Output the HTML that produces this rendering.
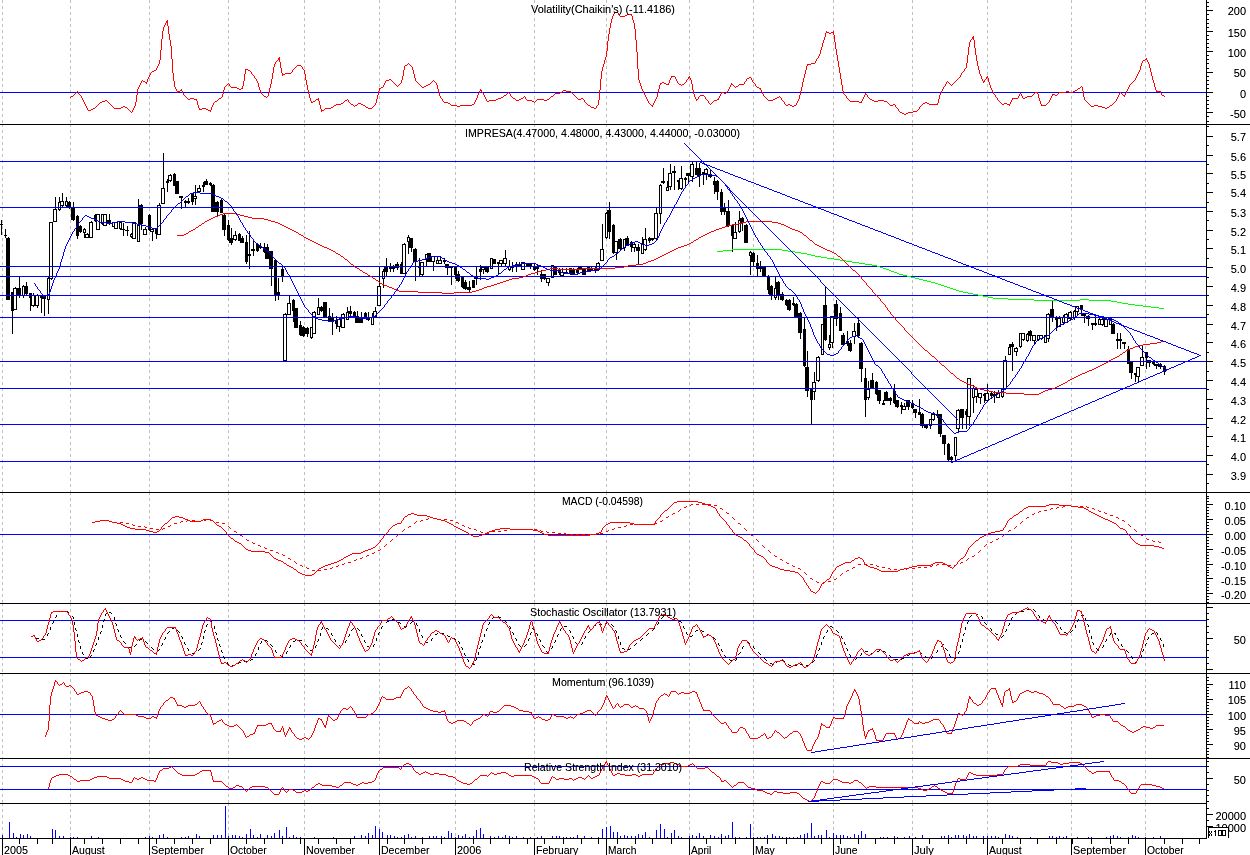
<!DOCTYPE html>
<html><head><meta charset="utf-8"><title>IMPRESA chart</title>
<style>
html,body{margin:0;padding:0;background:#fff;}
body{width:1250px;height:855px;overflow:hidden;font-family:"Liberation Sans",sans-serif;}
svg{display:block;}
text{font-family:"Liberation Sans",sans-serif;}
</style></head><body>
<svg width="1250" height="855" viewBox="0 0 1250 855">
<defs><filter id="txt" x="0" y="0" width="100%" height="100%" filterUnits="userSpaceOnUse" color-interpolation-filters="sRGB"><feComponentTransfer><feFuncA type="linear" slope="1.15" intercept="0"/></feComponentTransfer></filter></defs>
<rect x="0" y="0" width="1250" height="855" fill="#ffffff"/>
<g shape-rendering="crispEdges">
<line x1="2.5" y1="0" x2="2.5" y2="124" stroke="#c0c0c0" stroke-width="1" stroke-dasharray="3,3"/>
<line x1="2.5" y1="124" x2="2.5" y2="492" stroke="#c0c0c0" stroke-width="1" stroke-dasharray="3,3"/>
<line x1="2.5" y1="492" x2="2.5" y2="603" stroke="#c0c0c0" stroke-width="1" stroke-dasharray="3,3"/>
<line x1="2.5" y1="603" x2="2.5" y2="673" stroke="#c0c0c0" stroke-width="1" stroke-dasharray="3,3"/>
<line x1="2.5" y1="673" x2="2.5" y2="758" stroke="#c0c0c0" stroke-width="1" stroke-dasharray="3,3"/>
<line x1="2.5" y1="758" x2="2.5" y2="803" stroke="#c0c0c0" stroke-width="1" stroke-dasharray="3,3"/>
<line x1="2.5" y1="803" x2="2.5" y2="838" stroke="#c0c0c0" stroke-width="1" stroke-dasharray="3,3"/>
<line x1="70.5" y1="0" x2="70.5" y2="124" stroke="#c0c0c0" stroke-width="1" stroke-dasharray="3,3"/>
<line x1="70.5" y1="124" x2="70.5" y2="492" stroke="#c0c0c0" stroke-width="1" stroke-dasharray="3,3"/>
<line x1="70.5" y1="492" x2="70.5" y2="603" stroke="#c0c0c0" stroke-width="1" stroke-dasharray="3,3"/>
<line x1="70.5" y1="603" x2="70.5" y2="673" stroke="#c0c0c0" stroke-width="1" stroke-dasharray="3,3"/>
<line x1="70.5" y1="673" x2="70.5" y2="758" stroke="#c0c0c0" stroke-width="1" stroke-dasharray="3,3"/>
<line x1="70.5" y1="758" x2="70.5" y2="803" stroke="#c0c0c0" stroke-width="1" stroke-dasharray="3,3"/>
<line x1="70.5" y1="803" x2="70.5" y2="838" stroke="#c0c0c0" stroke-width="1" stroke-dasharray="3,3"/>
<line x1="149.5" y1="0" x2="149.5" y2="124" stroke="#c0c0c0" stroke-width="1" stroke-dasharray="3,3"/>
<line x1="149.5" y1="124" x2="149.5" y2="492" stroke="#c0c0c0" stroke-width="1" stroke-dasharray="3,3"/>
<line x1="149.5" y1="492" x2="149.5" y2="603" stroke="#c0c0c0" stroke-width="1" stroke-dasharray="3,3"/>
<line x1="149.5" y1="603" x2="149.5" y2="673" stroke="#c0c0c0" stroke-width="1" stroke-dasharray="3,3"/>
<line x1="149.5" y1="673" x2="149.5" y2="758" stroke="#c0c0c0" stroke-width="1" stroke-dasharray="3,3"/>
<line x1="149.5" y1="758" x2="149.5" y2="803" stroke="#c0c0c0" stroke-width="1" stroke-dasharray="3,3"/>
<line x1="149.5" y1="803" x2="149.5" y2="838" stroke="#c0c0c0" stroke-width="1" stroke-dasharray="3,3"/>
<line x1="228.5" y1="0" x2="228.5" y2="124" stroke="#c0c0c0" stroke-width="1" stroke-dasharray="3,3"/>
<line x1="228.5" y1="124" x2="228.5" y2="492" stroke="#c0c0c0" stroke-width="1" stroke-dasharray="3,3"/>
<line x1="228.5" y1="492" x2="228.5" y2="603" stroke="#c0c0c0" stroke-width="1" stroke-dasharray="3,3"/>
<line x1="228.5" y1="603" x2="228.5" y2="673" stroke="#c0c0c0" stroke-width="1" stroke-dasharray="3,3"/>
<line x1="228.5" y1="673" x2="228.5" y2="758" stroke="#c0c0c0" stroke-width="1" stroke-dasharray="3,3"/>
<line x1="228.5" y1="758" x2="228.5" y2="803" stroke="#c0c0c0" stroke-width="1" stroke-dasharray="3,3"/>
<line x1="228.5" y1="803" x2="228.5" y2="838" stroke="#c0c0c0" stroke-width="1" stroke-dasharray="3,3"/>
<line x1="304.5" y1="0" x2="304.5" y2="124" stroke="#c0c0c0" stroke-width="1" stroke-dasharray="3,3"/>
<line x1="304.5" y1="124" x2="304.5" y2="492" stroke="#c0c0c0" stroke-width="1" stroke-dasharray="3,3"/>
<line x1="304.5" y1="492" x2="304.5" y2="603" stroke="#c0c0c0" stroke-width="1" stroke-dasharray="3,3"/>
<line x1="304.5" y1="603" x2="304.5" y2="673" stroke="#c0c0c0" stroke-width="1" stroke-dasharray="3,3"/>
<line x1="304.5" y1="673" x2="304.5" y2="758" stroke="#c0c0c0" stroke-width="1" stroke-dasharray="3,3"/>
<line x1="304.5" y1="758" x2="304.5" y2="803" stroke="#c0c0c0" stroke-width="1" stroke-dasharray="3,3"/>
<line x1="304.5" y1="803" x2="304.5" y2="838" stroke="#c0c0c0" stroke-width="1" stroke-dasharray="3,3"/>
<line x1="379.5" y1="0" x2="379.5" y2="124" stroke="#c0c0c0" stroke-width="1" stroke-dasharray="3,3"/>
<line x1="379.5" y1="124" x2="379.5" y2="492" stroke="#c0c0c0" stroke-width="1" stroke-dasharray="3,3"/>
<line x1="379.5" y1="492" x2="379.5" y2="603" stroke="#c0c0c0" stroke-width="1" stroke-dasharray="3,3"/>
<line x1="379.5" y1="603" x2="379.5" y2="673" stroke="#c0c0c0" stroke-width="1" stroke-dasharray="3,3"/>
<line x1="379.5" y1="673" x2="379.5" y2="758" stroke="#c0c0c0" stroke-width="1" stroke-dasharray="3,3"/>
<line x1="379.5" y1="758" x2="379.5" y2="803" stroke="#c0c0c0" stroke-width="1" stroke-dasharray="3,3"/>
<line x1="379.5" y1="803" x2="379.5" y2="838" stroke="#c0c0c0" stroke-width="1" stroke-dasharray="3,3"/>
<line x1="455.5" y1="0" x2="455.5" y2="124" stroke="#c0c0c0" stroke-width="1" stroke-dasharray="3,3"/>
<line x1="455.5" y1="124" x2="455.5" y2="492" stroke="#c0c0c0" stroke-width="1" stroke-dasharray="3,3"/>
<line x1="455.5" y1="492" x2="455.5" y2="603" stroke="#c0c0c0" stroke-width="1" stroke-dasharray="3,3"/>
<line x1="455.5" y1="603" x2="455.5" y2="673" stroke="#c0c0c0" stroke-width="1" stroke-dasharray="3,3"/>
<line x1="455.5" y1="673" x2="455.5" y2="758" stroke="#c0c0c0" stroke-width="1" stroke-dasharray="3,3"/>
<line x1="455.5" y1="758" x2="455.5" y2="803" stroke="#c0c0c0" stroke-width="1" stroke-dasharray="3,3"/>
<line x1="455.5" y1="803" x2="455.5" y2="838" stroke="#c0c0c0" stroke-width="1" stroke-dasharray="3,3"/>
<line x1="534.5" y1="0" x2="534.5" y2="124" stroke="#c0c0c0" stroke-width="1" stroke-dasharray="3,3"/>
<line x1="534.5" y1="124" x2="534.5" y2="492" stroke="#c0c0c0" stroke-width="1" stroke-dasharray="3,3"/>
<line x1="534.5" y1="492" x2="534.5" y2="603" stroke="#c0c0c0" stroke-width="1" stroke-dasharray="3,3"/>
<line x1="534.5" y1="603" x2="534.5" y2="673" stroke="#c0c0c0" stroke-width="1" stroke-dasharray="3,3"/>
<line x1="534.5" y1="673" x2="534.5" y2="758" stroke="#c0c0c0" stroke-width="1" stroke-dasharray="3,3"/>
<line x1="534.5" y1="758" x2="534.5" y2="803" stroke="#c0c0c0" stroke-width="1" stroke-dasharray="3,3"/>
<line x1="534.5" y1="803" x2="534.5" y2="838" stroke="#c0c0c0" stroke-width="1" stroke-dasharray="3,3"/>
<line x1="606.5" y1="0" x2="606.5" y2="124" stroke="#c0c0c0" stroke-width="1" stroke-dasharray="3,3"/>
<line x1="606.5" y1="124" x2="606.5" y2="492" stroke="#c0c0c0" stroke-width="1" stroke-dasharray="3,3"/>
<line x1="606.5" y1="492" x2="606.5" y2="603" stroke="#c0c0c0" stroke-width="1" stroke-dasharray="3,3"/>
<line x1="606.5" y1="603" x2="606.5" y2="673" stroke="#c0c0c0" stroke-width="1" stroke-dasharray="3,3"/>
<line x1="606.5" y1="673" x2="606.5" y2="758" stroke="#c0c0c0" stroke-width="1" stroke-dasharray="3,3"/>
<line x1="606.5" y1="758" x2="606.5" y2="803" stroke="#c0c0c0" stroke-width="1" stroke-dasharray="3,3"/>
<line x1="606.5" y1="803" x2="606.5" y2="838" stroke="#c0c0c0" stroke-width="1" stroke-dasharray="3,3"/>
<line x1="689.5" y1="0" x2="689.5" y2="124" stroke="#c0c0c0" stroke-width="1" stroke-dasharray="3,3"/>
<line x1="689.5" y1="124" x2="689.5" y2="492" stroke="#c0c0c0" stroke-width="1" stroke-dasharray="3,3"/>
<line x1="689.5" y1="492" x2="689.5" y2="603" stroke="#c0c0c0" stroke-width="1" stroke-dasharray="3,3"/>
<line x1="689.5" y1="603" x2="689.5" y2="673" stroke="#c0c0c0" stroke-width="1" stroke-dasharray="3,3"/>
<line x1="689.5" y1="673" x2="689.5" y2="758" stroke="#c0c0c0" stroke-width="1" stroke-dasharray="3,3"/>
<line x1="689.5" y1="758" x2="689.5" y2="803" stroke="#c0c0c0" stroke-width="1" stroke-dasharray="3,3"/>
<line x1="689.5" y1="803" x2="689.5" y2="838" stroke="#c0c0c0" stroke-width="1" stroke-dasharray="3,3"/>
<line x1="753.5" y1="0" x2="753.5" y2="124" stroke="#c0c0c0" stroke-width="1" stroke-dasharray="3,3"/>
<line x1="753.5" y1="124" x2="753.5" y2="492" stroke="#c0c0c0" stroke-width="1" stroke-dasharray="3,3"/>
<line x1="753.5" y1="492" x2="753.5" y2="603" stroke="#c0c0c0" stroke-width="1" stroke-dasharray="3,3"/>
<line x1="753.5" y1="603" x2="753.5" y2="673" stroke="#c0c0c0" stroke-width="1" stroke-dasharray="3,3"/>
<line x1="753.5" y1="673" x2="753.5" y2="758" stroke="#c0c0c0" stroke-width="1" stroke-dasharray="3,3"/>
<line x1="753.5" y1="758" x2="753.5" y2="803" stroke="#c0c0c0" stroke-width="1" stroke-dasharray="3,3"/>
<line x1="753.5" y1="803" x2="753.5" y2="838" stroke="#c0c0c0" stroke-width="1" stroke-dasharray="3,3"/>
<line x1="833.5" y1="0" x2="833.5" y2="124" stroke="#c0c0c0" stroke-width="1" stroke-dasharray="3,3"/>
<line x1="833.5" y1="124" x2="833.5" y2="492" stroke="#c0c0c0" stroke-width="1" stroke-dasharray="3,3"/>
<line x1="833.5" y1="492" x2="833.5" y2="603" stroke="#c0c0c0" stroke-width="1" stroke-dasharray="3,3"/>
<line x1="833.5" y1="603" x2="833.5" y2="673" stroke="#c0c0c0" stroke-width="1" stroke-dasharray="3,3"/>
<line x1="833.5" y1="673" x2="833.5" y2="758" stroke="#c0c0c0" stroke-width="1" stroke-dasharray="3,3"/>
<line x1="833.5" y1="758" x2="833.5" y2="803" stroke="#c0c0c0" stroke-width="1" stroke-dasharray="3,3"/>
<line x1="833.5" y1="803" x2="833.5" y2="838" stroke="#c0c0c0" stroke-width="1" stroke-dasharray="3,3"/>
<line x1="912.5" y1="0" x2="912.5" y2="124" stroke="#c0c0c0" stroke-width="1" stroke-dasharray="3,3"/>
<line x1="912.5" y1="124" x2="912.5" y2="492" stroke="#c0c0c0" stroke-width="1" stroke-dasharray="3,3"/>
<line x1="912.5" y1="492" x2="912.5" y2="603" stroke="#c0c0c0" stroke-width="1" stroke-dasharray="3,3"/>
<line x1="912.5" y1="603" x2="912.5" y2="673" stroke="#c0c0c0" stroke-width="1" stroke-dasharray="3,3"/>
<line x1="912.5" y1="673" x2="912.5" y2="758" stroke="#c0c0c0" stroke-width="1" stroke-dasharray="3,3"/>
<line x1="912.5" y1="758" x2="912.5" y2="803" stroke="#c0c0c0" stroke-width="1" stroke-dasharray="3,3"/>
<line x1="912.5" y1="803" x2="912.5" y2="838" stroke="#c0c0c0" stroke-width="1" stroke-dasharray="3,3"/>
<line x1="987.5" y1="0" x2="987.5" y2="124" stroke="#c0c0c0" stroke-width="1" stroke-dasharray="3,3"/>
<line x1="987.5" y1="124" x2="987.5" y2="492" stroke="#c0c0c0" stroke-width="1" stroke-dasharray="3,3"/>
<line x1="987.5" y1="492" x2="987.5" y2="603" stroke="#c0c0c0" stroke-width="1" stroke-dasharray="3,3"/>
<line x1="987.5" y1="603" x2="987.5" y2="673" stroke="#c0c0c0" stroke-width="1" stroke-dasharray="3,3"/>
<line x1="987.5" y1="673" x2="987.5" y2="758" stroke="#c0c0c0" stroke-width="1" stroke-dasharray="3,3"/>
<line x1="987.5" y1="758" x2="987.5" y2="803" stroke="#c0c0c0" stroke-width="1" stroke-dasharray="3,3"/>
<line x1="987.5" y1="803" x2="987.5" y2="838" stroke="#c0c0c0" stroke-width="1" stroke-dasharray="3,3"/>
<line x1="1071.5" y1="0" x2="1071.5" y2="124" stroke="#c0c0c0" stroke-width="1" stroke-dasharray="3,3"/>
<line x1="1071.5" y1="124" x2="1071.5" y2="492" stroke="#c0c0c0" stroke-width="1" stroke-dasharray="3,3"/>
<line x1="1071.5" y1="492" x2="1071.5" y2="603" stroke="#c0c0c0" stroke-width="1" stroke-dasharray="3,3"/>
<line x1="1071.5" y1="603" x2="1071.5" y2="673" stroke="#c0c0c0" stroke-width="1" stroke-dasharray="3,3"/>
<line x1="1071.5" y1="673" x2="1071.5" y2="758" stroke="#c0c0c0" stroke-width="1" stroke-dasharray="3,3"/>
<line x1="1071.5" y1="758" x2="1071.5" y2="803" stroke="#c0c0c0" stroke-width="1" stroke-dasharray="3,3"/>
<line x1="1071.5" y1="803" x2="1071.5" y2="838" stroke="#c0c0c0" stroke-width="1" stroke-dasharray="3,3"/>
<line x1="1145.5" y1="0" x2="1145.5" y2="124" stroke="#c0c0c0" stroke-width="1" stroke-dasharray="3,3"/>
<line x1="1145.5" y1="124" x2="1145.5" y2="492" stroke="#c0c0c0" stroke-width="1" stroke-dasharray="3,3"/>
<line x1="1145.5" y1="492" x2="1145.5" y2="603" stroke="#c0c0c0" stroke-width="1" stroke-dasharray="3,3"/>
<line x1="1145.5" y1="603" x2="1145.5" y2="673" stroke="#c0c0c0" stroke-width="1" stroke-dasharray="3,3"/>
<line x1="1145.5" y1="673" x2="1145.5" y2="758" stroke="#c0c0c0" stroke-width="1" stroke-dasharray="3,3"/>
<line x1="1145.5" y1="758" x2="1145.5" y2="803" stroke="#c0c0c0" stroke-width="1" stroke-dasharray="3,3"/>
<line x1="1145.5" y1="803" x2="1145.5" y2="838" stroke="#c0c0c0" stroke-width="1" stroke-dasharray="3,3"/>
<rect x="0" y="124" width="1250" height="1" fill="#000"/>
<rect x="0" y="492" width="1250" height="1" fill="#000"/>
<rect x="0" y="603" width="1250" height="1" fill="#000"/>
<rect x="0" y="673" width="1250" height="1" fill="#000"/>
<rect x="0" y="758" width="1250" height="1" fill="#000"/>
<rect x="0" y="803" width="1207" height="1" fill="#000"/>
<rect x="1206" y="0" width="1" height="839" fill="#000"/>
<rect x="0" y="838" width="1207" height="1" fill="#000"/>
<rect x="1207" y="121" width="2" height="1" fill="#000"/>
<rect x="1207" y="116" width="2" height="1" fill="#000"/>
<rect x="1207" y="112" width="6" height="1" fill="#000"/>
<rect x="1207" y="108" width="2" height="1" fill="#000"/>
<rect x="1207" y="104" width="2" height="1" fill="#000"/>
<rect x="1207" y="100" width="2" height="1" fill="#000"/>
<rect x="1207" y="96" width="2" height="1" fill="#000"/>
<rect x="1207" y="92" width="6" height="1" fill="#000"/>
<rect x="1207" y="88" width="2" height="1" fill="#000"/>
<rect x="1207" y="84" width="2" height="1" fill="#000"/>
<rect x="1207" y="80" width="2" height="1" fill="#000"/>
<rect x="1207" y="76" width="2" height="1" fill="#000"/>
<rect x="1207" y="72" width="6" height="1" fill="#000"/>
<rect x="1207" y="68" width="2" height="1" fill="#000"/>
<rect x="1207" y="63" width="2" height="1" fill="#000"/>
<rect x="1207" y="59" width="2" height="1" fill="#000"/>
<rect x="1207" y="55" width="2" height="1" fill="#000"/>
<rect x="1207" y="51" width="6" height="1" fill="#000"/>
<rect x="1207" y="47" width="2" height="1" fill="#000"/>
<rect x="1207" y="43" width="2" height="1" fill="#000"/>
<rect x="1207" y="39" width="2" height="1" fill="#000"/>
<rect x="1207" y="35" width="2" height="1" fill="#000"/>
<rect x="1207" y="31" width="6" height="1" fill="#000"/>
<rect x="1207" y="27" width="2" height="1" fill="#000"/>
<rect x="1207" y="23" width="2" height="1" fill="#000"/>
<rect x="1207" y="19" width="2" height="1" fill="#000"/>
<rect x="1207" y="14" width="2" height="1" fill="#000"/>
<rect x="1207" y="10" width="6" height="1" fill="#000"/>
<rect x="1207" y="6" width="2" height="1" fill="#000"/>
<rect x="1207" y="2" width="2" height="1" fill="#000"/>
<rect x="1207" y="126" width="2" height="1" fill="#000"/>
<rect x="1207" y="136" width="6" height="1" fill="#000"/>
<rect x="1207" y="145" width="2" height="1" fill="#000"/>
<rect x="1207" y="155" width="6" height="1" fill="#000"/>
<rect x="1207" y="164" width="2" height="1" fill="#000"/>
<rect x="1207" y="173" width="6" height="1" fill="#000"/>
<rect x="1207" y="183" width="2" height="1" fill="#000"/>
<rect x="1207" y="192" width="6" height="1" fill="#000"/>
<rect x="1207" y="202" width="2" height="1" fill="#000"/>
<rect x="1207" y="211" width="6" height="1" fill="#000"/>
<rect x="1207" y="220" width="2" height="1" fill="#000"/>
<rect x="1207" y="230" width="6" height="1" fill="#000"/>
<rect x="1207" y="239" width="2" height="1" fill="#000"/>
<rect x="1207" y="248" width="6" height="1" fill="#000"/>
<rect x="1207" y="258" width="2" height="1" fill="#000"/>
<rect x="1207" y="267" width="6" height="1" fill="#000"/>
<rect x="1207" y="277" width="2" height="1" fill="#000"/>
<rect x="1207" y="286" width="6" height="1" fill="#000"/>
<rect x="1207" y="295" width="2" height="1" fill="#000"/>
<rect x="1207" y="305" width="6" height="1" fill="#000"/>
<rect x="1207" y="314" width="2" height="1" fill="#000"/>
<rect x="1207" y="324" width="6" height="1" fill="#000"/>
<rect x="1207" y="333" width="2" height="1" fill="#000"/>
<rect x="1207" y="342" width="6" height="1" fill="#000"/>
<rect x="1207" y="352" width="2" height="1" fill="#000"/>
<rect x="1207" y="361" width="6" height="1" fill="#000"/>
<rect x="1207" y="371" width="2" height="1" fill="#000"/>
<rect x="1207" y="380" width="6" height="1" fill="#000"/>
<rect x="1207" y="389" width="2" height="1" fill="#000"/>
<rect x="1207" y="399" width="6" height="1" fill="#000"/>
<rect x="1207" y="408" width="2" height="1" fill="#000"/>
<rect x="1207" y="418" width="6" height="1" fill="#000"/>
<rect x="1207" y="427" width="2" height="1" fill="#000"/>
<rect x="1207" y="436" width="6" height="1" fill="#000"/>
<rect x="1207" y="446" width="2" height="1" fill="#000"/>
<rect x="1207" y="455" width="6" height="1" fill="#000"/>
<rect x="1207" y="464" width="2" height="1" fill="#000"/>
<rect x="1207" y="474" width="6" height="1" fill="#000"/>
<rect x="1207" y="483" width="2" height="1" fill="#000"/>
<rect x="1207" y="602" width="2" height="1" fill="#000"/>
<rect x="1207" y="599" width="2" height="1" fill="#000"/>
<rect x="1207" y="596" width="2" height="1" fill="#000"/>
<rect x="1207" y="593" width="6" height="1" fill="#000"/>
<rect x="1207" y="590" width="2" height="1" fill="#000"/>
<rect x="1207" y="587" width="2" height="1" fill="#000"/>
<rect x="1207" y="584" width="2" height="1" fill="#000"/>
<rect x="1207" y="581" width="2" height="1" fill="#000"/>
<rect x="1207" y="578" width="6" height="1" fill="#000"/>
<rect x="1207" y="575" width="2" height="1" fill="#000"/>
<rect x="1207" y="572" width="2" height="1" fill="#000"/>
<rect x="1207" y="570" width="2" height="1" fill="#000"/>
<rect x="1207" y="567" width="2" height="1" fill="#000"/>
<rect x="1207" y="564" width="6" height="1" fill="#000"/>
<rect x="1207" y="561" width="2" height="1" fill="#000"/>
<rect x="1207" y="558" width="2" height="1" fill="#000"/>
<rect x="1207" y="555" width="2" height="1" fill="#000"/>
<rect x="1207" y="552" width="2" height="1" fill="#000"/>
<rect x="1207" y="549" width="6" height="1" fill="#000"/>
<rect x="1207" y="546" width="2" height="1" fill="#000"/>
<rect x="1207" y="543" width="2" height="1" fill="#000"/>
<rect x="1207" y="540" width="2" height="1" fill="#000"/>
<rect x="1207" y="537" width="2" height="1" fill="#000"/>
<rect x="1207" y="534" width="6" height="1" fill="#000"/>
<rect x="1207" y="531" width="2" height="1" fill="#000"/>
<rect x="1207" y="528" width="2" height="1" fill="#000"/>
<rect x="1207" y="525" width="2" height="1" fill="#000"/>
<rect x="1207" y="522" width="2" height="1" fill="#000"/>
<rect x="1207" y="519" width="6" height="1" fill="#000"/>
<rect x="1207" y="516" width="2" height="1" fill="#000"/>
<rect x="1207" y="513" width="2" height="1" fill="#000"/>
<rect x="1207" y="510" width="2" height="1" fill="#000"/>
<rect x="1207" y="507" width="2" height="1" fill="#000"/>
<rect x="1207" y="504" width="6" height="1" fill="#000"/>
<rect x="1207" y="501" width="2" height="1" fill="#000"/>
<rect x="1207" y="498" width="2" height="1" fill="#000"/>
<rect x="1207" y="496" width="2" height="1" fill="#000"/>
<rect x="1207" y="669" width="6" height="1" fill="#000"/>
<rect x="1207" y="663" width="2" height="1" fill="#000"/>
<rect x="1207" y="657" width="2" height="1" fill="#000"/>
<rect x="1207" y="650" width="2" height="1" fill="#000"/>
<rect x="1207" y="644" width="2" height="1" fill="#000"/>
<rect x="1207" y="638" width="6" height="1" fill="#000"/>
<rect x="1207" y="632" width="2" height="1" fill="#000"/>
<rect x="1207" y="626" width="2" height="1" fill="#000"/>
<rect x="1207" y="619" width="2" height="1" fill="#000"/>
<rect x="1207" y="613" width="2" height="1" fill="#000"/>
<rect x="1207" y="607" width="6" height="1" fill="#000"/>
<rect x="1207" y="757" width="2" height="1" fill="#000"/>
<rect x="1207" y="754" width="2" height="1" fill="#000"/>
<rect x="1207" y="751" width="2" height="1" fill="#000"/>
<rect x="1207" y="748" width="2" height="1" fill="#000"/>
<rect x="1207" y="744" width="6" height="1" fill="#000"/>
<rect x="1207" y="741" width="2" height="1" fill="#000"/>
<rect x="1207" y="738" width="2" height="1" fill="#000"/>
<rect x="1207" y="735" width="2" height="1" fill="#000"/>
<rect x="1207" y="732" width="2" height="1" fill="#000"/>
<rect x="1207" y="729" width="6" height="1" fill="#000"/>
<rect x="1207" y="726" width="2" height="1" fill="#000"/>
<rect x="1207" y="723" width="2" height="1" fill="#000"/>
<rect x="1207" y="720" width="2" height="1" fill="#000"/>
<rect x="1207" y="717" width="2" height="1" fill="#000"/>
<rect x="1207" y="714" width="6" height="1" fill="#000"/>
<rect x="1207" y="711" width="2" height="1" fill="#000"/>
<rect x="1207" y="708" width="2" height="1" fill="#000"/>
<rect x="1207" y="705" width="2" height="1" fill="#000"/>
<rect x="1207" y="702" width="2" height="1" fill="#000"/>
<rect x="1207" y="699" width="6" height="1" fill="#000"/>
<rect x="1207" y="696" width="2" height="1" fill="#000"/>
<rect x="1207" y="693" width="2" height="1" fill="#000"/>
<rect x="1207" y="690" width="2" height="1" fill="#000"/>
<rect x="1207" y="687" width="2" height="1" fill="#000"/>
<rect x="1207" y="684" width="6" height="1" fill="#000"/>
<rect x="1207" y="680" width="2" height="1" fill="#000"/>
<rect x="1207" y="677" width="2" height="1" fill="#000"/>
<rect x="1207" y="801" width="2" height="1" fill="#000"/>
<rect x="1207" y="795" width="2" height="1" fill="#000"/>
<rect x="1207" y="790" width="2" height="1" fill="#000"/>
<rect x="1207" y="784" width="2" height="1" fill="#000"/>
<rect x="1207" y="778" width="6" height="1" fill="#000"/>
<rect x="1207" y="772" width="2" height="1" fill="#000"/>
<rect x="1207" y="766" width="2" height="1" fill="#000"/>
<rect x="1207" y="761" width="2" height="1" fill="#000"/>
<rect x="1207" y="808" width="2" height="1" fill="#000"/>
<rect x="1207" y="814" width="6" height="1" fill="#000"/>
<rect x="1207" y="820" width="2" height="1" fill="#000"/>
<rect x="1207" y="826" width="6" height="1" fill="#000"/>
<rect x="1207" y="832" width="2" height="1" fill="#000"/>
<rect x="2" y="838" width="1" height="17" fill="#000"/>
<rect x="70" y="838" width="1" height="17" fill="#000"/>
<rect x="149" y="838" width="1" height="17" fill="#000"/>
<rect x="228" y="838" width="1" height="17" fill="#000"/>
<rect x="304" y="838" width="1" height="17" fill="#000"/>
<rect x="379" y="838" width="1" height="17" fill="#000"/>
<rect x="455" y="838" width="1" height="17" fill="#000"/>
<rect x="534" y="838" width="1" height="17" fill="#000"/>
<rect x="606" y="838" width="1" height="17" fill="#000"/>
<rect x="689" y="838" width="1" height="17" fill="#000"/>
<rect x="753" y="838" width="1" height="17" fill="#000"/>
<rect x="833" y="838" width="1" height="17" fill="#000"/>
<rect x="912" y="838" width="1" height="17" fill="#000"/>
<rect x="987" y="838" width="1" height="17" fill="#000"/>
<rect x="1071" y="838" width="1" height="17" fill="#000"/>
<rect x="1145" y="838" width="1" height="17" fill="#000"/>
<rect x="19" y="838" width="1" height="6" fill="#000"/>
<rect x="37" y="838" width="1" height="6" fill="#000"/>
<rect x="52" y="838" width="1" height="6" fill="#000"/>
<rect x="84" y="838" width="1" height="6" fill="#000"/>
<rect x="102" y="838" width="1" height="6" fill="#000"/>
<rect x="120" y="838" width="1" height="6" fill="#000"/>
<rect x="138" y="838" width="1" height="6" fill="#000"/>
<rect x="156" y="838" width="1" height="6" fill="#000"/>
<rect x="174" y="838" width="1" height="6" fill="#000"/>
<rect x="192" y="838" width="1" height="6" fill="#000"/>
<rect x="210" y="838" width="1" height="6" fill="#000"/>
<rect x="246" y="838" width="1" height="6" fill="#000"/>
<rect x="264" y="838" width="1" height="6" fill="#000"/>
<rect x="282" y="838" width="1" height="6" fill="#000"/>
<rect x="300" y="838" width="1" height="6" fill="#000"/>
<rect x="318" y="838" width="1" height="6" fill="#000"/>
<rect x="336" y="838" width="1" height="6" fill="#000"/>
<rect x="350" y="838" width="1" height="6" fill="#000"/>
<rect x="368" y="838" width="1" height="6" fill="#000"/>
<rect x="387" y="838" width="1" height="6" fill="#000"/>
<rect x="404" y="838" width="1" height="6" fill="#000"/>
<rect x="422" y="838" width="1" height="6" fill="#000"/>
<rect x="441" y="838" width="1" height="6" fill="#000"/>
<rect x="473" y="838" width="1" height="6" fill="#000"/>
<rect x="490" y="838" width="1" height="6" fill="#000"/>
<rect x="509" y="838" width="1" height="6" fill="#000"/>
<rect x="527" y="838" width="1" height="6" fill="#000"/>
<rect x="544" y="838" width="1" height="6" fill="#000"/>
<rect x="563" y="838" width="1" height="6" fill="#000"/>
<rect x="581" y="838" width="1" height="6" fill="#000"/>
<rect x="598" y="838" width="1" height="6" fill="#000"/>
<rect x="617" y="838" width="1" height="6" fill="#000"/>
<rect x="635" y="838" width="1" height="6" fill="#000"/>
<rect x="652" y="838" width="1" height="6" fill="#000"/>
<rect x="671" y="838" width="1" height="6" fill="#000"/>
<rect x="706" y="838" width="1" height="6" fill="#000"/>
<rect x="721" y="838" width="1" height="6" fill="#000"/>
<rect x="735" y="838" width="1" height="6" fill="#000"/>
<rect x="767" y="838" width="1" height="6" fill="#000"/>
<rect x="786" y="838" width="1" height="6" fill="#000"/>
<rect x="804" y="838" width="1" height="6" fill="#000"/>
<rect x="821" y="838" width="1" height="6" fill="#000"/>
<rect x="840" y="838" width="1" height="6" fill="#000"/>
<rect x="858" y="838" width="1" height="6" fill="#000"/>
<rect x="875" y="838" width="1" height="6" fill="#000"/>
<rect x="894" y="838" width="1" height="6" fill="#000"/>
<rect x="929" y="838" width="1" height="6" fill="#000"/>
<rect x="948" y="838" width="1" height="6" fill="#000"/>
<rect x="966" y="838" width="1" height="6" fill="#000"/>
<rect x="983" y="838" width="1" height="6" fill="#000"/>
<rect x="1002" y="838" width="1" height="6" fill="#000"/>
<rect x="1020" y="838" width="1" height="6" fill="#000"/>
<rect x="1037" y="838" width="1" height="6" fill="#000"/>
<rect x="1056" y="838" width="1" height="6" fill="#000"/>
<rect x="1072" y="838" width="1" height="6" fill="#000"/>
<rect x="1091" y="838" width="1" height="6" fill="#000"/>
<rect x="1110" y="838" width="1" height="6" fill="#000"/>
<rect x="1128" y="838" width="1" height="6" fill="#000"/>
<rect x="1164" y="838" width="1" height="6" fill="#000"/>
<rect x="1182" y="838" width="1" height="6" fill="#000"/>
<rect x="1199" y="838" width="1" height="6" fill="#000"/>
</g>
<g shape-rendering="crispEdges">
<rect x="2" y="835" width="1" height="3" fill="#0000ff"/>
<rect x="9" y="822" width="1" height="16" fill="#0000ff"/>
<rect x="13" y="833" width="1" height="5" fill="#0000ff"/>
<rect x="16" y="837" width="1" height="1" fill="#0000ff"/>
<rect x="20" y="834" width="1" height="4" fill="#0000ff"/>
<rect x="23" y="835" width="1" height="3" fill="#0000ff"/>
<rect x="27" y="834" width="1" height="4" fill="#0000ff"/>
<rect x="30" y="836" width="1" height="2" fill="#0000ff"/>
<rect x="52" y="829" width="1" height="9" fill="#0000ff"/>
<rect x="55" y="830" width="1" height="8" fill="#0000ff"/>
<rect x="59" y="836" width="1" height="2" fill="#0000ff"/>
<rect x="63" y="836" width="1" height="2" fill="#0000ff"/>
<rect x="70" y="837" width="1" height="1" fill="#0000ff"/>
<rect x="73" y="837" width="1" height="1" fill="#0000ff"/>
<rect x="77" y="837" width="1" height="1" fill="#0000ff"/>
<rect x="91" y="836" width="1" height="2" fill="#0000ff"/>
<rect x="98" y="837" width="1" height="1" fill="#0000ff"/>
<rect x="145" y="837" width="1" height="1" fill="#0000ff"/>
<rect x="149" y="836" width="1" height="2" fill="#0000ff"/>
<rect x="152" y="837" width="1" height="1" fill="#0000ff"/>
<rect x="159" y="835" width="1" height="3" fill="#0000ff"/>
<rect x="163" y="834" width="1" height="4" fill="#0000ff"/>
<rect x="167" y="837" width="1" height="1" fill="#0000ff"/>
<rect x="181" y="837" width="1" height="1" fill="#0000ff"/>
<rect x="185" y="837" width="1" height="1" fill="#0000ff"/>
<rect x="188" y="836" width="1" height="2" fill="#0000ff"/>
<rect x="196" y="834" width="1" height="4" fill="#0000ff"/>
<rect x="199" y="836" width="1" height="2" fill="#0000ff"/>
<rect x="213" y="835" width="1" height="3" fill="#0000ff"/>
<rect x="217" y="835" width="1" height="3" fill="#0000ff"/>
<rect x="221" y="835" width="1" height="3" fill="#0000ff"/>
<rect x="225" y="806" width="1" height="32" fill="#0000ff"/>
<rect x="228" y="836" width="1" height="2" fill="#0000ff"/>
<rect x="232" y="835" width="1" height="3" fill="#0000ff"/>
<rect x="235" y="835" width="1" height="3" fill="#0000ff"/>
<rect x="239" y="836" width="1" height="2" fill="#0000ff"/>
<rect x="242" y="837" width="1" height="1" fill="#0000ff"/>
<rect x="246" y="834" width="1" height="4" fill="#0000ff"/>
<rect x="250" y="829" width="1" height="9" fill="#0000ff"/>
<rect x="253" y="835" width="1" height="3" fill="#0000ff"/>
<rect x="257" y="837" width="1" height="1" fill="#0000ff"/>
<rect x="260" y="834" width="1" height="4" fill="#0000ff"/>
<rect x="267" y="835" width="1" height="3" fill="#0000ff"/>
<rect x="271" y="836" width="1" height="2" fill="#0000ff"/>
<rect x="274" y="833" width="1" height="5" fill="#0000ff"/>
<rect x="279" y="830" width="1" height="8" fill="#0000ff"/>
<rect x="282" y="836" width="1" height="2" fill="#0000ff"/>
<rect x="286" y="827" width="1" height="11" fill="#0000ff"/>
<rect x="289" y="837" width="1" height="1" fill="#0000ff"/>
<rect x="293" y="835" width="1" height="3" fill="#0000ff"/>
<rect x="296" y="837" width="1" height="1" fill="#0000ff"/>
<rect x="300" y="837" width="1" height="1" fill="#0000ff"/>
<rect x="314" y="837" width="1" height="1" fill="#0000ff"/>
<rect x="333" y="837" width="1" height="1" fill="#0000ff"/>
<rect x="354" y="836" width="1" height="2" fill="#0000ff"/>
<rect x="361" y="835" width="1" height="3" fill="#0000ff"/>
<rect x="365" y="836" width="1" height="2" fill="#0000ff"/>
<rect x="368" y="833" width="1" height="5" fill="#0000ff"/>
<rect x="372" y="835" width="1" height="3" fill="#0000ff"/>
<rect x="375" y="826" width="1" height="12" fill="#0000ff"/>
<rect x="379" y="829" width="1" height="9" fill="#0000ff"/>
<rect x="382" y="832" width="1" height="6" fill="#0000ff"/>
<rect x="387" y="835" width="1" height="3" fill="#0000ff"/>
<rect x="390" y="835" width="1" height="3" fill="#0000ff"/>
<rect x="394" y="836" width="1" height="2" fill="#0000ff"/>
<rect x="397" y="837" width="1" height="1" fill="#0000ff"/>
<rect x="401" y="837" width="1" height="1" fill="#0000ff"/>
<rect x="404" y="835" width="1" height="3" fill="#0000ff"/>
<rect x="408" y="834" width="1" height="4" fill="#0000ff"/>
<rect x="411" y="837" width="1" height="1" fill="#0000ff"/>
<rect x="415" y="836" width="1" height="2" fill="#0000ff"/>
<rect x="422" y="837" width="1" height="1" fill="#0000ff"/>
<rect x="429" y="836" width="1" height="2" fill="#0000ff"/>
<rect x="433" y="836" width="1" height="2" fill="#0000ff"/>
<rect x="436" y="836" width="1" height="2" fill="#0000ff"/>
<rect x="441" y="836" width="1" height="2" fill="#0000ff"/>
<rect x="444" y="837" width="1" height="1" fill="#0000ff"/>
<rect x="448" y="831" width="1" height="7" fill="#0000ff"/>
<rect x="451" y="833" width="1" height="5" fill="#0000ff"/>
<rect x="455" y="837" width="1" height="1" fill="#0000ff"/>
<rect x="458" y="835" width="1" height="3" fill="#0000ff"/>
<rect x="462" y="836" width="1" height="2" fill="#0000ff"/>
<rect x="465" y="834" width="1" height="4" fill="#0000ff"/>
<rect x="469" y="837" width="1" height="1" fill="#0000ff"/>
<rect x="473" y="836" width="1" height="2" fill="#0000ff"/>
<rect x="476" y="830" width="1" height="8" fill="#0000ff"/>
<rect x="480" y="828" width="1" height="10" fill="#0000ff"/>
<rect x="483" y="834" width="1" height="4" fill="#0000ff"/>
<rect x="490" y="836" width="1" height="2" fill="#0000ff"/>
<rect x="494" y="837" width="1" height="1" fill="#0000ff"/>
<rect x="498" y="836" width="1" height="2" fill="#0000ff"/>
<rect x="502" y="837" width="1" height="1" fill="#0000ff"/>
<rect x="505" y="835" width="1" height="3" fill="#0000ff"/>
<rect x="509" y="836" width="1" height="2" fill="#0000ff"/>
<rect x="512" y="837" width="1" height="1" fill="#0000ff"/>
<rect x="516" y="836" width="1" height="2" fill="#0000ff"/>
<rect x="523" y="837" width="1" height="1" fill="#0000ff"/>
<rect x="530" y="837" width="1" height="1" fill="#0000ff"/>
<rect x="537" y="837" width="1" height="1" fill="#0000ff"/>
<rect x="541" y="836" width="1" height="2" fill="#0000ff"/>
<rect x="552" y="836" width="1" height="2" fill="#0000ff"/>
<rect x="556" y="836" width="1" height="2" fill="#0000ff"/>
<rect x="559" y="836" width="1" height="2" fill="#0000ff"/>
<rect x="563" y="837" width="1" height="1" fill="#0000ff"/>
<rect x="566" y="837" width="1" height="1" fill="#0000ff"/>
<rect x="570" y="837" width="1" height="1" fill="#0000ff"/>
<rect x="573" y="837" width="1" height="1" fill="#0000ff"/>
<rect x="577" y="835" width="1" height="3" fill="#0000ff"/>
<rect x="584" y="836" width="1" height="2" fill="#0000ff"/>
<rect x="591" y="837" width="1" height="1" fill="#0000ff"/>
<rect x="598" y="837" width="1" height="1" fill="#0000ff"/>
<rect x="602" y="829" width="1" height="9" fill="#0000ff"/>
<rect x="606" y="827" width="1" height="11" fill="#0000ff"/>
<rect x="610" y="826" width="1" height="12" fill="#0000ff"/>
<rect x="613" y="832" width="1" height="6" fill="#0000ff"/>
<rect x="617" y="832" width="1" height="6" fill="#0000ff"/>
<rect x="620" y="836" width="1" height="2" fill="#0000ff"/>
<rect x="624" y="835" width="1" height="3" fill="#0000ff"/>
<rect x="627" y="836" width="1" height="2" fill="#0000ff"/>
<rect x="631" y="836" width="1" height="2" fill="#0000ff"/>
<rect x="635" y="836" width="1" height="2" fill="#0000ff"/>
<rect x="638" y="834" width="1" height="4" fill="#0000ff"/>
<rect x="642" y="835" width="1" height="3" fill="#0000ff"/>
<rect x="645" y="832" width="1" height="6" fill="#0000ff"/>
<rect x="649" y="837" width="1" height="1" fill="#0000ff"/>
<rect x="656" y="830" width="1" height="8" fill="#0000ff"/>
<rect x="660" y="824" width="1" height="14" fill="#0000ff"/>
<rect x="664" y="829" width="1" height="9" fill="#0000ff"/>
<rect x="667" y="837" width="1" height="1" fill="#0000ff"/>
<rect x="671" y="833" width="1" height="5" fill="#0000ff"/>
<rect x="674" y="830" width="1" height="8" fill="#0000ff"/>
<rect x="678" y="836" width="1" height="2" fill="#0000ff"/>
<rect x="681" y="837" width="1" height="1" fill="#0000ff"/>
<rect x="689" y="836" width="1" height="2" fill="#0000ff"/>
<rect x="692" y="835" width="1" height="3" fill="#0000ff"/>
<rect x="696" y="836" width="1" height="2" fill="#0000ff"/>
<rect x="699" y="833" width="1" height="5" fill="#0000ff"/>
<rect x="703" y="836" width="1" height="2" fill="#0000ff"/>
<rect x="710" y="835" width="1" height="3" fill="#0000ff"/>
<rect x="714" y="836" width="1" height="2" fill="#0000ff"/>
<rect x="718" y="837" width="1" height="1" fill="#0000ff"/>
<rect x="721" y="834" width="1" height="4" fill="#0000ff"/>
<rect x="725" y="836" width="1" height="2" fill="#0000ff"/>
<rect x="728" y="835" width="1" height="3" fill="#0000ff"/>
<rect x="732" y="822" width="1" height="16" fill="#0000ff"/>
<rect x="735" y="837" width="1" height="1" fill="#0000ff"/>
<rect x="739" y="837" width="1" height="1" fill="#0000ff"/>
<rect x="746" y="837" width="1" height="1" fill="#0000ff"/>
<rect x="750" y="824" width="1" height="14" fill="#0000ff"/>
<rect x="753" y="837" width="1" height="1" fill="#0000ff"/>
<rect x="757" y="837" width="1" height="1" fill="#0000ff"/>
<rect x="760" y="837" width="1" height="1" fill="#0000ff"/>
<rect x="764" y="837" width="1" height="1" fill="#0000ff"/>
<rect x="767" y="835" width="1" height="3" fill="#0000ff"/>
<rect x="772" y="834" width="1" height="4" fill="#0000ff"/>
<rect x="775" y="836" width="1" height="2" fill="#0000ff"/>
<rect x="779" y="836" width="1" height="2" fill="#0000ff"/>
<rect x="782" y="837" width="1" height="1" fill="#0000ff"/>
<rect x="786" y="837" width="1" height="1" fill="#0000ff"/>
<rect x="789" y="837" width="1" height="1" fill="#0000ff"/>
<rect x="793" y="837" width="1" height="1" fill="#0000ff"/>
<rect x="797" y="837" width="1" height="1" fill="#0000ff"/>
<rect x="800" y="835" width="1" height="3" fill="#0000ff"/>
<rect x="804" y="834" width="1" height="4" fill="#0000ff"/>
<rect x="807" y="833" width="1" height="5" fill="#0000ff"/>
<rect x="811" y="823" width="1" height="15" fill="#0000ff"/>
<rect x="814" y="836" width="1" height="2" fill="#0000ff"/>
<rect x="818" y="835" width="1" height="3" fill="#0000ff"/>
<rect x="821" y="835" width="1" height="3" fill="#0000ff"/>
<rect x="826" y="830" width="1" height="8" fill="#0000ff"/>
<rect x="829" y="837" width="1" height="1" fill="#0000ff"/>
<rect x="833" y="833" width="1" height="5" fill="#0000ff"/>
<rect x="836" y="835" width="1" height="3" fill="#0000ff"/>
<rect x="840" y="835" width="1" height="3" fill="#0000ff"/>
<rect x="843" y="835" width="1" height="3" fill="#0000ff"/>
<rect x="847" y="836" width="1" height="2" fill="#0000ff"/>
<rect x="850" y="837" width="1" height="1" fill="#0000ff"/>
<rect x="854" y="834" width="1" height="4" fill="#0000ff"/>
<rect x="858" y="835" width="1" height="3" fill="#0000ff"/>
<rect x="861" y="831" width="1" height="7" fill="#0000ff"/>
<rect x="865" y="834" width="1" height="4" fill="#0000ff"/>
<rect x="880" y="837" width="1" height="1" fill="#0000ff"/>
<rect x="883" y="837" width="1" height="1" fill="#0000ff"/>
<rect x="887" y="837" width="1" height="1" fill="#0000ff"/>
<rect x="894" y="836" width="1" height="2" fill="#0000ff"/>
<rect x="897" y="837" width="1" height="1" fill="#0000ff"/>
<rect x="904" y="837" width="1" height="1" fill="#0000ff"/>
<rect x="909" y="836" width="1" height="2" fill="#0000ff"/>
<rect x="915" y="837" width="1" height="1" fill="#0000ff"/>
<rect x="922" y="835" width="1" height="3" fill="#0000ff"/>
<rect x="941" y="836" width="1" height="2" fill="#0000ff"/>
<rect x="944" y="836" width="1" height="2" fill="#0000ff"/>
<rect x="948" y="835" width="1" height="3" fill="#0000ff"/>
<rect x="951" y="837" width="1" height="1" fill="#0000ff"/>
<rect x="955" y="835" width="1" height="3" fill="#0000ff"/>
<rect x="958" y="835" width="1" height="3" fill="#0000ff"/>
<rect x="963" y="835" width="1" height="3" fill="#0000ff"/>
<rect x="966" y="836" width="1" height="2" fill="#0000ff"/>
<rect x="969" y="834" width="1" height="4" fill="#0000ff"/>
<rect x="973" y="836" width="1" height="2" fill="#0000ff"/>
<rect x="976" y="836" width="1" height="2" fill="#0000ff"/>
<rect x="983" y="836" width="1" height="2" fill="#0000ff"/>
<rect x="987" y="836" width="1" height="2" fill="#0000ff"/>
<rect x="991" y="836" width="1" height="2" fill="#0000ff"/>
<rect x="995" y="836" width="1" height="2" fill="#0000ff"/>
<rect x="998" y="837" width="1" height="1" fill="#0000ff"/>
<rect x="1005" y="834" width="1" height="4" fill="#0000ff"/>
<rect x="1009" y="835" width="1" height="3" fill="#0000ff"/>
<rect x="1012" y="836" width="1" height="2" fill="#0000ff"/>
<rect x="1017" y="837" width="1" height="1" fill="#0000ff"/>
<rect x="1030" y="837" width="1" height="1" fill="#0000ff"/>
<rect x="1049" y="836" width="1" height="2" fill="#0000ff"/>
<rect x="1052" y="836" width="1" height="2" fill="#0000ff"/>
<rect x="1056" y="837" width="1" height="1" fill="#0000ff"/>
<rect x="1059" y="836" width="1" height="2" fill="#0000ff"/>
<rect x="1063" y="837" width="1" height="1" fill="#0000ff"/>
<rect x="1066" y="836" width="1" height="2" fill="#0000ff"/>
<rect x="1077" y="837" width="1" height="1" fill="#0000ff"/>
<rect x="1088" y="837" width="1" height="1" fill="#0000ff"/>
<rect x="1091" y="837" width="1" height="1" fill="#0000ff"/>
<rect x="1106" y="837" width="1" height="1" fill="#0000ff"/>
<rect x="1110" y="836" width="1" height="2" fill="#0000ff"/>
<rect x="1113" y="835" width="1" height="3" fill="#0000ff"/>
<rect x="1117" y="836" width="1" height="2" fill="#0000ff"/>
<rect x="1120" y="837" width="1" height="1" fill="#0000ff"/>
<rect x="1128" y="837" width="1" height="1" fill="#0000ff"/>
<rect x="1132" y="835" width="1" height="3" fill="#0000ff"/>
<rect x="1135" y="836" width="1" height="2" fill="#0000ff"/>
<rect x="1138" y="837" width="1" height="1" fill="#0000ff"/>
<rect x="1145" y="837" width="1" height="1" fill="#0000ff"/>
<rect x="1153" y="837" width="1" height="1" fill="#0000ff"/>
<rect x="1160" y="836" width="1" height="2" fill="#0000ff"/>
</g>
<g shape-rendering="crispEdges">
<rect x="1" y="220" width="1" height="15" fill="#000"/>
<rect x="-1" y="224" width="4" height="1" fill="#000"/>
<rect x="5" y="229" width="1" height="9" fill="#000"/>
<rect x="4" y="235" width="3" height="1" fill="#000"/>
<rect x="8" y="237" width="1" height="63" fill="#000"/>
<rect x="6" y="238" width="4" height="62" fill="#000"/>
<rect x="12" y="292" width="1" height="42" fill="#000"/>
<rect x="11" y="292" width="3" height="19" fill="#000"/>
<rect x="15" y="287" width="1" height="23" fill="#000"/>
<rect x="13" y="288" width="4" height="22" fill="#000"/>
<rect x="14" y="289" width="2" height="20" fill="#fff"/>
<rect x="19" y="276" width="1" height="22" fill="#000"/>
<rect x="17" y="288" width="4" height="8" fill="#000"/>
<rect x="23" y="285" width="1" height="13" fill="#000"/>
<rect x="22" y="286" width="3" height="10" fill="#000"/>
<rect x="23" y="287" width="1" height="8" fill="#fff"/>
<rect x="26" y="282" width="1" height="13" fill="#000"/>
<rect x="24" y="286" width="4" height="8" fill="#000"/>
<rect x="30" y="293" width="1" height="18" fill="#000"/>
<rect x="29" y="293" width="3" height="5" fill="#000"/>
<rect x="33" y="293" width="1" height="14" fill="#000"/>
<rect x="31" y="295" width="4" height="11" fill="#000"/>
<rect x="32" y="296" width="2" height="9" fill="#fff"/>
<rect x="37" y="294" width="1" height="14" fill="#000"/>
<rect x="35" y="295" width="4" height="11" fill="#000"/>
<rect x="36" y="296" width="2" height="9" fill="#fff"/>
<rect x="41" y="295" width="1" height="18" fill="#000"/>
<rect x="40" y="295" width="3" height="3" fill="#000"/>
<rect x="44" y="295" width="1" height="21" fill="#000"/>
<rect x="42" y="295" width="4" height="4" fill="#000"/>
<rect x="48" y="277" width="1" height="37" fill="#000"/>
<rect x="47" y="278" width="3" height="22" fill="#000"/>
<rect x="48" y="279" width="1" height="20" fill="#fff"/>
<rect x="51" y="222" width="1" height="58" fill="#000"/>
<rect x="49" y="222" width="4" height="57" fill="#000"/>
<rect x="50" y="223" width="2" height="55" fill="#fff"/>
<rect x="55" y="197" width="1" height="25" fill="#000"/>
<rect x="53" y="209" width="4" height="13" fill="#000"/>
<rect x="54" y="210" width="2" height="11" fill="#fff"/>
<rect x="59" y="197" width="1" height="14" fill="#000"/>
<rect x="58" y="202" width="3" height="8" fill="#000"/>
<rect x="59" y="203" width="1" height="6" fill="#fff"/>
<rect x="62" y="193" width="1" height="15" fill="#000"/>
<rect x="60" y="201" width="4" height="5" fill="#000"/>
<rect x="61" y="202" width="2" height="3" fill="#fff"/>
<rect x="66" y="197" width="1" height="11" fill="#000"/>
<rect x="65" y="201" width="3" height="5" fill="#000"/>
<rect x="66" y="202" width="1" height="3" fill="#fff"/>
<rect x="69" y="201" width="1" height="8" fill="#000"/>
<rect x="67" y="202" width="4" height="6" fill="#000"/>
<rect x="73" y="202" width="1" height="19" fill="#000"/>
<rect x="71" y="207" width="4" height="13" fill="#000"/>
<rect x="77" y="215" width="1" height="24" fill="#000"/>
<rect x="76" y="216" width="3" height="20" fill="#000"/>
<rect x="80" y="225" width="1" height="8" fill="#000"/>
<rect x="78" y="226" width="4" height="6" fill="#000"/>
<rect x="84" y="228" width="1" height="10" fill="#000"/>
<rect x="83" y="229" width="3" height="4" fill="#000"/>
<rect x="84" y="230" width="1" height="2" fill="#fff"/>
<rect x="87" y="233" width="1" height="5" fill="#000"/>
<rect x="85" y="234" width="4" height="4" fill="#000"/>
<rect x="86" y="235" width="2" height="2" fill="#fff"/>
<rect x="91" y="221" width="1" height="17" fill="#000"/>
<rect x="89" y="222" width="4" height="16" fill="#000"/>
<rect x="90" y="223" width="2" height="14" fill="#fff"/>
<rect x="95" y="214" width="1" height="8" fill="#000"/>
<rect x="94" y="215" width="3" height="6" fill="#000"/>
<rect x="98" y="214" width="1" height="16" fill="#000"/>
<rect x="96" y="214" width="4" height="16" fill="#000"/>
<rect x="97" y="215" width="2" height="14" fill="#fff"/>
<rect x="102" y="214" width="1" height="11" fill="#000"/>
<rect x="101" y="214" width="3" height="10" fill="#000"/>
<rect x="102" y="215" width="1" height="8" fill="#fff"/>
<rect x="105" y="214" width="1" height="12" fill="#000"/>
<rect x="103" y="214" width="4" height="12" fill="#000"/>
<rect x="104" y="215" width="2" height="10" fill="#fff"/>
<rect x="109" y="214" width="1" height="11" fill="#000"/>
<rect x="107" y="220" width="4" height="4" fill="#000"/>
<rect x="113" y="222" width="1" height="5" fill="#000"/>
<rect x="112" y="222" width="3" height="5" fill="#000"/>
<rect x="113" y="223" width="1" height="3" fill="#fff"/>
<rect x="116" y="222" width="1" height="7" fill="#000"/>
<rect x="114" y="222" width="4" height="7" fill="#000"/>
<rect x="115" y="223" width="2" height="5" fill="#fff"/>
<rect x="120" y="222" width="1" height="8" fill="#000"/>
<rect x="119" y="222" width="3" height="7" fill="#000"/>
<rect x="120" y="223" width="1" height="5" fill="#fff"/>
<rect x="123" y="223" width="1" height="13" fill="#000"/>
<rect x="121" y="229" width="4" height="1" fill="#000"/>
<rect x="127" y="226" width="1" height="10" fill="#000"/>
<rect x="125" y="230" width="4" height="1" fill="#000"/>
<rect x="131" y="233" width="1" height="5" fill="#000"/>
<rect x="130" y="234" width="3" height="3" fill="#000"/>
<rect x="131" y="235" width="1" height="1" fill="#fff"/>
<rect x="134" y="222" width="1" height="17" fill="#000"/>
<rect x="132" y="222" width="4" height="17" fill="#000"/>
<rect x="133" y="223" width="2" height="15" fill="#fff"/>
<rect x="138" y="199" width="1" height="43" fill="#000"/>
<rect x="137" y="225" width="3" height="17" fill="#000"/>
<rect x="138" y="226" width="1" height="15" fill="#fff"/>
<rect x="141" y="204" width="1" height="26" fill="#000"/>
<rect x="139" y="205" width="4" height="19" fill="#000"/>
<rect x="145" y="227" width="1" height="8" fill="#000"/>
<rect x="143" y="229" width="4" height="6" fill="#000"/>
<rect x="144" y="230" width="2" height="4" fill="#fff"/>
<rect x="149" y="214" width="1" height="17" fill="#000"/>
<rect x="148" y="215" width="3" height="15" fill="#000"/>
<rect x="152" y="228" width="1" height="13" fill="#000"/>
<rect x="150" y="229" width="4" height="3" fill="#000"/>
<rect x="151" y="230" width="2" height="1" fill="#fff"/>
<rect x="156" y="228" width="1" height="11" fill="#000"/>
<rect x="155" y="228" width="3" height="6" fill="#000"/>
<rect x="159" y="203" width="1" height="32" fill="#000"/>
<rect x="157" y="205" width="4" height="30" fill="#000"/>
<rect x="158" y="206" width="2" height="28" fill="#fff"/>
<rect x="163" y="153" width="1" height="51" fill="#000"/>
<rect x="161" y="188" width="4" height="16" fill="#000"/>
<rect x="162" y="189" width="2" height="14" fill="#fff"/>
<rect x="167" y="179" width="1" height="13" fill="#000"/>
<rect x="166" y="181" width="3" height="2" fill="#000"/>
<rect x="170" y="174" width="1" height="8" fill="#000"/>
<rect x="168" y="175" width="4" height="6" fill="#000"/>
<rect x="169" y="176" width="2" height="4" fill="#fff"/>
<rect x="174" y="173" width="1" height="13" fill="#000"/>
<rect x="173" y="174" width="3" height="12" fill="#000"/>
<rect x="177" y="181" width="1" height="13" fill="#000"/>
<rect x="175" y="181" width="4" height="13" fill="#000"/>
<rect x="181" y="196" width="1" height="13" fill="#000"/>
<rect x="179" y="196" width="4" height="2" fill="#000"/>
<rect x="185" y="200" width="1" height="7" fill="#000"/>
<rect x="184" y="201" width="3" height="2" fill="#000"/>
<rect x="188" y="198" width="1" height="6" fill="#000"/>
<rect x="186" y="201" width="4" height="2" fill="#000"/>
<rect x="192" y="193" width="1" height="12" fill="#000"/>
<rect x="191" y="193" width="3" height="9" fill="#000"/>
<rect x="195" y="185" width="1" height="20" fill="#000"/>
<rect x="193" y="196" width="4" height="3" fill="#000"/>
<rect x="194" y="197" width="2" height="1" fill="#fff"/>
<rect x="199" y="185" width="1" height="8" fill="#000"/>
<rect x="197" y="188" width="4" height="4" fill="#000"/>
<rect x="198" y="189" width="2" height="2" fill="#fff"/>
<rect x="203" y="182" width="1" height="10" fill="#000"/>
<rect x="202" y="185" width="3" height="2" fill="#000"/>
<rect x="206" y="179" width="1" height="6" fill="#000"/>
<rect x="204" y="181" width="4" height="4" fill="#000"/>
<rect x="210" y="182" width="1" height="4" fill="#000"/>
<rect x="209" y="183" width="3" height="2" fill="#000"/>
<rect x="213" y="184" width="1" height="28" fill="#000"/>
<rect x="211" y="185" width="4" height="27" fill="#000"/>
<rect x="217" y="201" width="1" height="16" fill="#000"/>
<rect x="215" y="202" width="4" height="10" fill="#000"/>
<rect x="221" y="199" width="1" height="14" fill="#000"/>
<rect x="220" y="200" width="3" height="13" fill="#000"/>
<rect x="224" y="214" width="1" height="22" fill="#000"/>
<rect x="222" y="215" width="4" height="15" fill="#000"/>
<rect x="228" y="220" width="1" height="21" fill="#000"/>
<rect x="227" y="225" width="3" height="15" fill="#000"/>
<rect x="231" y="228" width="1" height="17" fill="#000"/>
<rect x="229" y="238" width="4" height="5" fill="#000"/>
<rect x="235" y="231" width="1" height="10" fill="#000"/>
<rect x="233" y="235" width="4" height="5" fill="#000"/>
<rect x="234" y="236" width="2" height="3" fill="#fff"/>
<rect x="239" y="233" width="1" height="8" fill="#000"/>
<rect x="238" y="234" width="3" height="7" fill="#000"/>
<rect x="242" y="236" width="1" height="7" fill="#000"/>
<rect x="240" y="238" width="4" height="5" fill="#000"/>
<rect x="246" y="235" width="1" height="29" fill="#000"/>
<rect x="245" y="242" width="3" height="20" fill="#000"/>
<rect x="249" y="231" width="1" height="38" fill="#000"/>
<rect x="247" y="254" width="4" height="2" fill="#000"/>
<rect x="253" y="240" width="1" height="16" fill="#000"/>
<rect x="251" y="249" width="4" height="2" fill="#000"/>
<rect x="257" y="244" width="1" height="8" fill="#000"/>
<rect x="256" y="244" width="3" height="7" fill="#000"/>
<rect x="260" y="243" width="1" height="6" fill="#000"/>
<rect x="258" y="246" width="4" height="2" fill="#000"/>
<rect x="264" y="243" width="1" height="10" fill="#000"/>
<rect x="263" y="247" width="3" height="5" fill="#000"/>
<rect x="267" y="244" width="1" height="15" fill="#000"/>
<rect x="265" y="247" width="4" height="12" fill="#000"/>
<rect x="271" y="251" width="1" height="35" fill="#000"/>
<rect x="269" y="251" width="4" height="18" fill="#000"/>
<rect x="275" y="259" width="1" height="42" fill="#000"/>
<rect x="274" y="260" width="3" height="35" fill="#000"/>
<rect x="278" y="278" width="1" height="22" fill="#000"/>
<rect x="276" y="292" width="4" height="3" fill="#000"/>
<rect x="282" y="266" width="1" height="16" fill="#000"/>
<rect x="281" y="269" width="3" height="7" fill="#000"/>
<rect x="285" y="313" width="1" height="48" fill="#000"/>
<rect x="283" y="314" width="4" height="47" fill="#000"/>
<rect x="284" y="315" width="2" height="45" fill="#fff"/>
<rect x="289" y="295" width="1" height="20" fill="#000"/>
<rect x="287" y="303" width="4" height="12" fill="#000"/>
<rect x="288" y="304" width="2" height="10" fill="#fff"/>
<rect x="293" y="299" width="1" height="23" fill="#000"/>
<rect x="292" y="300" width="3" height="11" fill="#000"/>
<rect x="296" y="308" width="1" height="20" fill="#000"/>
<rect x="294" y="308" width="4" height="20" fill="#000"/>
<rect x="300" y="321" width="1" height="15" fill="#000"/>
<rect x="299" y="325" width="3" height="10" fill="#000"/>
<rect x="303" y="326" width="1" height="11" fill="#000"/>
<rect x="301" y="327" width="4" height="9" fill="#000"/>
<rect x="307" y="327" width="1" height="10" fill="#000"/>
<rect x="305" y="328" width="4" height="6" fill="#000"/>
<rect x="311" y="327" width="1" height="12" fill="#000"/>
<rect x="310" y="327" width="3" height="11" fill="#000"/>
<rect x="311" y="328" width="1" height="9" fill="#fff"/>
<rect x="314" y="311" width="1" height="23" fill="#000"/>
<rect x="312" y="312" width="4" height="22" fill="#000"/>
<rect x="313" y="313" width="2" height="20" fill="#fff"/>
<rect x="318" y="298" width="1" height="17" fill="#000"/>
<rect x="317" y="307" width="3" height="8" fill="#000"/>
<rect x="318" y="308" width="1" height="6" fill="#fff"/>
<rect x="321" y="306" width="1" height="6" fill="#000"/>
<rect x="319" y="307" width="4" height="4" fill="#000"/>
<rect x="325" y="302" width="1" height="15" fill="#000"/>
<rect x="323" y="302" width="4" height="15" fill="#000"/>
<rect x="329" y="308" width="1" height="14" fill="#000"/>
<rect x="328" y="316" width="3" height="6" fill="#000"/>
<rect x="332" y="313" width="1" height="22" fill="#000"/>
<rect x="330" y="317" width="4" height="5" fill="#000"/>
<rect x="336" y="316" width="1" height="13" fill="#000"/>
<rect x="335" y="320" width="3" height="4" fill="#000"/>
<rect x="339" y="318" width="1" height="14" fill="#000"/>
<rect x="337" y="319" width="4" height="8" fill="#000"/>
<rect x="338" y="320" width="2" height="6" fill="#fff"/>
<rect x="343" y="313" width="1" height="15" fill="#000"/>
<rect x="341" y="314" width="4" height="14" fill="#000"/>
<rect x="342" y="315" width="2" height="12" fill="#fff"/>
<rect x="347" y="307" width="1" height="13" fill="#000"/>
<rect x="346" y="312" width="3" height="8" fill="#000"/>
<rect x="347" y="313" width="1" height="6" fill="#fff"/>
<rect x="350" y="306" width="1" height="11" fill="#000"/>
<rect x="348" y="311" width="4" height="3" fill="#000"/>
<rect x="354" y="311" width="1" height="7" fill="#000"/>
<rect x="353" y="312" width="3" height="5" fill="#000"/>
<rect x="357" y="311" width="1" height="12" fill="#000"/>
<rect x="355" y="316" width="4" height="7" fill="#000"/>
<rect x="361" y="312" width="1" height="11" fill="#000"/>
<rect x="359" y="317" width="4" height="6" fill="#000"/>
<rect x="365" y="312" width="1" height="7" fill="#000"/>
<rect x="364" y="313" width="3" height="5" fill="#000"/>
<rect x="368" y="312" width="1" height="9" fill="#000"/>
<rect x="366" y="317" width="4" height="3" fill="#000"/>
<rect x="372" y="313" width="1" height="12" fill="#000"/>
<rect x="371" y="317" width="3" height="8" fill="#000"/>
<rect x="372" y="318" width="1" height="6" fill="#fff"/>
<rect x="375" y="307" width="1" height="11" fill="#000"/>
<rect x="373" y="311" width="4" height="6" fill="#000"/>
<rect x="374" y="312" width="2" height="4" fill="#fff"/>
<rect x="379" y="266" width="1" height="40" fill="#000"/>
<rect x="377" y="286" width="4" height="20" fill="#000"/>
<rect x="378" y="287" width="2" height="18" fill="#fff"/>
<rect x="383" y="269" width="1" height="19" fill="#000"/>
<rect x="382" y="271" width="3" height="8" fill="#000"/>
<rect x="383" y="272" width="1" height="6" fill="#fff"/>
<rect x="386" y="258" width="1" height="18" fill="#000"/>
<rect x="384" y="266" width="4" height="6" fill="#000"/>
<rect x="390" y="263" width="1" height="9" fill="#000"/>
<rect x="389" y="267" width="3" height="2" fill="#000"/>
<rect x="393" y="265" width="1" height="7" fill="#000"/>
<rect x="391" y="267" width="4" height="2" fill="#000"/>
<rect x="397" y="262" width="1" height="8" fill="#000"/>
<rect x="395" y="264" width="4" height="4" fill="#000"/>
<rect x="401" y="262" width="1" height="12" fill="#000"/>
<rect x="400" y="264" width="3" height="10" fill="#000"/>
<rect x="404" y="243" width="1" height="31" fill="#000"/>
<rect x="402" y="244" width="4" height="30" fill="#000"/>
<rect x="403" y="245" width="2" height="28" fill="#fff"/>
<rect x="408" y="235" width="1" height="19" fill="#000"/>
<rect x="407" y="237" width="3" height="5" fill="#000"/>
<rect x="408" y="238" width="1" height="3" fill="#fff"/>
<rect x="411" y="238" width="1" height="14" fill="#000"/>
<rect x="409" y="238" width="4" height="10" fill="#000"/>
<rect x="415" y="248" width="1" height="33" fill="#000"/>
<rect x="413" y="249" width="4" height="13" fill="#000"/>
<rect x="419" y="258" width="1" height="18" fill="#000"/>
<rect x="418" y="266" width="3" height="2" fill="#000"/>
<rect x="422" y="262" width="1" height="15" fill="#000"/>
<rect x="420" y="262" width="4" height="13" fill="#000"/>
<rect x="421" y="263" width="2" height="11" fill="#fff"/>
<rect x="426" y="254" width="1" height="13" fill="#000"/>
<rect x="425" y="254" width="3" height="6" fill="#000"/>
<rect x="426" y="255" width="1" height="4" fill="#fff"/>
<rect x="429" y="253" width="1" height="9" fill="#000"/>
<rect x="427" y="253" width="4" height="9" fill="#000"/>
<rect x="433" y="256" width="1" height="15" fill="#000"/>
<rect x="431" y="256" width="4" height="6" fill="#000"/>
<rect x="432" y="257" width="2" height="4" fill="#fff"/>
<rect x="437" y="256" width="1" height="8" fill="#000"/>
<rect x="436" y="260" width="3" height="4" fill="#000"/>
<rect x="437" y="261" width="1" height="2" fill="#fff"/>
<rect x="440" y="256" width="1" height="8" fill="#000"/>
<rect x="438" y="260" width="4" height="4" fill="#000"/>
<rect x="439" y="261" width="2" height="2" fill="#fff"/>
<rect x="444" y="258" width="1" height="6" fill="#000"/>
<rect x="443" y="260" width="3" height="2" fill="#000"/>
<rect x="447" y="264" width="1" height="11" fill="#000"/>
<rect x="445" y="264" width="4" height="4" fill="#000"/>
<rect x="451" y="266" width="1" height="19" fill="#000"/>
<rect x="449" y="266" width="4" height="2" fill="#000"/>
<rect x="455" y="266" width="1" height="13" fill="#000"/>
<rect x="454" y="266" width="3" height="9" fill="#000"/>
<rect x="458" y="271" width="1" height="11" fill="#000"/>
<rect x="456" y="274" width="4" height="7" fill="#000"/>
<rect x="462" y="276" width="1" height="12" fill="#000"/>
<rect x="461" y="277" width="3" height="10" fill="#000"/>
<rect x="465" y="280" width="1" height="10" fill="#000"/>
<rect x="463" y="282" width="4" height="7" fill="#000"/>
<rect x="469" y="281" width="1" height="11" fill="#000"/>
<rect x="467" y="287" width="4" height="3" fill="#000"/>
<rect x="473" y="280" width="1" height="8" fill="#000"/>
<rect x="472" y="280" width="3" height="8" fill="#000"/>
<rect x="476" y="266" width="1" height="19" fill="#000"/>
<rect x="474" y="277" width="4" height="2" fill="#000"/>
<rect x="480" y="265" width="1" height="15" fill="#000"/>
<rect x="479" y="269" width="3" height="3" fill="#000"/>
<rect x="483" y="266" width="1" height="8" fill="#000"/>
<rect x="481" y="267" width="4" height="3" fill="#000"/>
<rect x="482" y="268" width="2" height="1" fill="#fff"/>
<rect x="487" y="266" width="1" height="7" fill="#000"/>
<rect x="485" y="267" width="4" height="5" fill="#000"/>
<rect x="491" y="258" width="1" height="11" fill="#000"/>
<rect x="490" y="258" width="3" height="11" fill="#000"/>
<rect x="491" y="259" width="1" height="9" fill="#fff"/>
<rect x="494" y="259" width="1" height="5" fill="#000"/>
<rect x="492" y="259" width="4" height="5" fill="#000"/>
<rect x="498" y="262" width="1" height="12" fill="#000"/>
<rect x="497" y="262" width="3" height="2" fill="#000"/>
<rect x="501" y="260" width="1" height="7" fill="#000"/>
<rect x="499" y="260" width="4" height="4" fill="#000"/>
<rect x="500" y="261" width="2" height="2" fill="#fff"/>
<rect x="505" y="250" width="1" height="17" fill="#000"/>
<rect x="503" y="258" width="4" height="6" fill="#000"/>
<rect x="504" y="259" width="2" height="4" fill="#fff"/>
<rect x="509" y="260" width="1" height="11" fill="#000"/>
<rect x="508" y="266" width="3" height="4" fill="#000"/>
<rect x="509" y="267" width="1" height="2" fill="#fff"/>
<rect x="512" y="262" width="1" height="10" fill="#000"/>
<rect x="510" y="266" width="4" height="2" fill="#000"/>
<rect x="516" y="262" width="1" height="10" fill="#000"/>
<rect x="515" y="264" width="3" height="2" fill="#000"/>
<rect x="519" y="262" width="1" height="5" fill="#000"/>
<rect x="517" y="264" width="4" height="2" fill="#000"/>
<rect x="523" y="262" width="1" height="8" fill="#000"/>
<rect x="521" y="262" width="4" height="8" fill="#000"/>
<rect x="522" y="263" width="2" height="6" fill="#fff"/>
<rect x="527" y="263" width="1" height="4" fill="#000"/>
<rect x="526" y="264" width="3" height="2" fill="#000"/>
<rect x="530" y="263" width="1" height="6" fill="#000"/>
<rect x="528" y="264" width="4" height="2" fill="#000"/>
<rect x="534" y="263" width="1" height="8" fill="#000"/>
<rect x="533" y="266" width="3" height="4" fill="#000"/>
<rect x="537" y="264" width="1" height="11" fill="#000"/>
<rect x="535" y="266" width="4" height="3" fill="#000"/>
<rect x="541" y="270" width="1" height="12" fill="#000"/>
<rect x="540" y="274" width="3" height="5" fill="#000"/>
<rect x="544" y="274" width="1" height="6" fill="#000"/>
<rect x="542" y="274" width="4" height="5" fill="#000"/>
<rect x="548" y="278" width="1" height="8" fill="#000"/>
<rect x="546" y="278" width="4" height="5" fill="#000"/>
<rect x="547" y="279" width="2" height="3" fill="#fff"/>
<rect x="552" y="265" width="1" height="13" fill="#000"/>
<rect x="551" y="265" width="3" height="13" fill="#000"/>
<rect x="552" y="266" width="1" height="11" fill="#fff"/>
<rect x="555" y="266" width="1" height="9" fill="#000"/>
<rect x="553" y="267" width="4" height="8" fill="#000"/>
<rect x="559" y="268" width="1" height="7" fill="#000"/>
<rect x="558" y="270" width="3" height="3" fill="#000"/>
<rect x="562" y="268" width="1" height="8" fill="#000"/>
<rect x="560" y="272" width="4" height="4" fill="#000"/>
<rect x="561" y="273" width="2" height="2" fill="#fff"/>
<rect x="566" y="268" width="1" height="6" fill="#000"/>
<rect x="564" y="272" width="4" height="2" fill="#000"/>
<rect x="570" y="268" width="1" height="7" fill="#000"/>
<rect x="569" y="268" width="3" height="6" fill="#000"/>
<rect x="573" y="268" width="1" height="7" fill="#000"/>
<rect x="571" y="269" width="4" height="6" fill="#000"/>
<rect x="577" y="268" width="1" height="7" fill="#000"/>
<rect x="576" y="269" width="3" height="4" fill="#000"/>
<rect x="580" y="266" width="1" height="4" fill="#000"/>
<rect x="578" y="267" width="4" height="2" fill="#000"/>
<rect x="584" y="268" width="1" height="7" fill="#000"/>
<rect x="582" y="268" width="4" height="7" fill="#000"/>
<rect x="588" y="266" width="1" height="5" fill="#000"/>
<rect x="587" y="267" width="3" height="4" fill="#000"/>
<rect x="591" y="266" width="1" height="5" fill="#000"/>
<rect x="589" y="268" width="4" height="3" fill="#000"/>
<rect x="595" y="266" width="1" height="7" fill="#000"/>
<rect x="594" y="268" width="3" height="3" fill="#000"/>
<rect x="598" y="262" width="1" height="9" fill="#000"/>
<rect x="596" y="263" width="4" height="7" fill="#000"/>
<rect x="597" y="264" width="2" height="5" fill="#fff"/>
<rect x="602" y="224" width="1" height="37" fill="#000"/>
<rect x="600" y="249" width="4" height="12" fill="#000"/>
<rect x="601" y="250" width="2" height="10" fill="#fff"/>
<rect x="606" y="212" width="1" height="27" fill="#000"/>
<rect x="605" y="213" width="3" height="25" fill="#000"/>
<rect x="606" y="214" width="1" height="23" fill="#fff"/>
<rect x="609" y="202" width="1" height="37" fill="#000"/>
<rect x="607" y="210" width="4" height="22" fill="#000"/>
<rect x="613" y="224" width="1" height="30" fill="#000"/>
<rect x="612" y="225" width="3" height="28" fill="#000"/>
<rect x="616" y="241" width="1" height="19" fill="#000"/>
<rect x="614" y="241" width="4" height="12" fill="#000"/>
<rect x="615" y="242" width="2" height="10" fill="#fff"/>
<rect x="620" y="238" width="1" height="13" fill="#000"/>
<rect x="618" y="239" width="4" height="10" fill="#000"/>
<rect x="624" y="239" width="1" height="12" fill="#000"/>
<rect x="623" y="239" width="3" height="9" fill="#000"/>
<rect x="624" y="240" width="1" height="7" fill="#fff"/>
<rect x="627" y="236" width="1" height="10" fill="#000"/>
<rect x="625" y="238" width="4" height="8" fill="#000"/>
<rect x="631" y="241" width="1" height="11" fill="#000"/>
<rect x="630" y="242" width="3" height="5" fill="#000"/>
<rect x="634" y="243" width="1" height="9" fill="#000"/>
<rect x="632" y="244" width="4" height="4" fill="#000"/>
<rect x="633" y="245" width="2" height="2" fill="#fff"/>
<rect x="638" y="244" width="1" height="20" fill="#000"/>
<rect x="636" y="247" width="4" height="4" fill="#000"/>
<rect x="642" y="237" width="1" height="17" fill="#000"/>
<rect x="641" y="244" width="3" height="10" fill="#000"/>
<rect x="642" y="245" width="1" height="8" fill="#fff"/>
<rect x="645" y="228" width="1" height="23" fill="#000"/>
<rect x="643" y="239" width="4" height="11" fill="#000"/>
<rect x="644" y="240" width="2" height="9" fill="#fff"/>
<rect x="649" y="237" width="1" height="6" fill="#000"/>
<rect x="648" y="238" width="3" height="3" fill="#000"/>
<rect x="652" y="238" width="1" height="3" fill="#000"/>
<rect x="650" y="238" width="4" height="2" fill="#000"/>
<rect x="656" y="208" width="1" height="32" fill="#000"/>
<rect x="654" y="213" width="4" height="26" fill="#000"/>
<rect x="655" y="214" width="2" height="24" fill="#fff"/>
<rect x="660" y="184" width="1" height="40" fill="#000"/>
<rect x="659" y="185" width="3" height="29" fill="#000"/>
<rect x="660" y="186" width="1" height="27" fill="#fff"/>
<rect x="663" y="168" width="1" height="16" fill="#000"/>
<rect x="661" y="181" width="4" height="2" fill="#000"/>
<rect x="667" y="181" width="1" height="10" fill="#000"/>
<rect x="666" y="187" width="3" height="4" fill="#000"/>
<rect x="667" y="188" width="1" height="2" fill="#fff"/>
<rect x="670" y="164" width="1" height="26" fill="#000"/>
<rect x="668" y="173" width="4" height="14" fill="#000"/>
<rect x="669" y="174" width="2" height="12" fill="#fff"/>
<rect x="674" y="166" width="1" height="24" fill="#000"/>
<rect x="672" y="171" width="4" height="2" fill="#000"/>
<rect x="678" y="180" width="1" height="10" fill="#000"/>
<rect x="677" y="180" width="3" height="2" fill="#000"/>
<rect x="681" y="166" width="1" height="24" fill="#000"/>
<rect x="679" y="178" width="4" height="11" fill="#000"/>
<rect x="680" y="179" width="2" height="9" fill="#fff"/>
<rect x="685" y="177" width="1" height="11" fill="#000"/>
<rect x="684" y="178" width="3" height="2" fill="#000"/>
<rect x="688" y="173" width="1" height="9" fill="#000"/>
<rect x="686" y="173" width="4" height="3" fill="#000"/>
<rect x="692" y="161" width="1" height="21" fill="#000"/>
<rect x="690" y="164" width="4" height="13" fill="#000"/>
<rect x="691" y="165" width="2" height="11" fill="#fff"/>
<rect x="696" y="161" width="1" height="14" fill="#000"/>
<rect x="695" y="168" width="3" height="7" fill="#000"/>
<rect x="699" y="163" width="1" height="24" fill="#000"/>
<rect x="697" y="168" width="4" height="8" fill="#000"/>
<rect x="703" y="172" width="1" height="13" fill="#000"/>
<rect x="702" y="172" width="3" height="3" fill="#000"/>
<rect x="706" y="168" width="1" height="12" fill="#000"/>
<rect x="704" y="169" width="4" height="5" fill="#000"/>
<rect x="705" y="170" width="2" height="3" fill="#fff"/>
<rect x="710" y="169" width="1" height="9" fill="#000"/>
<rect x="708" y="174" width="4" height="3" fill="#000"/>
<rect x="714" y="177" width="1" height="17" fill="#000"/>
<rect x="713" y="181" width="3" height="4" fill="#000"/>
<rect x="717" y="180" width="1" height="20" fill="#000"/>
<rect x="715" y="181" width="4" height="11" fill="#000"/>
<rect x="721" y="189" width="1" height="26" fill="#000"/>
<rect x="720" y="192" width="3" height="20" fill="#000"/>
<rect x="724" y="203" width="1" height="12" fill="#000"/>
<rect x="722" y="207" width="4" height="5" fill="#000"/>
<rect x="728" y="200" width="1" height="27" fill="#000"/>
<rect x="726" y="211" width="4" height="15" fill="#000"/>
<rect x="732" y="224" width="1" height="28" fill="#000"/>
<rect x="731" y="225" width="3" height="11" fill="#000"/>
<rect x="735" y="222" width="1" height="17" fill="#000"/>
<rect x="733" y="232" width="4" height="7" fill="#000"/>
<rect x="734" y="233" width="2" height="5" fill="#fff"/>
<rect x="739" y="211" width="1" height="22" fill="#000"/>
<rect x="738" y="220" width="3" height="12" fill="#000"/>
<rect x="739" y="221" width="1" height="10" fill="#fff"/>
<rect x="742" y="217" width="1" height="14" fill="#000"/>
<rect x="740" y="218" width="4" height="5" fill="#000"/>
<rect x="746" y="224" width="1" height="19" fill="#000"/>
<rect x="744" y="225" width="4" height="18" fill="#000"/>
<rect x="750" y="251" width="1" height="24" fill="#000"/>
<rect x="749" y="252" width="3" height="4" fill="#000"/>
<rect x="750" y="253" width="1" height="2" fill="#fff"/>
<rect x="753" y="252" width="1" height="14" fill="#000"/>
<rect x="751" y="253" width="4" height="9" fill="#000"/>
<rect x="757" y="255" width="1" height="21" fill="#000"/>
<rect x="756" y="263" width="3" height="6" fill="#000"/>
<rect x="760" y="261" width="1" height="11" fill="#000"/>
<rect x="758" y="267" width="4" height="2" fill="#000"/>
<rect x="764" y="266" width="1" height="11" fill="#000"/>
<rect x="762" y="267" width="4" height="9" fill="#000"/>
<rect x="768" y="275" width="1" height="19" fill="#000"/>
<rect x="767" y="276" width="3" height="14" fill="#000"/>
<rect x="771" y="285" width="1" height="15" fill="#000"/>
<rect x="769" y="286" width="4" height="9" fill="#000"/>
<rect x="775" y="276" width="1" height="24" fill="#000"/>
<rect x="774" y="288" width="3" height="10" fill="#000"/>
<rect x="775" y="289" width="1" height="8" fill="#fff"/>
<rect x="778" y="281" width="1" height="19" fill="#000"/>
<rect x="776" y="282" width="4" height="13" fill="#000"/>
<rect x="782" y="292" width="1" height="9" fill="#000"/>
<rect x="780" y="294" width="4" height="6" fill="#000"/>
<rect x="786" y="299" width="1" height="7" fill="#000"/>
<rect x="785" y="300" width="3" height="5" fill="#000"/>
<rect x="789" y="299" width="1" height="12" fill="#000"/>
<rect x="787" y="300" width="4" height="10" fill="#000"/>
<rect x="793" y="297" width="1" height="9" fill="#000"/>
<rect x="792" y="303" width="3" height="2" fill="#000"/>
<rect x="796" y="303" width="1" height="15" fill="#000"/>
<rect x="794" y="304" width="4" height="13" fill="#000"/>
<rect x="800" y="312" width="1" height="27" fill="#000"/>
<rect x="798" y="313" width="4" height="20" fill="#000"/>
<rect x="804" y="317" width="1" height="50" fill="#000"/>
<rect x="803" y="329" width="3" height="37" fill="#000"/>
<rect x="807" y="351" width="1" height="46" fill="#000"/>
<rect x="805" y="367" width="4" height="24" fill="#000"/>
<rect x="811" y="388" width="1" height="36" fill="#000"/>
<rect x="810" y="389" width="3" height="11" fill="#000"/>
<rect x="814" y="372" width="1" height="28" fill="#000"/>
<rect x="812" y="382" width="4" height="10" fill="#000"/>
<rect x="813" y="383" width="2" height="8" fill="#fff"/>
<rect x="818" y="356" width="1" height="26" fill="#000"/>
<rect x="816" y="357" width="4" height="24" fill="#000"/>
<rect x="817" y="358" width="2" height="22" fill="#fff"/>
<rect x="822" y="324" width="1" height="31" fill="#000"/>
<rect x="821" y="324" width="3" height="31" fill="#000"/>
<rect x="822" y="325" width="1" height="29" fill="#fff"/>
<rect x="825" y="287" width="1" height="54" fill="#000"/>
<rect x="823" y="305" width="4" height="35" fill="#000"/>
<rect x="829" y="335" width="1" height="15" fill="#000"/>
<rect x="828" y="344" width="3" height="4" fill="#000"/>
<rect x="829" y="345" width="1" height="2" fill="#fff"/>
<rect x="832" y="316" width="1" height="32" fill="#000"/>
<rect x="830" y="316" width="4" height="27" fill="#000"/>
<rect x="831" y="317" width="2" height="25" fill="#fff"/>
<rect x="836" y="300" width="1" height="26" fill="#000"/>
<rect x="834" y="304" width="4" height="15" fill="#000"/>
<rect x="840" y="307" width="1" height="24" fill="#000"/>
<rect x="839" y="313" width="3" height="18" fill="#000"/>
<rect x="843" y="333" width="1" height="13" fill="#000"/>
<rect x="841" y="335" width="4" height="10" fill="#000"/>
<rect x="847" y="331" width="1" height="15" fill="#000"/>
<rect x="846" y="341" width="3" height="3" fill="#000"/>
<rect x="850" y="340" width="1" height="12" fill="#000"/>
<rect x="848" y="343" width="4" height="8" fill="#000"/>
<rect x="854" y="323" width="1" height="21" fill="#000"/>
<rect x="852" y="331" width="4" height="6" fill="#000"/>
<rect x="853" y="332" width="2" height="4" fill="#fff"/>
<rect x="858" y="318" width="1" height="20" fill="#000"/>
<rect x="857" y="323" width="3" height="13" fill="#000"/>
<rect x="861" y="342" width="1" height="40" fill="#000"/>
<rect x="859" y="343" width="4" height="26" fill="#000"/>
<rect x="865" y="368" width="1" height="49" fill="#000"/>
<rect x="864" y="378" width="3" height="22" fill="#000"/>
<rect x="868" y="381" width="1" height="19" fill="#000"/>
<rect x="866" y="389" width="4" height="9" fill="#000"/>
<rect x="867" y="390" width="2" height="7" fill="#fff"/>
<rect x="872" y="373" width="1" height="16" fill="#000"/>
<rect x="870" y="380" width="4" height="8" fill="#000"/>
<rect x="876" y="381" width="1" height="14" fill="#000"/>
<rect x="875" y="382" width="3" height="12" fill="#000"/>
<rect x="879" y="390" width="1" height="14" fill="#000"/>
<rect x="877" y="390" width="4" height="11" fill="#000"/>
<rect x="883" y="400" width="1" height="5" fill="#000"/>
<rect x="882" y="403" width="3" height="2" fill="#000"/>
<rect x="886" y="391" width="1" height="10" fill="#000"/>
<rect x="884" y="392" width="4" height="9" fill="#000"/>
<rect x="890" y="397" width="1" height="8" fill="#000"/>
<rect x="888" y="398" width="4" height="3" fill="#000"/>
<rect x="894" y="384" width="1" height="20" fill="#000"/>
<rect x="893" y="391" width="3" height="12" fill="#000"/>
<rect x="897" y="400" width="1" height="8" fill="#000"/>
<rect x="895" y="400" width="4" height="7" fill="#000"/>
<rect x="901" y="402" width="1" height="12" fill="#000"/>
<rect x="900" y="405" width="3" height="2" fill="#000"/>
<rect x="904" y="403" width="1" height="7" fill="#000"/>
<rect x="902" y="406" width="4" height="4" fill="#000"/>
<rect x="903" y="407" width="2" height="2" fill="#fff"/>
<rect x="908" y="400" width="1" height="10" fill="#000"/>
<rect x="906" y="400" width="4" height="7" fill="#000"/>
<rect x="912" y="400" width="1" height="9" fill="#000"/>
<rect x="911" y="403" width="3" height="5" fill="#000"/>
<rect x="915" y="409" width="1" height="9" fill="#000"/>
<rect x="913" y="409" width="4" height="4" fill="#000"/>
<rect x="919" y="399" width="1" height="16" fill="#000"/>
<rect x="918" y="412" width="3" height="3" fill="#000"/>
<rect x="922" y="413" width="1" height="15" fill="#000"/>
<rect x="920" y="414" width="4" height="12" fill="#000"/>
<rect x="926" y="425" width="1" height="4" fill="#000"/>
<rect x="924" y="425" width="4" height="3" fill="#000"/>
<rect x="930" y="419" width="1" height="10" fill="#000"/>
<rect x="929" y="419" width="3" height="7" fill="#000"/>
<rect x="930" y="420" width="1" height="5" fill="#fff"/>
<rect x="933" y="412" width="1" height="9" fill="#000"/>
<rect x="931" y="414" width="4" height="6" fill="#000"/>
<rect x="932" y="415" width="2" height="4" fill="#fff"/>
<rect x="937" y="410" width="1" height="8" fill="#000"/>
<rect x="936" y="414" width="3" height="2" fill="#000"/>
<rect x="940" y="414" width="1" height="23" fill="#000"/>
<rect x="938" y="414" width="4" height="20" fill="#000"/>
<rect x="944" y="435" width="1" height="20" fill="#000"/>
<rect x="942" y="435" width="4" height="9" fill="#000"/>
<rect x="948" y="443" width="1" height="18" fill="#000"/>
<rect x="947" y="444" width="3" height="16" fill="#000"/>
<rect x="951" y="456" width="1" height="6" fill="#000"/>
<rect x="949" y="457" width="4" height="3" fill="#000"/>
<rect x="955" y="437" width="1" height="24" fill="#000"/>
<rect x="954" y="437" width="3" height="19" fill="#000"/>
<rect x="955" y="438" width="1" height="17" fill="#fff"/>
<rect x="958" y="409" width="1" height="23" fill="#000"/>
<rect x="956" y="410" width="4" height="19" fill="#000"/>
<rect x="957" y="411" width="2" height="17" fill="#fff"/>
<rect x="962" y="409" width="1" height="20" fill="#000"/>
<rect x="960" y="409" width="4" height="9" fill="#000"/>
<rect x="966" y="409" width="1" height="20" fill="#000"/>
<rect x="965" y="411" width="3" height="4" fill="#000"/>
<rect x="969" y="378" width="1" height="48" fill="#000"/>
<rect x="967" y="378" width="4" height="39" fill="#000"/>
<rect x="968" y="379" width="2" height="37" fill="#fff"/>
<rect x="973" y="385" width="1" height="28" fill="#000"/>
<rect x="972" y="388" width="3" height="10" fill="#000"/>
<rect x="973" y="389" width="1" height="8" fill="#fff"/>
<rect x="976" y="388" width="1" height="15" fill="#000"/>
<rect x="974" y="389" width="4" height="8" fill="#000"/>
<rect x="975" y="390" width="2" height="6" fill="#fff"/>
<rect x="980" y="393" width="1" height="11" fill="#000"/>
<rect x="978" y="393" width="4" height="5" fill="#000"/>
<rect x="979" y="394" width="2" height="3" fill="#fff"/>
<rect x="984" y="393" width="1" height="10" fill="#000"/>
<rect x="983" y="394" width="3" height="2" fill="#000"/>
<rect x="987" y="384" width="1" height="18" fill="#000"/>
<rect x="985" y="393" width="4" height="8" fill="#000"/>
<rect x="986" y="394" width="2" height="6" fill="#fff"/>
<rect x="991" y="392" width="1" height="7" fill="#000"/>
<rect x="990" y="393" width="3" height="3" fill="#000"/>
<rect x="994" y="391" width="1" height="12" fill="#000"/>
<rect x="992" y="394" width="4" height="2" fill="#000"/>
<rect x="998" y="390" width="1" height="8" fill="#000"/>
<rect x="996" y="393" width="4" height="5" fill="#000"/>
<rect x="997" y="394" width="2" height="3" fill="#fff"/>
<rect x="1002" y="388" width="1" height="10" fill="#000"/>
<rect x="1001" y="389" width="3" height="8" fill="#000"/>
<rect x="1002" y="390" width="1" height="6" fill="#fff"/>
<rect x="1005" y="356" width="1" height="34" fill="#000"/>
<rect x="1003" y="360" width="4" height="29" fill="#000"/>
<rect x="1004" y="361" width="2" height="27" fill="#fff"/>
<rect x="1009" y="344" width="1" height="11" fill="#000"/>
<rect x="1008" y="347" width="3" height="8" fill="#000"/>
<rect x="1009" y="348" width="1" height="6" fill="#fff"/>
<rect x="1012" y="342" width="1" height="29" fill="#000"/>
<rect x="1010" y="344" width="4" height="3" fill="#000"/>
<rect x="1016" y="347" width="1" height="9" fill="#000"/>
<rect x="1014" y="348" width="4" height="4" fill="#000"/>
<rect x="1015" y="349" width="2" height="2" fill="#fff"/>
<rect x="1020" y="333" width="1" height="15" fill="#000"/>
<rect x="1019" y="333" width="3" height="14" fill="#000"/>
<rect x="1020" y="334" width="1" height="12" fill="#fff"/>
<rect x="1023" y="333" width="1" height="8" fill="#000"/>
<rect x="1021" y="333" width="4" height="7" fill="#000"/>
<rect x="1022" y="334" width="2" height="5" fill="#fff"/>
<rect x="1027" y="333" width="1" height="9" fill="#000"/>
<rect x="1026" y="334" width="3" height="7" fill="#000"/>
<rect x="1027" y="335" width="1" height="5" fill="#fff"/>
<rect x="1030" y="330" width="1" height="11" fill="#000"/>
<rect x="1028" y="331" width="4" height="5" fill="#000"/>
<rect x="1034" y="335" width="1" height="10" fill="#000"/>
<rect x="1032" y="335" width="4" height="6" fill="#000"/>
<rect x="1033" y="336" width="2" height="4" fill="#fff"/>
<rect x="1038" y="335" width="1" height="6" fill="#000"/>
<rect x="1037" y="335" width="3" height="5" fill="#000"/>
<rect x="1038" y="336" width="1" height="3" fill="#fff"/>
<rect x="1041" y="335" width="1" height="5" fill="#000"/>
<rect x="1039" y="335" width="4" height="4" fill="#000"/>
<rect x="1040" y="336" width="2" height="2" fill="#fff"/>
<rect x="1045" y="335" width="1" height="8" fill="#000"/>
<rect x="1044" y="335" width="3" height="8" fill="#000"/>
<rect x="1045" y="336" width="1" height="6" fill="#fff"/>
<rect x="1048" y="313" width="1" height="29" fill="#000"/>
<rect x="1046" y="314" width="4" height="25" fill="#000"/>
<rect x="1047" y="315" width="2" height="23" fill="#fff"/>
<rect x="1052" y="301" width="1" height="21" fill="#000"/>
<rect x="1050" y="309" width="4" height="8" fill="#000"/>
<rect x="1056" y="316" width="1" height="15" fill="#000"/>
<rect x="1055" y="318" width="3" height="2" fill="#000"/>
<rect x="1059" y="316" width="1" height="11" fill="#000"/>
<rect x="1057" y="318" width="4" height="9" fill="#000"/>
<rect x="1058" y="319" width="2" height="7" fill="#fff"/>
<rect x="1063" y="315" width="1" height="10" fill="#000"/>
<rect x="1062" y="317" width="3" height="6" fill="#000"/>
<rect x="1063" y="318" width="1" height="4" fill="#fff"/>
<rect x="1066" y="313" width="1" height="10" fill="#000"/>
<rect x="1064" y="314" width="4" height="9" fill="#000"/>
<rect x="1065" y="315" width="2" height="7" fill="#fff"/>
<rect x="1070" y="311" width="1" height="10" fill="#000"/>
<rect x="1068" y="312" width="4" height="7" fill="#000"/>
<rect x="1069" y="313" width="2" height="5" fill="#fff"/>
<rect x="1074" y="310" width="1" height="10" fill="#000"/>
<rect x="1073" y="311" width="3" height="7" fill="#000"/>
<rect x="1074" y="312" width="1" height="5" fill="#fff"/>
<rect x="1077" y="306" width="1" height="10" fill="#000"/>
<rect x="1075" y="306" width="4" height="6" fill="#000"/>
<rect x="1076" y="307" width="2" height="4" fill="#fff"/>
<rect x="1081" y="305" width="1" height="11" fill="#000"/>
<rect x="1080" y="305" width="3" height="5" fill="#000"/>
<rect x="1084" y="313" width="1" height="10" fill="#000"/>
<rect x="1082" y="314" width="4" height="2" fill="#000"/>
<rect x="1088" y="315" width="1" height="11" fill="#000"/>
<rect x="1086" y="316" width="4" height="3" fill="#000"/>
<rect x="1092" y="323" width="1" height="7" fill="#000"/>
<rect x="1091" y="323" width="3" height="2" fill="#000"/>
<rect x="1095" y="316" width="1" height="10" fill="#000"/>
<rect x="1093" y="323" width="4" height="2" fill="#000"/>
<rect x="1099" y="318" width="1" height="7" fill="#000"/>
<rect x="1098" y="319" width="3" height="6" fill="#000"/>
<rect x="1099" y="320" width="1" height="4" fill="#fff"/>
<rect x="1102" y="318" width="1" height="8" fill="#000"/>
<rect x="1100" y="319" width="4" height="6" fill="#000"/>
<rect x="1101" y="320" width="2" height="4" fill="#fff"/>
<rect x="1106" y="318" width="1" height="9" fill="#000"/>
<rect x="1104" y="319" width="4" height="8" fill="#000"/>
<rect x="1105" y="320" width="2" height="6" fill="#fff"/>
<rect x="1110" y="318" width="1" height="7" fill="#000"/>
<rect x="1109" y="319" width="3" height="6" fill="#000"/>
<rect x="1110" y="320" width="1" height="4" fill="#fff"/>
<rect x="1113" y="323" width="1" height="11" fill="#000"/>
<rect x="1111" y="324" width="4" height="10" fill="#000"/>
<rect x="1117" y="333" width="1" height="16" fill="#000"/>
<rect x="1116" y="339" width="3" height="2" fill="#000"/>
<rect x="1120" y="333" width="1" height="16" fill="#000"/>
<rect x="1118" y="339" width="4" height="2" fill="#000"/>
<rect x="1124" y="342" width="1" height="7" fill="#000"/>
<rect x="1122" y="342" width="4" height="2" fill="#000"/>
<rect x="1128" y="346" width="1" height="18" fill="#000"/>
<rect x="1127" y="349" width="3" height="15" fill="#000"/>
<rect x="1131" y="361" width="1" height="18" fill="#000"/>
<rect x="1129" y="362" width="4" height="11" fill="#000"/>
<rect x="1135" y="373" width="1" height="9" fill="#000"/>
<rect x="1134" y="373" width="3" height="2" fill="#000"/>
<rect x="1138" y="367" width="1" height="15" fill="#000"/>
<rect x="1136" y="367" width="4" height="10" fill="#000"/>
<rect x="1137" y="368" width="2" height="8" fill="#fff"/>
<rect x="1142" y="346" width="1" height="20" fill="#000"/>
<rect x="1140" y="357" width="4" height="9" fill="#000"/>
<rect x="1141" y="358" width="2" height="7" fill="#fff"/>
<rect x="1146" y="352" width="1" height="17" fill="#000"/>
<rect x="1145" y="352" width="3" height="6" fill="#000"/>
<rect x="1149" y="360" width="1" height="7" fill="#000"/>
<rect x="1147" y="360" width="4" height="3" fill="#000"/>
<rect x="1153" y="360" width="1" height="5" fill="#000"/>
<rect x="1152" y="361" width="3" height="3" fill="#000"/>
<rect x="1156" y="364" width="1" height="5" fill="#000"/>
<rect x="1154" y="364" width="4" height="2" fill="#000"/>
<rect x="1160" y="363" width="1" height="6" fill="#000"/>
<rect x="1158" y="364" width="4" height="3" fill="#000"/>
<rect x="1164" y="365" width="1" height="10" fill="#000"/>
<rect x="1163" y="366" width="3" height="6" fill="#000"/>
</g>
<g shape-rendering="crispEdges">
<rect x="0" y="92" width="1206" height="1" fill="#0000ff"/>
<rect x="0" y="161" width="1206" height="1" fill="#0000ff"/>
<rect x="0" y="207" width="1206" height="1" fill="#0000ff"/>
<rect x="0" y="266" width="1206" height="1" fill="#0000ff"/>
<rect x="0" y="276" width="1206" height="1" fill="#0000ff"/>
<rect x="0" y="295" width="1206" height="1" fill="#0000ff"/>
<rect x="0" y="317" width="1206" height="1" fill="#0000ff"/>
<rect x="0" y="361" width="1206" height="1" fill="#0000ff"/>
<rect x="0" y="388" width="1206" height="1" fill="#0000ff"/>
<rect x="0" y="424" width="1206" height="1" fill="#0000ff"/>
<rect x="0" y="461" width="1206" height="1" fill="#0000ff"/>
<rect x="0" y="534" width="1206" height="1" fill="#0000ff"/>
<rect x="0" y="620" width="1206" height="1" fill="#0000ff"/>
<rect x="0" y="657" width="1206" height="1" fill="#0000ff"/>
<rect x="0" y="714" width="1206" height="1" fill="#0000ff"/>
<rect x="0" y="766" width="1206" height="1" fill="#0000ff"/>
<rect x="0" y="789" width="1206" height="1" fill="#0000ff"/>
</g>
<g shape-rendering="crispEdges" stroke-linejoin="round">
<path d="M614,12.5h4M614,13.5h1M618.5,13v2M613.5,14v2M627,14.5h5M619,15.5h1M625,15.5h2M631,15.5h1M612.5,16v3M620,16.5h5M632.5,16v4M611.5,19v4M167.5,20v6M633.5,20v3M166.5,21v2M165.5,23v2M610.5,23v5M634.5,23v6M164.5,25v2M168.5,26v8M163.5,27v4M609.5,28v6M635.5,29v11M162.5,31v8M826.5,31v2M833.5,31v4M827,32.5h2M831,32.5h2M825.5,33v4M829,33.5h2M169.5,34v6M608.5,34v7M834.5,35v7M973.5,36v4M824.5,37v3M972.5,37v2M161.5,39v11M971,39.5h1M170.5,40v6M636.5,40v12M823.5,40v3M970.5,40v2M974.5,40v8M607.5,41v10M835.5,42v7M969.5,42v5M822.5,43v4M171.5,46v13M821.5,47v3M968.5,47v8M975.5,48v7M836.5,49v6M160.5,50v10M820.5,50v4M606.5,51v6M637.5,52v17M819.5,54v2M837.5,55v6M967.5,55v8M976.5,55v6M818.5,56v2M279.5,57v5M605.5,57v3M278.5,58v2M817,58.5h1M1146.5,58v2M172.5,59v14M816.5,59v2M1145,59.5h1M159.5,60v4M277,60.5h1M604.5,60v4M1143,60.5h2M1147.5,60v2M276,61.5h1M815.5,61v2M838.5,61v6M977.5,61v5M1142.5,61v2M275.5,62v2M280.5,62v6M1148.5,62v2M408,63.5h1M811,63.5h4M966.5,63v5M1141.5,63v3M158.5,64v2M274.5,64v3M407,64.5h1M409,64.5h1M603.5,64v3M807,64.5h4M1149.5,64v4M297,65.5h4M405,65.5h2M410,65.5h1M807,65.5h1M157.5,66v2M296,66.5h1M301,66.5h1M404.5,66v4M411,66.5h1M806.5,66v4M978.5,66v4M1140.5,66v4M273.5,67v6M295,67.5h1M302.5,67v2M412.5,67v3M602.5,67v4M839.5,67v6M156.5,68v2M281.5,68v5M294,68.5h1M965,68.5h1M1150.5,68v4M245.5,69v5M246,69.5h2M293,69.5h1M303,69.5h1M638.5,69v11M964.5,69v2M154,70.5h2M248,70.5h2M292.5,70v2M304.5,70v4M403.5,70v6M413.5,70v4M805.5,70v4M979.5,70v4M1139.5,70v2M152,71.5h2M250,71.5h1M601.5,71v8M963,71.5h1M151,72.5h1M251.5,72v2M291,72.5h1M962,72.5h1M1138.5,72v2M1151.5,72v4M150.5,73v2M173.5,73v8M272.5,73v6M282.5,73v3M285,73.5h6M840.5,73v6M961.5,73v2M244.5,74v7M252,74.5h1M283,74.5h2M305.5,74v6M414.5,74v4M804.5,74v4M980.5,74v2M1137.5,74v2M149.5,75v2M253,75.5h1M960.5,75v2M254.5,76v2M402.5,76v4M671,76.5h4M689.5,76v2M981.5,76v3M987.5,76v2M1136.5,76v2M1152.5,76v4M148.5,77v2M671,77.5h1M675.5,77v2M688.5,77v2M749,77.5h2M959,77.5h1M986.5,77v2M255,78.5h1M415.5,78v3M670.5,78v2M690.5,78v2M747,78.5h2M751.5,78v2M803.5,78v4M958,78.5h1M988.5,78v4M1135.5,78v2M147.5,79v3M256.5,79v2M271.5,79v5M389,79.5h2M600.5,79v11M676.5,79v2M687,79.5h1M746.5,79v2M841.5,79v6M957,79.5h1M982.5,79v2M985,79.5h1M142,80.5h1M306.5,80v5M386,80.5h3M391,80.5h1M401.5,80v3M433,80.5h1M639.5,80v3M669.5,80v3M686.5,80v2M691.5,80v4M752.5,80v2M956,80.5h1M984.5,80v2M1134,80.5h1M1153.5,80v3M141.5,81v2M143,81.5h2M174.5,81v6M243.5,81v5M257.5,81v2M385.5,81v2M392,81.5h1M416,81.5h1M432,81.5h1M434,81.5h1M677.5,81v2M745,81.5h1M947,81.5h1M955,81.5h1M983.5,81v2M1133,81.5h1M145,82.5h2M393,82.5h1M417,82.5h1M431,82.5h1M435,82.5h1M662,82.5h2M685,82.5h1M744.5,82v2M753,82.5h1M802.5,82v5M946.5,82v2M948,82.5h1M954,82.5h1M989.5,82v3M1132,82.5h1M140.5,83v2M146,83.5h1M228,83.5h1M258.5,83v4M384.5,83v2M394,83.5h1M400,83.5h1M418,83.5h1M430,83.5h1M436.5,83v2M640.5,83v3M660,83.5h2M664,83.5h2M668.5,83v2M678,83.5h1M684,83.5h1M731.5,83v2M754,83.5h1M949,83.5h1M953,83.5h1M1131,83.5h1M1154.5,83v4M227,84.5h1M229.5,84v2M270.5,84v4M395,84.5h1M399,84.5h1M419,84.5h1M428,84.5h2M660,84.5h1M666,84.5h2M679,84.5h2M682,84.5h2M692.5,84v6M732,84.5h1M739,84.5h5M755.5,84v2M945.5,84v2M950,84.5h1M952,84.5h1M1130,84.5h1M139.5,85v2M226,85.5h1M307.5,85v5M383.5,85v2M396,85.5h1M398,85.5h1M420,85.5h1M426,85.5h2M437.5,85v4M659.5,85v4M681,85.5h1M730.5,85v2M733,85.5h1M738,85.5h1M842.5,85v6M951,85.5h1M990.5,85v3M1129.5,85v2M225,86.5h1M230,86.5h1M242.5,86v3M397,86.5h1M421,86.5h1M424,86.5h2M641.5,86v3M734,86.5h1M736,86.5h2M756,86.5h1M944,86.5h1M1081,86.5h1M138.5,87v2M175.5,87v2M224.5,87v3M231,87.5h6M259.5,87v3M381,87.5h2M422,87.5h2M729.5,87v2M735,87.5h1M757,87.5h2M801.5,87v4M943.5,87v2M1080,87.5h1M1082.5,87v4M1128.5,87v2M1155.5,87v3M237,88.5h2M241,88.5h1M269.5,88v5M379.5,88v3M380,88.5h1M759,88.5h2M991.5,88v2M1078,88.5h2M137.5,89v6M176.5,89v2M181.5,89v2M239,89.5h2M438.5,89v3M480.5,89v2M642.5,89v2M658.5,89v4M728.5,89v2M760,89.5h1M942.5,89v2M1077,89.5h1M1127.5,89v2M180,90.5h1M223.5,90v4M260.5,90v2M308.5,90v4M481.5,90v2M563,90.5h3M599.5,90v10M693.5,90v4M761.5,90v2M992.5,90v2M1075,90.5h2M1156.5,90v2M77,91.5h1M177,91.5h3M182.5,91v2M378.5,91v4M479.5,91v2M562,91.5h1M566,91.5h5M643.5,91v2M727,91.5h1M800.5,91v4M843.5,91v3M941.5,91v2M1066,91.5h3M1073,91.5h2M1083.5,91v6M1126.5,91v2M1157,91.5h4M76,92.5h1M78.5,92v2M177,92.5h1M261.5,92v2M439.5,92v4M482,92.5h1M508,92.5h1M560,92.5h2M571,92.5h1M721,92.5h3M726,92.5h1M762.5,92v2M993.5,92v2M1035,92.5h3M1059,92.5h7M1069,92.5h4M1120,92.5h1M1160,92.5h1M75,93.5h1M183.5,93v2M268.5,93v3M478.5,93v2M483.5,93v2M507,93.5h1M509,93.5h1M555,93.5h5M572,93.5h1M644.5,93v2M657.5,93v4M721,93.5h1M724,93.5h2M865.5,93v2M940.5,93v2M1020,93.5h1M1034,93.5h1M1037,93.5h1M1058,93.5h1M1119.5,93v2M1121,93.5h1M1125.5,93v2M1161.5,93v2M74,94.5h1M79,94.5h1M222.5,94v3M262,94.5h1M309.5,94v4M506,94.5h1M510.5,94v2M554,94.5h1M573,94.5h1M694.5,94v3M720.5,94v2M763.5,94v2M844,94.5h1M866,94.5h1M994,94.5h1M1019.5,94v2M1021.5,94v2M1033,94.5h1M1038.5,94v4M1052,94.5h3M1057,94.5h1M1122,94.5h1M73,95.5h1M80,95.5h1M136.5,95v7M184,95.5h1M263,95.5h1M377.5,95v4M477.5,95v3M484.5,95v2M504,95.5h2M553,95.5h1M574,95.5h1M645.5,95v2M700,95.5h4M799.5,95v4M845,95.5h1M864.5,95v2M867.5,95v2M939.5,95v4M995.5,95v2M1032,95.5h1M1052,95.5h1M1055,95.5h2M1118.5,95v2M1123,95.5h2M1162,95.5h2M71,96.5h2M81.5,96v2M185,96.5h1M264,96.5h2M267,96.5h1M440.5,96v2M503,96.5h1M511,96.5h1M524,96.5h1M551,96.5h2M575,96.5h1M699,96.5h1M704,96.5h1M719.5,96v2M764,96.5h1M779,96.5h1M846.5,96v2M1018.5,96v2M1022.5,96v2M1027,96.5h5M1051.5,96v2M1124,96.5h1M1164,96.5h1M70,97.5h1M186,97.5h1M221,97.5h1M266,97.5h1M485.5,97v2M501,97.5h2M512,97.5h1M523,97.5h1M525.5,97v2M550,97.5h1M576,97.5h1M646.5,97v2M656.5,97v2M695.5,97v2M698.5,97v2M705.5,97v2M765,97.5h1M777,97.5h2M780,97.5h1M863.5,97v2M868,97.5h1M996,97.5h1M1025,97.5h2M1084.5,97v3M1117.5,97v2M82.5,98v2M187,98.5h1M190,98.5h4M219,98.5h2M310.5,98v3M318.5,98v3M441,98.5h1M476.5,98v2M498,98.5h3M513,98.5h2M521,98.5h2M549,98.5h1M577,98.5h1M581,98.5h2M718.5,98v2M766,98.5h1M775,98.5h2M781.5,98v2M847,98.5h1M869,98.5h1M997.5,98v2M1012,98.5h6M1023,98.5h2M1039.5,98v3M1050.5,98v2M188,99.5h2M194,99.5h3M218,99.5h1M316,99.5h2M347,99.5h1M376.5,99v4M442.5,99v2M486.5,99v2M496,99.5h2M515,99.5h1M519,99.5h2M526,99.5h1M537,99.5h7M547,99.5h2M578,99.5h3M583,99.5h1M647.5,99v2M655.5,99v2M696,99.5h2M706,99.5h1M717,99.5h1M767,99.5h1M773,99.5h2M798.5,99v2M848,99.5h1M862.5,99v2M870,99.5h2M938.5,99v4M1012,99.5h1M1116.5,99v2M83.5,100v2M105,100.5h2M196,100.5h1M217,100.5h1M315,100.5h1M345,100.5h2M348.5,100v2M475.5,100v2M489,100.5h7M516,100.5h3M527,100.5h5M536,100.5h1M544,100.5h3M584.5,100v2M598.5,100v5M696,100.5h1M707,100.5h1M714,100.5h3M768,100.5h5M782,100.5h1M849,100.5h1M872,100.5h2M878,100.5h6M998,100.5h1M1011.5,100v2M1049.5,100v2M1085,100.5h1M102,101.5h3M107,101.5h1M197.5,101v4M215,101.5h2M311.5,101v2M313,101.5h2M319.5,101v4M344,101.5h1M443,101.5h1M487,101.5h2M532,101.5h2M535,101.5h1M648.5,101v2M654.5,101v2M708.5,101v2M713,101.5h1M783,101.5h1M797.5,101v2M850,101.5h9M861.5,101v2M874,101.5h4M884,101.5h3M999,101.5h1M1040.5,101v3M1086,101.5h1M1115,101.5h1M84.5,102v2M100,102.5h2M108,102.5h1M135.5,102v4M214,102.5h1M312,102.5h1M343,102.5h1M349,102.5h1M444,102.5h4M474.5,102v2M534,102.5h1M585,102.5h1M712,102.5h1M784.5,102v2M859,102.5h2M887,102.5h1M925,102.5h2M1000,102.5h1M1010.5,102v2M1048,102.5h1M1087,102.5h1M1114,102.5h1M99,103.5h1M109,103.5h1M213.5,103v2M341,103.5h2M350,103.5h1M358,103.5h3M375.5,103v2M448,103.5h2M586,103.5h1M649,103.5h1M653.5,103v2M709,103.5h1M711,103.5h1M796.5,103v2M888,103.5h1M923,103.5h2M927,103.5h2M937.5,103v2M1001,103.5h1M1004,103.5h3M1047,103.5h1M1088,103.5h1M1113,103.5h1M85.5,104v2M98,104.5h1M110,104.5h1M336,104.5h5M351,104.5h2M357,104.5h1M361,104.5h2M450,104.5h1M472,104.5h2M587,104.5h1M650,104.5h1M710,104.5h1M785,104.5h1M788,104.5h2M889,104.5h1M893,104.5h2M922,104.5h1M929,104.5h8M1002,104.5h2M1007,104.5h3M1041.5,104v2M1046,104.5h1M1089,104.5h1M1112,104.5h1M97,105.5h1M111,105.5h1M198.5,105v3M212.5,105v2M320.5,105v4M334,105.5h2M353,105.5h1M355,105.5h2M363,105.5h2M374,105.5h1M451,105.5h6M460,105.5h12M588,105.5h2M597,105.5h1M651,105.5h2M786,105.5h2M790,105.5h2M794,105.5h2M890,105.5h3M895.5,105v2M921,105.5h1M1009,105.5h1M1042,105.5h4M1090,105.5h1M1094,105.5h4M1110,105.5h2M86.5,106v2M96,106.5h1M112,106.5h1M123,106.5h2M134.5,106v2M333,106.5h1M354,106.5h1M365,106.5h1M373,106.5h1M457,106.5h3M590,106.5h1M596.5,106v2M652,106.5h1M792,106.5h2M920,106.5h1M1091,106.5h3M1098,106.5h4M1109,106.5h1M95,107.5h1M113,107.5h1M121,107.5h2M125,107.5h2M211.5,107v3M331,107.5h2M366,107.5h2M372,107.5h1M591,107.5h3M896,107.5h1M919.5,107v2M1102,107.5h3M1107,107.5h2M87.5,108v2M93,108.5h2M114,108.5h7M127,108.5h1M133.5,108v2M199.5,108v2M202,108.5h4M325,108.5h6M368,108.5h4M594,108.5h2M897,108.5h1M1105,108.5h2M91,109.5h2M128,109.5h1M200,109.5h2M206,109.5h2M321.5,109v3M324,109.5h1M898.5,109v2M918,109.5h1M88,110.5h3M129,110.5h1M132.5,110v2M208,110.5h3M322,110.5h2M917,110.5h1M130,111.5h1M210,111.5h1M899,111.5h1M913,111.5h4M131,112.5h1M900,112.5h2M908,112.5h5M902,113.5h2M906,113.5h2M904,114.5h2" fill="none" stroke="#ff0000" stroke-width="1"/>
<path d="M732,249.5h50M723,250.5h9M782,250.5h6M717,251.5h6M788,251.5h7M795,252.5h6M801,253.5h6M807,254.5h4M811,255.5h4M815,256.5h6M821,257.5h6M827,258.5h7M834,259.5h6M840,260.5h6M846,261.5h6M852,262.5h7M859,263.5h6M865,264.5h7M872,265.5h5M877,266.5h3M880,267.5h3M883,268.5h3M886,269.5h3M889,270.5h2M891,271.5h3M894,272.5h3M897,273.5h2M899,274.5h4M903,275.5h4M907,276.5h4M911,277.5h4M915,278.5h4M919,279.5h4M923,280.5h4M927,281.5h4M931,282.5h4M935,283.5h3M938,284.5h3M941,285.5h3M944,286.5h3M947,287.5h3M950,288.5h3M953,289.5h3M956,290.5h3M959,291.5h4M963,292.5h5M968,293.5h5M973,294.5h5M978,295.5h5M983,296.5h5M988,297.5h5M993,298.5h15M1008,299.5h26M1080,299.5h9M1034,300.5h46M1089,300.5h22M1111,301.5h6M1117,302.5h5M1122,303.5h6M1128,304.5h7M1135,305.5h8M1143,306.5h8M1151,307.5h8M1159,308.5h5" fill="none" stroke="#00ff00" stroke-width="1"/>
<path d="M223,213.5h13M220,214.5h3M236,214.5h4M218,215.5h2M240,215.5h4M215,216.5h3M244,216.5h4M213,217.5h2M248,217.5h4M211,218.5h2M252,218.5h12M209,219.5h2M264,219.5h4M207,220.5h2M268,220.5h3M205,221.5h2M271,221.5h4M746,221.5h26M204,222.5h1M275,222.5h3M742,222.5h4M772,222.5h6M202,223.5h2M278,223.5h2M738,223.5h4M778,223.5h3M201,224.5h1M280,224.5h2M732,224.5h6M781,224.5h3M199,225.5h2M282,225.5h2M728,225.5h4M784,225.5h2M198,226.5h1M284,226.5h2M725,226.5h3M786,226.5h2M196,227.5h2M286,227.5h2M722,227.5h3M788,227.5h2M195,228.5h1M288,228.5h2M719,228.5h3M790,228.5h2M193,229.5h2M290,229.5h2M716,229.5h3M792,229.5h3M191,230.5h2M292,230.5h2M714,230.5h2M795,230.5h3M189,231.5h2M294,231.5h2M711,231.5h3M798,231.5h2M188,232.5h1M296,232.5h2M709,232.5h2M800,232.5h2M186,233.5h2M298,233.5h1M707,233.5h2M802,233.5h1M184,234.5h2M299,234.5h2M705,234.5h2M803,234.5h1M177,235.5h7M301,235.5h2M703,235.5h2M804,235.5h2M303,236.5h1M701,236.5h2M806,236.5h1M304,237.5h2M699,237.5h2M807,237.5h1M306,238.5h2M698,238.5h1M808,238.5h1M308,239.5h2M696,239.5h2M809,239.5h1M310,240.5h2M694,240.5h2M810,240.5h2M312,241.5h2M693,241.5h1M812,241.5h1M314,242.5h2M691,242.5h2M813,242.5h1M316,243.5h2M689,243.5h2M814,243.5h1M318,244.5h2M687,244.5h2M815,244.5h2M320,245.5h2M684,245.5h3M817,245.5h2M322,246.5h2M681,246.5h3M819,246.5h2M324,247.5h3M678,247.5h3M821,247.5h2M327,248.5h2M676,248.5h2M823,248.5h2M329,249.5h2M674,249.5h2M825,249.5h2M331,250.5h2M672,250.5h2M827,250.5h3M333,251.5h2M670,251.5h2M830,251.5h2M335,252.5h1M668,252.5h2M832,252.5h2M336,253.5h2M666,253.5h2M834,253.5h2M338,254.5h2M664,254.5h2M836,254.5h1M340,255.5h1M662,255.5h2M837,255.5h1M341,256.5h2M660,256.5h2M838,256.5h2M343,257.5h1M658,257.5h2M840,257.5h1M344,258.5h1M656,258.5h2M841,258.5h1M345,259.5h2M654,259.5h2M842,259.5h1M347,260.5h1M651,260.5h3M843,260.5h1M348,261.5h1M648,261.5h3M844,261.5h1M349,262.5h1M646,262.5h2M845,262.5h1M350,263.5h1M643,263.5h3M846,263.5h1M351,264.5h2M636,264.5h7M847,264.5h1M353,265.5h1M628,265.5h8M848,265.5h1M354,266.5h1M624,266.5h4M849,266.5h1M355,267.5h2M615,267.5h9M850,267.5h1M357,268.5h2M550,268.5h8M582,268.5h33M851,268.5h1M359,269.5h1M546,269.5h4M558,269.5h24M852,269.5h1M360,270.5h2M542,270.5h4M853,270.5h2M362,271.5h1M538,271.5h4M855,271.5h1M363,272.5h2M535,272.5h3M856,272.5h1M365,273.5h2M531,273.5h4M857,273.5h1M367,274.5h1M528,274.5h3M858,274.5h1M368,275.5h2M526,275.5h2M859,275.5h1M370,276.5h2M523,276.5h3M860,276.5h1M372,277.5h1M519,277.5h4M861.5,277v2M373,278.5h2M512,278.5h7M375,279.5h1M509,279.5h3M862,279.5h1M376,280.5h2M506,280.5h3M863,280.5h1M378,281.5h1M503,281.5h3M864,281.5h1M379,282.5h1M500,282.5h3M865,282.5h1M380,283.5h2M497,283.5h3M866.5,283v2M382,284.5h2M494,284.5h3M384,285.5h3M491,285.5h3M867,285.5h1M387,286.5h2M487,286.5h4M868,286.5h1M389,287.5h3M484,287.5h3M869,287.5h1M392,288.5h2M482,288.5h2M870,288.5h1M394,289.5h3M479,289.5h3M871,289.5h1M397,290.5h2M476,290.5h3M872.5,290v2M399,291.5h19M472,291.5h4M418,292.5h24M454,292.5h18M873,292.5h1M442,293.5h12M874,293.5h1M875,294.5h1M876,295.5h1M877,296.5h1M878,297.5h1M879,298.5h1M880.5,299v2M881,301.5h1M882,302.5h1M883,303.5h1M884,304.5h1M885.5,305v2M886,307.5h1M887.5,308v2M888,310.5h1M889,311.5h1M890.5,312v2M891,314.5h1M892,315.5h1M893,316.5h1M894,317.5h1M895.5,318v2M896,320.5h1M897,321.5h1M898,322.5h1M899,323.5h1M900,324.5h1M901,325.5h1M902,326.5h1M903,327.5h1M904.5,328v2M905,330.5h1M906,331.5h1M907,332.5h1M908,333.5h1M909,334.5h1M910,335.5h1M911,336.5h1M912,337.5h1M913,338.5h1M914,339.5h1M915,340.5h1M916,341.5h1M1161,341.5h3M917,342.5h1M1157,342.5h4M918,343.5h1M1150,343.5h7M919,344.5h1M1143,344.5h7M920,345.5h1M1139,345.5h4M921,346.5h1M1135,346.5h4M922,347.5h1M1133,347.5h2M923,348.5h1M1130,348.5h3M924,349.5h1M1128,349.5h2M925,350.5h2M1126,350.5h2M927,351.5h1M1125,351.5h1M928,352.5h1M1123,352.5h2M929,353.5h1M1122,353.5h1M930,354.5h1M1120,354.5h2M931,355.5h1M1119,355.5h1M932,356.5h2M1117,356.5h2M934,357.5h1M1115,357.5h2M935,358.5h1M1113,358.5h2M936,359.5h1M1111,359.5h2M937,360.5h1M1109,360.5h2M938,361.5h1M1108,361.5h1M939,362.5h1M1106,362.5h2M940,363.5h1M1104,363.5h2M941,364.5h1M1102,364.5h2M942,365.5h2M1100,365.5h2M944,366.5h1M1098,366.5h2M945,367.5h1M1096,367.5h2M946,368.5h1M1094,368.5h2M947,369.5h1M1092,369.5h2M948,370.5h1M1089,370.5h3M949,371.5h1M1087,371.5h2M950,372.5h1M1085,372.5h2M951,373.5h2M1082,373.5h3M953,374.5h1M1080,374.5h2M954,375.5h1M1078,375.5h2M955,376.5h1M1076,376.5h2M956,377.5h1M1074,377.5h2M957,378.5h2M1072,378.5h2M959,379.5h1M1070,379.5h2M960,380.5h2M1068,380.5h2M962,381.5h2M1067,381.5h1M964,382.5h2M1065,382.5h2M966,383.5h2M1063,383.5h2M968,384.5h2M1061,384.5h2M970,385.5h3M1059,385.5h2M973,386.5h2M1057,386.5h2M975,387.5h2M1055,387.5h2M977,388.5h3M1052,388.5h3M980,389.5h4M1048,389.5h4M984,390.5h5M1045,390.5h3M989,391.5h4M1043,391.5h2M993,392.5h13M1041,392.5h2M1006,393.5h18M1039,393.5h2M1024,394.5h15" fill="none" stroke="#ff0000" stroke-width="1"/>
<path d="M701,174.5h11M699,175.5h2M712,175.5h4M697,176.5h2M716,176.5h2M695,177.5h2M718,177.5h1M693,178.5h2M719,178.5h1M692,179.5h1M720,179.5h1M690,180.5h2M721,180.5h1M689,181.5h1M722,181.5h1M688.5,182v2M723,182.5h1M724,183.5h1M687,184.5h1M725.5,184v2M686,185.5h1M685.5,186v2M726,186.5h1M727.5,187v2M684,188.5h1M683.5,189v2M728,189.5h1M729,190.5h1M682,191.5h1M730.5,191v2M193,192.5h7M681.5,192v2M190,193.5h3M200,193.5h12M731,193.5h1M189,194.5h1M212,194.5h2M680.5,194v2M732.5,194v2M188,195.5h1M214,195.5h2M186,196.5h2M216,196.5h3M679.5,196v2M733,196.5h1M185,197.5h1M219,197.5h2M734.5,197v2M184,198.5h1M221,198.5h2M678.5,198v2M183,199.5h1M223,199.5h1M735,199.5h1M182,200.5h1M224,200.5h1M677.5,200v2M736,200.5h1M181,201.5h1M225,201.5h2M737.5,201v2M180,202.5h1M227,202.5h1M676.5,202v2M178,203.5h2M228,203.5h1M738,203.5h1M177,204.5h1M229,204.5h1M675,204.5h1M739.5,204v2M176,205.5h1M230,205.5h1M674.5,205v2M175,206.5h1M231.5,206v2M740.5,206v2M174,207.5h1M673.5,207v2M173,208.5h1M232,208.5h1M741,208.5h1M172,209.5h1M233.5,209v2M672.5,209v2M742.5,209v2M171.5,210v2M234,211.5h1M671.5,211v2M743.5,211v2M170,212.5h1M235,212.5h1M169,213.5h1M236.5,213v2M670.5,213v2M744.5,213v2M168,214.5h1M85,215.5h2M167,215.5h1M237,215.5h1M669.5,215v2M745.5,215v2M84,216.5h1M87,216.5h2M166.5,216v2M238.5,216v2M83,217.5h1M89,217.5h2M668,217.5h1M746.5,217v2M82.5,218v2M91,218.5h3M165,218.5h1M239.5,218v2M667.5,218v2M94,219.5h2M164,219.5h1M747.5,219v2M81,220.5h1M96,220.5h2M163.5,220v2M240.5,220v2M666.5,220v2M80,221.5h1M98,221.5h2M117,221.5h8M748.5,221v2M79,222.5h1M100,222.5h6M113,222.5h4M125,222.5h7M162,222.5h1M241,222.5h1M665,222.5h1M78.5,223v2M106,223.5h7M132,223.5h5M161,223.5h1M242.5,223v2M664.5,223v2M749.5,223v2M137,224.5h5M160,224.5h1M77,225.5h1M142,225.5h4M159,225.5h1M243.5,225v2M663.5,225v2M750.5,225v2M76.5,226v2M146,226.5h4M158,226.5h1M150,227.5h2M157,227.5h1M244,227.5h1M662.5,227v2M751.5,227v2M75,228.5h1M152,228.5h5M245.5,228v2M74.5,229v2M661.5,229v2M752.5,229v2M246,230.5h1M73,231.5h1M247.5,231v2M660.5,231v2M753.5,231v2M72.5,232v2M248,233.5h1M659.5,233v3M754.5,233v2M71.5,234v2M249,234.5h1M250.5,235v2M755.5,235v2M70.5,236v2M658.5,236v2M251,237.5h1M756,237.5h1M69.5,238v2M252,238.5h1M657.5,238v2M757.5,238v2M253.5,239v2M68.5,240v2M656,240.5h1M758.5,240v2M254,241.5h1M635,241.5h3M655,241.5h1M67.5,242v2M255,242.5h1M632,242.5h3M638,242.5h2M654,242.5h1M759,242.5h1M256,243.5h2M630,243.5h2M640,243.5h2M652,243.5h2M760.5,243v2M66.5,244v2M258,244.5h1M628,244.5h2M642,244.5h3M649,244.5h3M259,245.5h1M626,245.5h2M645,245.5h4M761,245.5h1M65.5,246v3M260,246.5h2M625,246.5h1M762.5,246v2M262,247.5h1M624,247.5h1M263,248.5h2M622,248.5h2M763,248.5h1M64.5,249v3M265,249.5h1M621,249.5h1M764.5,249v2M266,250.5h1M620,250.5h1M267,251.5h2M619,251.5h1M765,251.5h1M63.5,252v4M269,252.5h1M618,252.5h1M766,252.5h1M270,253.5h1M616,253.5h2M767.5,253v2M271,254.5h1M615,254.5h1M272.5,255v2M614,255.5h1M768,255.5h1M62.5,256v3M431,256.5h9M612,256.5h2M769,256.5h1M273,257.5h1M428,257.5h3M440,257.5h2M610,257.5h2M770.5,257v2M274,258.5h1M425,258.5h3M442,258.5h2M609,258.5h1M61.5,259v3M275,259.5h1M422,259.5h3M444,259.5h1M608,259.5h1M771,259.5h1M276,260.5h1M418,260.5h4M445,260.5h2M607.5,260v2M772.5,260v2M277,261.5h1M414,261.5h4M447,261.5h2M60.5,262v4M278,262.5h1M413,262.5h1M449,262.5h3M606,262.5h1M773.5,262v2M279,263.5h2M412.5,263v2M452,263.5h3M521,263.5h15M605,263.5h1M281,264.5h1M455,264.5h2M517,264.5h4M536,264.5h2M604,264.5h1M774.5,264v2M282,265.5h1M411,265.5h1M457,265.5h2M512,265.5h5M538,265.5h3M603,265.5h1M59.5,266v3M283,266.5h1M410.5,266v2M459,266.5h1M509,266.5h3M541,266.5h2M602,266.5h1M775.5,266v2M284,267.5h1M460,267.5h2M507,267.5h2M543,267.5h2M601,267.5h1M285.5,268v2M409,268.5h1M462,268.5h1M506,268.5h1M545,268.5h2M599,268.5h2M776.5,268v2M58.5,269v2M408.5,269v2M463,269.5h2M504,269.5h2M547,269.5h3M598,269.5h1M286.5,270v2M465,270.5h1M503,270.5h1M550,270.5h9M591,270.5h7M777.5,270v2M57.5,271v2M407,271.5h1M466,271.5h1M502,271.5h1M559,271.5h2M585,271.5h6M287.5,272v2M406.5,272v2M467,272.5h2M501,272.5h1M561,272.5h2M580,272.5h5M778.5,272v2M56.5,273v3M469,273.5h1M499,273.5h2M563,273.5h10M577,273.5h3M288,274.5h1M405.5,274v2M470,274.5h1M498,274.5h1M573,274.5h4M779.5,274v2M289.5,275v2M471,275.5h2M496,275.5h2M55.5,276v2M404.5,276v2M473,276.5h2M494,276.5h2M780.5,276v2M290.5,277v2M475,277.5h2M491,277.5h3M54.5,278v2M403.5,278v2M477,278.5h9M489,278.5h2M781,278.5h1M291.5,279v2M486,279.5h3M782.5,279v2M53.5,280v3M402.5,280v2M292.5,281v2M783.5,281v2M401.5,282v2M34,283.5h1M52.5,283v3M293.5,283v2M784,283.5h1M35.5,284v2M400,284.5h1M785.5,284v2M294.5,285v2M399.5,285v2M36,286.5h1M51.5,286v3M786,286.5h1M37.5,287v2M295.5,287v2M398,287.5h1M787,287.5h1M397.5,288v2M788,288.5h1M38,289.5h1M50.5,289v3M296.5,289v2M789,289.5h2M39,290.5h1M396,290.5h1M791,290.5h1M40.5,291v2M297.5,291v2M395,291.5h1M792,291.5h1M49.5,292v2M394.5,292v2M793,292.5h1M41,293.5h1M298.5,293v2M794,293.5h1M42.5,294v2M47,294.5h2M393,294.5h1M795.5,294v2M45,295.5h2M299.5,295v2M392,295.5h1M43,296.5h2M391.5,296v2M796,296.5h1M300.5,297v2M797.5,297v2M390,298.5h1M301.5,299v2M389,299.5h1M798,299.5h1M388,300.5h1M799.5,300v2M302.5,301v2M387.5,301v2M800.5,302v2M303.5,303v2M386,303.5h1M385,304.5h1M801.5,304v3M304.5,305v2M384.5,305v2M305,307.5h1M383,307.5h1M802.5,307v2M306,308.5h1M382,308.5h1M307,309.5h1M381,309.5h1M803.5,309v3M308.5,310v2M380,310.5h1M379,311.5h1M309,312.5h1M378,312.5h1M804.5,312v2M310,313.5h1M377,313.5h1M1079,313.5h10M311,314.5h1M376,314.5h1M805.5,314v2M1078,314.5h1M1089,314.5h5M312,315.5h1M375,315.5h1M1077,315.5h1M1094,315.5h5M313,316.5h2M349,316.5h6M373,316.5h2M806.5,316v2M1076,316.5h1M1099,316.5h5M315,317.5h1M344,317.5h5M355,317.5h4M369,317.5h4M1075,317.5h1M1104,317.5h4M316,318.5h2M340,318.5h4M359,318.5h10M807.5,318v2M1073,318.5h2M1108,318.5h4M318,319.5h4M337,319.5h3M1071,319.5h2M1112,319.5h2M322,320.5h6M333,320.5h4M808.5,320v2M1069,320.5h2M1114,320.5h2M328,321.5h5M1067,321.5h2M1116,321.5h2M809.5,322v2M1065,322.5h2M1118,322.5h1M1063,323.5h2M1119,323.5h2M810.5,324v3M1061,324.5h2M1121,324.5h1M1059,325.5h2M1122,325.5h1M1058,326.5h1M1123,326.5h1M811.5,327v2M1057,327.5h1M1124,327.5h1M1055,328.5h2M1125,328.5h1M812.5,329v3M1054,329.5h1M1126,329.5h1M1053,330.5h1M1127,330.5h1M1052,331.5h1M1128,331.5h1M813.5,332v3M1051,332.5h1M1129,332.5h1M1050,333.5h1M1130.5,333v2M1049,334.5h1M814.5,335v2M855,335.5h2M1047,335.5h2M1131,335.5h1M852,336.5h3M857,336.5h2M1045,336.5h2M1132.5,336v2M815.5,337v2M850,337.5h2M859,337.5h1M1042,337.5h3M849,338.5h1M860,338.5h2M1040,338.5h2M1133.5,338v2M816.5,339v2M848,339.5h1M862,339.5h1M1038,339.5h2M847,340.5h1M863.5,340v2M1037,340.5h1M1134,340.5h1M817.5,341v2M846.5,341v2M1036,341.5h1M1135.5,341v2M864.5,342v2M1035.5,342v2M818,343.5h1M845,343.5h1M1136,343.5h1M819.5,344v2M844,344.5h1M865.5,344v2M1034,344.5h1M1137,344.5h1M843,345.5h1M1033,345.5h1M1138,345.5h1M820.5,346v2M842,346.5h1M866.5,346v2M1032.5,346v2M1139.5,346v2M841.5,347v2M821,348.5h1M867.5,348v2M1031.5,348v2M1140,348.5h1M822,349.5h1M840,349.5h1M1141,349.5h1M823,350.5h1M839,350.5h1M868.5,350v2M1030.5,350v2M1142,350.5h1M824,351.5h1M838.5,351v2M1143,351.5h1M825,352.5h1M869.5,352v2M1029.5,352v2M1144,352.5h1M826,353.5h1M836,353.5h2M1145,353.5h1M827,354.5h3M834,354.5h2M870.5,354v2M1028.5,354v2M1146,354.5h1M830,355.5h4M1147,355.5h1M871.5,356v2M1027,356.5h1M1148,356.5h1M1026.5,357v2M1149,357.5h2M872.5,358v2M1151,358.5h1M1025.5,359v2M1152,359.5h1M873.5,360v2M1153,360.5h2M1024,361.5h1M1155,361.5h1M874.5,362v2M1023.5,362v2M1156,362.5h2M1158,363.5h1M875,364.5h1M1022.5,364v2M1159,364.5h2M876,365.5h2M1161,365.5h1M878,366.5h1M1021.5,366v2M1162,366.5h1M879,367.5h1M1163,367.5h2M880,368.5h1M1020,368.5h1M1165,368.5h1M881.5,369v2M1019.5,369v2M1166,369.5h1M882.5,371v2M1018,371.5h1M1017.5,372v2M883,373.5h1M884.5,374v2M1016,374.5h1M1015.5,375v2M885.5,376v2M1014,377.5h1M886,378.5h1M1013,378.5h1M887.5,379v2M1012.5,379v2M888.5,381v2M1011,381.5h1M1010.5,382v2M889,383.5h1M890.5,384v2M1009,384.5h1M1008,385.5h1M891.5,386v2M1007,386.5h1M1006,387.5h1M892,388.5h1M1005,388.5h1M893.5,389v2M1004,389.5h1M1003,390.5h1M894,391.5h1M1001,391.5h2M895.5,392v2M1000,392.5h1M998,393.5h2M896,394.5h1M997,394.5h1M897.5,395v2M995,395.5h2M993,396.5h2M898,397.5h2M991,397.5h2M900,398.5h2M990,398.5h1M902,399.5h2M989,399.5h1M904,400.5h2M988,400.5h1M906,401.5h3M987,401.5h1M909,402.5h2M986,402.5h1M911,403.5h2M985,403.5h1M913,404.5h2M984,404.5h1M915,405.5h2M983.5,405v2M917,406.5h2M919,407.5h2M982.5,407v2M921,408.5h2M923,409.5h1M981,409.5h1M924,410.5h2M980.5,410v2M926,411.5h2M928,412.5h3M979.5,412v2M931,413.5h4M935,414.5h2M978,414.5h1M937,415.5h1M977.5,415v2M938,416.5h2M940,417.5h1M976.5,417v2M941,418.5h1M942,419.5h1M975,419.5h1M943.5,420v2M974.5,420v2M944,422.5h1M973.5,422v2M945,423.5h1M946.5,424v2M972,424.5h1M971,425.5h1M947,426.5h1M970,426.5h1M948,427.5h1M969.5,427v2M949,428.5h1M950,429.5h1M968,429.5h1M951,430.5h1M967,430.5h1M952,431.5h1M959,431.5h8M953,432.5h1M956,432.5h3M954,433.5h2" fill="none" stroke="#0000ff" stroke-width="1"/>
<path d="M684,143.5h1M685,144.5h1M686,145.5h1M687,146.5h1M688,147.5h1M689,148.5h1M690,149.5h1M691,150.5h1M692,151.5h1M693,152.5h1M694,153.5h1M695,154.5h1M696,155.5h1M697,156.5h1M698,157.5h1M699,158.5h1M700,159.5h1M701,160.5h1M702,161.5h1M703,162.5h1M704,163.5h1M705,164.5h1M706,165.5h1M707,166.5h1M708,167.5h1M709,168.5h1M710,169.5h1M711,170.5h1M712,171.5h1M713,172.5h1M714,173.5h1M715,174.5h1M716,175.5h1M717,176.5h1M718,177.5h1M719,178.5h1M720,179.5h1M721,180.5h1M722,181.5h1M723,182.5h1M724,183.5h1M725,184.5h1M726,185.5h1M727,186.5h1M728,187.5h1M729.5,188v2M730,190.5h1M731,191.5h1M732,192.5h1M733,193.5h1M734,194.5h1M735,195.5h1M736,196.5h1M737,197.5h1M738,198.5h1M739,199.5h1M740,200.5h1M741,201.5h1M742,202.5h1M743,203.5h1M744,204.5h1M745,205.5h1M746,206.5h1M747,207.5h1M748,208.5h1M749,209.5h1M750,210.5h1M751,211.5h1M752,212.5h1M753,213.5h1M754,214.5h1M755,215.5h1M756,216.5h1M757,217.5h1M758,218.5h1M759,219.5h1M760,220.5h1M761,221.5h1M762,222.5h1M763,223.5h1M764,224.5h1M765,225.5h1M766,226.5h1M767,227.5h1M768,228.5h1M769,229.5h1M770,230.5h1M771,231.5h1M772,232.5h1M773,233.5h1M774,234.5h1M775,235.5h1M776,236.5h1M777,237.5h1M778,238.5h1M779,239.5h1M780,240.5h1M781,241.5h1M782,242.5h1M783,243.5h1M784,244.5h1M785,245.5h1M786,246.5h1M787,247.5h1M788,248.5h1M789,249.5h1M790,250.5h1M791,251.5h1M792,252.5h1M793,253.5h1M794,254.5h1M795,255.5h1M796,256.5h1M797,257.5h1M798,258.5h1M799,259.5h1M800,260.5h1M801,261.5h1M802,262.5h1M803,263.5h1M804,264.5h1M805,265.5h1M806,266.5h1M807,267.5h1M808,268.5h1M809,269.5h1M810,270.5h1M811,271.5h1M812,272.5h1M813,273.5h1M814,274.5h1M815,275.5h1M816,276.5h1M817,277.5h1M818,278.5h1M819,279.5h1M820.5,280v2M821,282.5h1M822,283.5h1M823,284.5h1M824,285.5h1M825,286.5h1M826,287.5h1M827,288.5h1M828,289.5h1M829,290.5h1M830,291.5h1M831,292.5h1M832,293.5h1M833,294.5h1M834,295.5h1M835,296.5h1M836,297.5h1M837,298.5h1M838,299.5h1M839,300.5h1M840,301.5h1M841,302.5h1M842,303.5h1M843,304.5h1M844,305.5h1M845,306.5h1M846,307.5h1M847,308.5h1M848,309.5h1M849,310.5h1M850,311.5h1M851,312.5h1M852,313.5h1M853,314.5h1M854,315.5h1M855,316.5h1M856,317.5h1M857,318.5h1M858,319.5h1M859,320.5h1M860,321.5h1M861,322.5h1M862,323.5h1M863,324.5h1M864,325.5h1M865,326.5h1M866,327.5h1M867,328.5h1M868,329.5h1M869,330.5h1M870,331.5h1M871,332.5h1M872,333.5h1M873,334.5h1M874,335.5h1M875,336.5h1M876,337.5h1M877,338.5h1M878,339.5h1M879,340.5h1M880,341.5h1M881,342.5h1M882,343.5h1M883,344.5h1M884,345.5h1M885,346.5h1M886,347.5h1M887,348.5h1M888,349.5h1M889,350.5h1M890,351.5h1M891,352.5h1M892,353.5h1M893,354.5h1M894,355.5h1M895,356.5h1M896,357.5h1M897,358.5h1M898,359.5h1M899,360.5h1M900,361.5h1M901,362.5h1M902,363.5h1M903,364.5h1M904,365.5h1M905,366.5h1M906,367.5h1M907,368.5h1M908,369.5h1M909,370.5h1M910,371.5h1M911.5,372v2M912,374.5h1M913,375.5h1M914,376.5h1M915,377.5h1M916,378.5h1M917,379.5h1M918,380.5h1M919,381.5h1M920,382.5h1M921,383.5h1M922,384.5h1M923,385.5h1M924,386.5h1M925,387.5h1M926,388.5h1M927,389.5h1M928,390.5h1M929,391.5h1M930,392.5h1M931,393.5h1M932,394.5h1M933,395.5h1M934,396.5h1M935,397.5h1M936,398.5h1M937,399.5h1M938,400.5h1M939,401.5h1M940,402.5h1M941,403.5h1M942,404.5h1M943,405.5h1M944,406.5h1M945,407.5h1M946,408.5h1M947,409.5h1M948,410.5h1M949,411.5h1M950,412.5h1M951,413.5h1M952,414.5h1M953,415.5h1M954,416.5h1M955,417.5h1M956,418.5h1M957,419.5h1" fill="none" stroke="#0000ff" stroke-width="1"/>
<path d="M700,162.5h2M702,163.5h2M704,164.5h3M707,165.5h3M710,166.5h2M712,167.5h3M715,168.5h2M717,169.5h3M720,170.5h3M723,171.5h2M725,172.5h3M728,173.5h2M730,174.5h3M733,175.5h2M735,176.5h3M738,177.5h3M741,178.5h2M743,179.5h3M746,180.5h2M748,181.5h3M751,182.5h3M754,183.5h2M756,184.5h3M759,185.5h2M761,186.5h3M764,187.5h3M767,188.5h2M769,189.5h3M772,190.5h2M774,191.5h3M777,192.5h3M780,193.5h2M782,194.5h3M785,195.5h2M787,196.5h3M790,197.5h2M792,198.5h3M795,199.5h3M798,200.5h2M800,201.5h3M803,202.5h2M805,203.5h3M808,204.5h3M811,205.5h2M813,206.5h3M816,207.5h2M818,208.5h3M821,209.5h3M824,210.5h2M826,211.5h3M829,212.5h2M831,213.5h3M834,214.5h3M837,215.5h2M839,216.5h3M842,217.5h2M844,218.5h3M847,219.5h2M849,220.5h3M852,221.5h3M855,222.5h2M857,223.5h3M860,224.5h2M862,225.5h3M865,226.5h3M868,227.5h2M870,228.5h3M873,229.5h2M875,230.5h3M878,231.5h3M881,232.5h2M883,233.5h3M886,234.5h2M888,235.5h3M891,236.5h3M894,237.5h2M896,238.5h3M899,239.5h2M901,240.5h3M904,241.5h2M906,242.5h3M909,243.5h3M912,244.5h2M914,245.5h3M917,246.5h2M919,247.5h3M922,248.5h3M925,249.5h2M927,250.5h3M930,251.5h2M932,252.5h3M935,253.5h3M938,254.5h2M940,255.5h3M943,256.5h2M945,257.5h3M948,258.5h3M951,259.5h2M953,260.5h3M956,261.5h2M958,262.5h3M961,263.5h2M963,264.5h3M966,265.5h3M969,266.5h2M971,267.5h3M974,268.5h2M976,269.5h3M979,270.5h3M982,271.5h2M984,272.5h3M987,273.5h2M989,274.5h3M992,275.5h3M995,276.5h2M997,277.5h3M1000,278.5h2M1002,279.5h3M1005,280.5h2M1007,281.5h3M1010,282.5h3M1013,283.5h2M1015,284.5h3M1018,285.5h2M1020,286.5h3M1023,287.5h3M1026,288.5h2M1028,289.5h3M1031,290.5h2M1033,291.5h3M1036,292.5h3M1039,293.5h2M1041,294.5h3M1044,295.5h2M1046,296.5h3M1049,297.5h3M1052,298.5h2M1054,299.5h3M1057,300.5h2M1059,301.5h3M1062,302.5h2M1064,303.5h3M1067,304.5h3M1070,305.5h2M1072,306.5h3M1075,307.5h2M1077,308.5h3M1080,309.5h3M1083,310.5h2M1085,311.5h3M1088,312.5h2M1090,313.5h3M1093,314.5h3M1096,315.5h2M1098,316.5h3M1101,317.5h2M1103,318.5h3M1106,319.5h3M1109,320.5h2M1111,321.5h3M1114,322.5h2M1116,323.5h3M1119,324.5h2M1121,325.5h3M1124,326.5h3M1127,327.5h2M1129,328.5h3M1132,329.5h2M1134,330.5h3M1137,331.5h3M1140,332.5h2M1142,333.5h3M1145,334.5h2M1147,335.5h3M1150,336.5h3M1153,337.5h2M1155,338.5h3M1158,339.5h2M1160,340.5h3M1163,341.5h3M1166,342.5h2M1168,343.5h3M1171,344.5h2M1173,345.5h3M1176,346.5h2M1178,347.5h3M1181,348.5h3M1184,349.5h2M1186,350.5h3M1189,351.5h2M1191,352.5h3M1194,353.5h3M1197,354.5h2M1199,355.5h2" fill="none" stroke="#0000ff" stroke-width="1"/>
<path d="M1199,355.5h2M1197,356.5h2M1195,357.5h2M1192,358.5h3M1190,359.5h2M1188,360.5h2M1185,361.5h3M1183,362.5h2M1181,363.5h2M1178,364.5h3M1176,365.5h2M1174,366.5h2M1171,367.5h3M1169,368.5h2M1167,369.5h2M1164,370.5h3M1162,371.5h2M1160,372.5h2M1157,373.5h3M1155,374.5h2M1153,375.5h2M1150,376.5h3M1148,377.5h2M1146,378.5h2M1143,379.5h3M1141,380.5h2M1139,381.5h2M1137,382.5h2M1134,383.5h3M1132,384.5h2M1130,385.5h2M1127,386.5h3M1125,387.5h2M1123,388.5h2M1120,389.5h3M1118,390.5h2M1116,391.5h2M1113,392.5h3M1111,393.5h2M1109,394.5h2M1106,395.5h3M1104,396.5h2M1102,397.5h2M1099,398.5h3M1097,399.5h2M1095,400.5h2M1092,401.5h3M1090,402.5h2M1088,403.5h2M1085,404.5h3M1083,405.5h2M1081,406.5h2M1078,407.5h3M1076,408.5h2M1074,409.5h2M1071,410.5h3M1069,411.5h2M1067,412.5h2M1064,413.5h3M1062,414.5h2M1060,415.5h2M1057,416.5h3M1055,417.5h2M1053,418.5h2M1050,419.5h3M1048,420.5h2M1046,421.5h2M1043,422.5h3M1041,423.5h2M1039,424.5h2M1036,425.5h3M1034,426.5h2M1032,427.5h2M1029,428.5h3M1027,429.5h2M1025,430.5h2M1022,431.5h3M1020,432.5h2M1018,433.5h2M1015,434.5h3M1013,435.5h2M1011,436.5h2M1009,437.5h2M1006,438.5h3M1004,439.5h2M1002,440.5h2M999,441.5h3M997,442.5h2M995,443.5h2M992,444.5h3M990,445.5h2M988,446.5h2M985,447.5h3M983,448.5h2M981,449.5h2M978,450.5h3M976,451.5h2M974,452.5h2M971,453.5h3M969,454.5h2M967,455.5h2M964,456.5h3M962,457.5h2M960,458.5h2M957,459.5h3M955,460.5h2M953,461.5h2M951,462.5h2" fill="none" stroke="#0000ff" stroke-width="1"/>
<path d="M691,504.5h2M696,504.5h3M702,504.5h3M708,504.5h3M690,505.5h1M714,505.5h3M1068,505.5h3M686,506.5h1M1063,506.5h2M1074,506.5h3M1080,506.5h3M1086,506.5h1M684,507.5h2M1057,507.5h2M1062,507.5h1M1087,507.5h2M720,508.5h2M1051,508.5h2M1056,508.5h1M1092,508.5h2M680,509.5h1M722,509.5h1M1050,509.5h1M1094,509.5h1M679,510.5h1M1044,510.5h3M1098,510.5h1M678,511.5h1M1039,511.5h2M1099,511.5h2M726,512.5h1M1038,512.5h1M1104,512.5h1M673,513.5h2M727,513.5h2M1034,513.5h1M1105,513.5h2M672,514.5h1M1032,514.5h2M1110,515.5h3M668,516.5h1M432,517.5h1M666,517.5h2M732,517.5h1M1027,517.5h2M1116,517.5h2M428,518.5h1M433,518.5h2M733,518.5h1M1026,518.5h1M1118,518.5h1M206,519.5h1M426,519.5h2M438,519.5h3M444,519.5h3M734,519.5h1M187,520.5h2M192,520.5h3M204,520.5h2M210,520.5h3M421,520.5h2M450,520.5h3M662,520.5h1M1122,520.5h2M181,521.5h2M186,521.5h1M198,521.5h3M416,521.5h1M420,521.5h1M660,521.5h2M1022,521.5h1M1124,521.5h1M120,522.5h3M180,522.5h1M216,522.5h3M415,522.5h1M456,522.5h2M1021,522.5h1M126,523.5h3M174,523.5h3M222,523.5h3M414,523.5h1M458,523.5h1M655,523.5h2M738,523.5h2M1020,523.5h1M132,524.5h1M630,524.5h3M636,524.5h3M642,524.5h3M648,524.5h3M654,524.5h1M740,524.5h1M1128,524.5h1M133,525.5h2M170,525.5h1M462,525.5h2M626,525.5h1M1129,525.5h1M138,526.5h3M144,526.5h1M168,526.5h2M228,526.5h1M409,526.5h2M464,526.5h1M624,526.5h2M1016,526.5h1M1130,526.5h1M145,527.5h2M229,527.5h1M408,527.5h1M468,527.5h1M618,527.5h3M1015,527.5h1M150,528.5h3M163,528.5h2M230,528.5h1M469,528.5h2M614,528.5h1M744,528.5h1M1014,528.5h1M156,529.5h3M162,529.5h1M404,529.5h1M474,529.5h2M510,529.5h3M516,529.5h3M522,529.5h3M528,529.5h3M534,529.5h3M612,529.5h2M745,529.5h1M1134,529.5h1M403,530.5h1M476,530.5h1M504,530.5h3M540,530.5h1M608,530.5h1M746,530.5h1M1009,530.5h2M1135,530.5h1M234,531.5h2M402,531.5h1M480,531.5h1M492,531.5h3M498,531.5h3M541,531.5h2M546,531.5h1M606,531.5h2M1008,531.5h1M1136,531.5h1M236,532.5h1M481,532.5h2M547,532.5h2M552,532.5h3M486,533.5h3M558,533.5h3M564,533.5h2M600,533.5h3M398,534.5h1M566,534.5h1M570,534.5h3M576,534.5h3M582,534.5h3M588,534.5h3M594,534.5h3M750,534.5h1M1004,534.5h1M1140,534.5h1M240,535.5h2M397,535.5h1M751,535.5h2M1003,535.5h1M1141,535.5h2M242,536.5h1M396,536.5h1M1002,536.5h1M998,538.5h1M1146,538.5h1M246,539.5h1M392,539.5h1M756,539.5h1M996,539.5h2M1147,539.5h2M247,540.5h2M391,540.5h1M757,540.5h1M1152,540.5h1M390,541.5h1M758,541.5h1M992,541.5h1M1153,541.5h2M1158,541.5h1M252,542.5h1M990,542.5h2M1159,542.5h2M253,543.5h2M386,544.5h1M986,544.5h1M258,545.5h2M385,545.5h1M762,545.5h1M985,545.5h1M260,546.5h1M384,546.5h1M763,546.5h1M984,546.5h1M264,547.5h1M764,547.5h1M265,548.5h2M380,549.5h1M270,550.5h3M378,550.5h2M768,550.5h1M980,550.5h1M769,551.5h1M979,551.5h1M276,552.5h2M374,552.5h1M770,552.5h1M978,552.5h1M278,553.5h1M372,553.5h2M282,554.5h1M283,555.5h2M367,555.5h2M774,555.5h1M974,555.5h1M366,556.5h1M775,556.5h2M972,556.5h2M362,557.5h1M288,558.5h2M360,558.5h2M968,558.5h1M290,559.5h1M356,559.5h1M780,559.5h2M967,559.5h1M354,560.5h2M782,560.5h1M966,560.5h1M294,561.5h1M295,562.5h1M348,562.5h3M786,562.5h1M961,562.5h2M296,563.5h1M344,563.5h1M787,563.5h2M960,563.5h1M342,564.5h2M858,564.5h3M864,564.5h3M870,564.5h3M937,564.5h2M942,564.5h3M956,564.5h1M300,565.5h2M338,565.5h1M792,565.5h1M876,565.5h1M932,565.5h1M936,565.5h1M948,565.5h3M954,565.5h2M302,566.5h1M336,566.5h2M793,566.5h2M877,566.5h2M930,566.5h2M306,567.5h1M332,567.5h1M853,567.5h2M882,567.5h3M918,567.5h3M924,567.5h3M307,568.5h2M330,568.5h2M798,568.5h2M852,568.5h1M888,568.5h2M907,568.5h2M912,568.5h3M324,569.5h3M800,569.5h1M890,569.5h1M894,569.5h3M900,569.5h3M906,569.5h1M312,570.5h3M318,570.5h3M847,570.5h2M846,571.5h1M804,572.5h1M805,573.5h1M842,573.5h1M806,574.5h1M841,574.5h1M840,575.5h1M810,578.5h2M836,578.5h1M812,579.5h1M834,579.5h2M816,581.5h1M828,581.5h3M817,582.5h2M824,582.5h1M822,583.5h2" fill="none" stroke="#ff0000" stroke-width="1"/>
<path d="M677,501.5h21M674,502.5h3M698,502.5h4M673,503.5h1M702,503.5h3M672,504.5h1M705,504.5h3M1049,504.5h10M671,505.5h1M708,505.5h3M1046,505.5h3M1059,505.5h12M670,506.5h1M711,506.5h2M1028,506.5h18M1071,506.5h7M669,507.5h1M713,507.5h2M1026,507.5h2M1078,507.5h6M668,508.5h1M715,508.5h1M1024,508.5h2M1084,508.5h2M667,509.5h1M716.5,509v2M1023,509.5h1M1086,509.5h2M665,510.5h2M1022,510.5h1M1088,510.5h1M664,511.5h1M717.5,511v2M1020,511.5h2M1089,511.5h2M663,512.5h1M1019,512.5h1M1091,512.5h2M411,513.5h3M662,513.5h1M718,513.5h1M1018,513.5h1M1093,513.5h2M408,514.5h3M414,514.5h3M661,514.5h1M719.5,514v2M1016,514.5h2M1095,514.5h2M407,515.5h1M417,515.5h10M660.5,515v2M1014,515.5h2M1097,515.5h2M175,516.5h4M405,516.5h2M427,516.5h3M720,516.5h1M1013,516.5h1M1099,516.5h2M172,517.5h3M179,517.5h4M404,517.5h1M430,517.5h3M659,517.5h1M721,517.5h1M1012,517.5h1M1101,517.5h2M171,518.5h1M183,518.5h2M403.5,518v2M433,518.5h4M658,518.5h1M722,518.5h1M1010,518.5h2M1103,518.5h2M170,519.5h1M185,519.5h3M203,519.5h8M437,519.5h4M657,519.5h1M723,519.5h1M1009,519.5h1M1105,519.5h3M100,520.5h9M169,520.5h1M188,520.5h2M201,520.5h2M211,520.5h2M402,520.5h1M441,520.5h4M656,520.5h1M724,520.5h1M1008,520.5h1M1108,520.5h2M95,521.5h5M109,521.5h3M168,521.5h1M190,521.5h11M213,521.5h1M401.5,521v2M445,521.5h2M655.5,521v2M725,521.5h1M1007.5,521v2M1110,521.5h2M92,522.5h3M112,522.5h5M167,522.5h1M214,522.5h1M447,522.5h2M610,522.5h20M726.5,522v2M1112,522.5h2M117,523.5h4M165,523.5h2M215,523.5h1M397,523.5h4M449,523.5h2M608,523.5h2M630,523.5h4M654,523.5h1M1006.5,523v2M1114,523.5h2M121,524.5h2M164,524.5h1M216,524.5h1M395,524.5h2M451,524.5h2M606,524.5h2M634,524.5h20M727,524.5h1M1116,524.5h1M123,525.5h2M163,525.5h1M217,525.5h2M393,525.5h2M453,525.5h1M605,525.5h1M728,525.5h1M1005.5,525v2M1117,525.5h1M125,526.5h2M162,526.5h1M219,526.5h2M392,526.5h1M454,526.5h2M604,526.5h1M729.5,526v2M1118,526.5h1M127,527.5h3M161.5,527v2M221,527.5h1M391,527.5h1M456,527.5h2M603,527.5h1M1004,527.5h1M1119,527.5h1M130,528.5h5M222,528.5h1M390,528.5h1M458,528.5h2M500,528.5h10M602.5,528v2M730,528.5h1M1003.5,528v2M1120,528.5h3M135,529.5h11M160,529.5h1M223,529.5h1M389,529.5h1M460,529.5h2M495,529.5h5M510,529.5h23M731,529.5h1M1123,529.5h2M146,530.5h3M159,530.5h1M224,530.5h1M388.5,530v2M462,530.5h2M492,530.5h3M533,530.5h5M601.5,530v2M732.5,530v2M1000,530.5h3M1125,530.5h1M149,531.5h4M157,531.5h2M225,531.5h1M464,531.5h2M489,531.5h3M538,531.5h2M995,531.5h5M1126.5,531v2M153,532.5h4M226.5,532v2M387,532.5h1M466,532.5h2M487,532.5h2M540,532.5h2M599,532.5h2M733,532.5h1M991,532.5h4M386,533.5h1M468,533.5h1M485,533.5h2M542,533.5h2M596,533.5h3M734,533.5h1M988,533.5h3M1127,533.5h1M227,534.5h1M385,534.5h1M469,534.5h2M482,534.5h3M544,534.5h4M590,534.5h6M735,534.5h1M986,534.5h2M1128,534.5h1M228,535.5h1M384,535.5h1M471,535.5h2M479,535.5h3M548,535.5h42M736,535.5h2M984,535.5h2M1129,535.5h1M229,536.5h1M383.5,536v2M473,536.5h6M738,536.5h2M982,536.5h2M1130.5,536v2M230,537.5h1M740,537.5h2M980,537.5h2M231,538.5h2M382,538.5h1M742,538.5h1M979,538.5h1M1131,538.5h1M233,539.5h1M381,539.5h1M743,539.5h1M978,539.5h1M1132,539.5h1M234,540.5h1M380.5,540v2M744,540.5h2M976,540.5h2M1133,540.5h1M235,541.5h2M746,541.5h1M975,541.5h1M1134,541.5h1M237,542.5h2M379,542.5h1M747,542.5h1M974,542.5h1M1135,542.5h1M239,543.5h2M378,543.5h1M748,543.5h1M973,543.5h1M1136,543.5h2M241,544.5h1M377,544.5h1M749.5,544v2M972,544.5h1M1138,544.5h2M242,545.5h1M376,545.5h1M971,545.5h1M1140,545.5h14M243,546.5h1M375,546.5h1M750,546.5h1M970,546.5h1M1154,546.5h5M244,547.5h1M373,547.5h2M751,547.5h1M969,547.5h1M1159,547.5h3M245,548.5h1M371,548.5h2M752,548.5h1M968.5,548v2M1162,548.5h2M246,549.5h2M368,549.5h3M753,549.5h1M248,550.5h3M365,550.5h3M754.5,550v2M967.5,550v2M251,551.5h14M363,551.5h2M265,552.5h4M361,552.5h2M755,552.5h1M966.5,552v2M269,553.5h1M352,553.5h9M756,553.5h1M270,554.5h1M350,554.5h2M757,554.5h2M965.5,554v2M271,555.5h1M348,555.5h2M759,555.5h2M272,556.5h1M346,556.5h2M761,556.5h2M964,556.5h1M273,557.5h1M344,557.5h2M763,557.5h1M858,557.5h2M963,557.5h1M274,558.5h2M343,558.5h1M764,558.5h1M855,558.5h3M860,558.5h2M961,558.5h2M276,559.5h2M341,559.5h2M765,559.5h1M854,559.5h1M862,559.5h1M960,559.5h1M278,560.5h3M339,560.5h2M766.5,560v2M852,560.5h2M863.5,560v2M959,560.5h1M281,561.5h2M337,561.5h2M851,561.5h1M958,561.5h1M283,562.5h1M334,562.5h3M767,562.5h1M845,562.5h6M864.5,562v2M935,562.5h8M957.5,562v2M284,563.5h2M331,563.5h3M768,563.5h1M843,563.5h2M933,563.5h2M943,563.5h2M286,564.5h1M328,564.5h3M769,564.5h1M841,564.5h2M865,564.5h1M931,564.5h2M945,564.5h2M956,564.5h1M287,565.5h2M325,565.5h3M770,565.5h2M839,565.5h2M866,565.5h2M917,565.5h14M947,565.5h1M955,565.5h1M289,566.5h2M323,566.5h2M772,566.5h3M837,566.5h2M868,566.5h2M912,566.5h5M948,566.5h2M954,566.5h1M291,567.5h2M321,567.5h2M775,567.5h3M836,567.5h1M870,567.5h4M909,567.5h3M950,567.5h2M953,567.5h1M293,568.5h1M319,568.5h2M778,568.5h2M835.5,568v2M874,568.5h3M904,568.5h5M952,568.5h1M294,569.5h2M318,569.5h1M780,569.5h4M877,569.5h2M900,569.5h4M296,570.5h1M317,570.5h1M784,570.5h6M834,570.5h1M879,570.5h2M898,570.5h2M297,571.5h1M316,571.5h1M790,571.5h5M833,571.5h1M881,571.5h17M298,572.5h2M315,572.5h1M795,572.5h3M832.5,572v2M300,573.5h2M314,573.5h1M798,573.5h1M302,574.5h3M312,574.5h2M799,574.5h1M831.5,574v2M305,575.5h7M800,575.5h1M801,576.5h1M830.5,576v2M802,577.5h1M803.5,578v2M829,578.5h1M827,579.5h2M804.5,580v2M826,580.5h1M825,581.5h1M805,582.5h1M823,582.5h2M806.5,583v2M822,583.5h1M821.5,584v2M807,585.5h1M808.5,586v2M820.5,586v2M809,588.5h1M819.5,588v2M810.5,589v2M818,590.5h1M811,591.5h2M817,591.5h1M813,592.5h2M816,592.5h1M815,593.5h1" fill="none" stroke="#ff0000" stroke-width="1"/>
<path d="M1027,609.5h3M1033,609.5h1M1034,610.5h1M60,611.5h3M66,611.5h2M1021,611.5h3M1035,611.5h1M68,612.5h1M109,612.5h2M1017,612.5h1M106,613.5h1M111,613.5h1M975,613.5h1M1016,613.5h1M105.5,614v2M976,614.5h2M1015,614.5h1M56.5,615v2M667,615.5h3M971,615.5h1M1038,615.5h1M1081,615.5h3M72,616.5h1M498,616.5h1M663,616.5h1M970,616.5h1M981,616.5h1M1039.5,616v2M55,617.5h1M73.5,617v2M114.5,617v3M493,617.5h2M499,617.5h2M662,617.5h1M673,617.5h1M969,617.5h1M982.5,617v2M1012,617.5h1M492,618.5h1M661,618.5h1M674,618.5h2M1011.5,618v2M1085.5,618v2M104.5,619v2M392,619.5h3M1043,619.5h1M1078,619.5h1M210,620.5h1M504,620.5h1M1044,620.5h2M1049,620.5h3M1077.5,620v2M1086,620.5h1M53.5,621v2M103,621.5h1M211.5,621v2M387,621.5h2M412,621.5h1M505,621.5h1M679,621.5h2M968,621.5h1M1055,621.5h1M74.5,622v3M386,622.5h1M398,622.5h2M411,622.5h1M489.5,622v2M506,622.5h1M607,622.5h1M658.5,622v2M681,622.5h1M967.5,622v2M984,622.5h1M1056,622.5h1M52,623.5h1M115,623.5h1M400,623.5h1M410,623.5h1M416.5,623v2M605,623.5h2M985,623.5h1M1009.5,623v2M1057,623.5h1M116.5,624v2M207,624.5h1M488,624.5h1M599,624.5h3M611,624.5h1M657,624.5h1M986,624.5h1M1087,624.5h1M102.5,625v3M206.5,625v2M417,625.5h1M594,625.5h2M612,625.5h1M1008,625.5h1M1075.5,625v3M1088.5,625v2M214.5,626v3M382,626.5h1M404,626.5h1M406,626.5h1M509,626.5h1M564,626.5h3M593,626.5h1M613,626.5h1M683.5,626v2M830,626.5h2M50.5,627v3M174,627.5h1M322.5,627v2M381.5,627v2M405,627.5h1M510.5,627v2M832,627.5h1M965.5,627v3M1060.5,627v2M75.5,628v2M172,628.5h2M326,628.5h2M353,628.5h1M357,628.5h1M487,628.5h1M532,628.5h1M561,628.5h1M654,628.5h1M684,628.5h1M990,628.5h1M117,629.5h1M321,629.5h1M328,629.5h1M352,629.5h1M358,629.5h1M419.5,629v3M486.5,629v2M533,629.5h2M560.5,629v2M653,629.5h1M991.5,629v2M1006.5,629v2M1061,629.5h1M76,630.5h1M118.5,630v2M177,630.5h1M205,630.5h1M351,630.5h1M359,630.5h1M569,630.5h1M590,630.5h1M615,630.5h1M652,630.5h1M696,630.5h2M701,630.5h1M827.5,630v2M836,630.5h1M1072,630.5h1M1089.5,630v3M101,631.5h1M169,631.5h1M178,631.5h1M204.5,631v2M570.5,631v2M589,631.5h1M616.5,631v2M695,631.5h1M702,631.5h2M837,631.5h1M1005,631.5h1M1071,631.5h1M100.5,632v2M168,632.5h1M179,632.5h1M215,632.5h1M379,632.5h1M512,632.5h1M531,632.5h1M588,632.5h1M686.5,632v2M826,632.5h1M838,632.5h1M1064,632.5h2M1070,632.5h1M1156,632.5h1M48,633.5h1M167,633.5h1M216.5,633v2M320.5,633v3M331.5,633v2M378.5,633v2M437,633.5h1M441,633.5h3M513.5,633v2M530.5,633v2M536,633.5h1M648,633.5h1M964,633.5h1M995,633.5h1M1066,633.5h1M1110.5,633v2M1114,633.5h2M1152,633.5h2M1157.5,633v2M47.5,634v2M77.5,634v3M349.5,634v2M361.5,634v2M435,634.5h2M484.5,634v3M537.5,634v2M558,634.5h1M647,634.5h1M687,634.5h1M707,634.5h2M963.5,634v2M996,634.5h2M1115,634.5h1M1151,634.5h1M120.5,635v2M332,635.5h1M421,635.5h1M447,635.5h1M557.5,635v2M646,635.5h1M692,635.5h1M709,635.5h1M1003,635.5h1M1109,635.5h1M181,636.5h1M203.5,636v3M348,636.5h1M362,636.5h1M422.5,636v2M448,636.5h2M572,636.5h1M585.5,636v2M618.5,636v3M690,636.5h2M824,636.5h1M841.5,636v2M1002,636.5h1M1091.5,636v3M98.5,637v3M121,637.5h1M165.5,637v2M182.5,637v2M573.5,637v2M713,637.5h1M823.5,637v2M1001,637.5h1M1148.5,637v2M36,638.5h3M217.5,638v2M376.5,638v3M432,638.5h1M453,638.5h2M515,638.5h1M529,638.5h1M584,638.5h1M642,638.5h1M714,638.5h1M842,638.5h1M1117,638.5h1M1160.5,638v2M42,639.5h3M140,639.5h2M164,639.5h1M318.5,639v2M334,639.5h1M431.5,639v2M455,639.5h1M516.5,639v2M528.5,639v2M539,639.5h1M641,639.5h1M715,639.5h1M962.5,639v3M1106.5,639v2M1118.5,639v2M1147,639.5h1M78.5,640v2M139,640.5h1M218,640.5h1M265,640.5h2M295,640.5h1M299,640.5h3M335.5,640v2M346,640.5h1M364.5,640v2M482.5,640v2M540.5,640v2M555.5,640v2M640,640.5h1M1161,640.5h1M123,641.5h1M145,641.5h1M261.5,641v2M267,641.5h1M293,641.5h2M317,641.5h1M345.5,641v2M425,641.5h1M458,641.5h1M1105,641.5h1M79,642.5h1M124,642.5h1M146,642.5h1M184.5,642v2M202,642.5h1M365,642.5h1M426,642.5h2M459.5,642v2M481,642.5h1M554,642.5h1M575,642.5h1M582.5,642v2M620.5,642v3M747,642.5h2M821.5,642v3M844.5,642v2M1092,642.5h1M96.5,643v2M125,643.5h1M147,643.5h1M162.5,643v2M201.5,643v2M260,643.5h1M576,643.5h1M636,643.5h1M718.5,643v2M749,643.5h1M1093.5,643v2M1146,643.5h1M136,644.5h1M185,644.5h1M219.5,644v2M270,644.5h1M305,644.5h1M374,644.5h1M518,644.5h1M526,644.5h1M577,644.5h1M581,644.5h1M635,644.5h1M845,644.5h1M943,644.5h1M1121.5,644v2M1145.5,644v2M1163.5,644v3M95,645.5h1M135,645.5h1M161,645.5h1M271,645.5h1M290.5,645v2M306,645.5h1M316,645.5h1M339,645.5h1M341,645.5h1M373.5,645v2M519,645.5h1M525,645.5h1M542,645.5h1M634,645.5h1M719,645.5h1M942,645.5h1M960.5,645v3M1103.5,645v2M80.5,646v3M134,646.5h1M220,646.5h1M272,646.5h1M307,646.5h1M315.5,646v2M340,646.5h1M367,646.5h2M480.5,646v2M520,646.5h1M524,646.5h1M543,646.5h1M552.5,646v2M743,646.5h1M753.5,646v2M941,646.5h1M1122,646.5h1M128,647.5h3M151,647.5h1M258.5,647v3M289,647.5h1M369,647.5h1M461,647.5h1M544,647.5h1M742.5,647v2M1102,647.5h1M152,648.5h1M187,648.5h1M200,648.5h1M462.5,648v2M479,648.5h1M551,648.5h1M622,648.5h2M630,648.5h1M754,648.5h1M819.5,648v2M846,648.5h1M945,648.5h1M1096,648.5h1M94,649.5h1M153,649.5h1M159,649.5h1M188.5,649v2M199,649.5h1M624,649.5h1M628,649.5h2M721.5,649v2M847.5,649v2M946,649.5h1M1097,649.5h1M1143.5,649v2M93.5,650v2M157,650.5h2M198,650.5h1M221.5,650v2M275.5,650v2M310,650.5h3M818,650.5h1M879,650.5h1M937.5,650v2M947,650.5h1M1098,650.5h1M1126,650.5h1M287,651.5h1M546,651.5h1M548,651.5h1M722,651.5h1M865,651.5h3M877,651.5h2M883,651.5h2M919,651.5h1M959,651.5h1M1127,651.5h1M1142,651.5h1M82.5,652v2M222,652.5h1M276,652.5h1M286.5,652v2M478.5,652v3M547,652.5h1M740,652.5h1M758,652.5h1M873,652.5h1M885,652.5h1M914,652.5h2M920,652.5h1M936,652.5h1M958.5,652v2M1128,652.5h1M192,653.5h3M256,653.5h1M464.5,653v2M739,653.5h1M759,653.5h1M861.5,653v2M871,653.5h2M913,653.5h1M921,653.5h1M83,654.5h1M255.5,654v2M738,654.5h1M760,654.5h1M817,654.5h1M849,654.5h1M909,654.5h1M949.5,654v2M91,655.5h1M280,655.5h1M465,655.5h1M724,655.5h1M816.5,655v2M850.5,655v2M860,655.5h1M889,655.5h1M907,655.5h2M1141.5,655v2M90.5,656v2M223,656.5h1M281,656.5h2M725.5,656v2M890,656.5h1M925,656.5h1M932.5,656v2M950,656.5h1M1131,656.5h1M224.5,657v2M891,657.5h1M926,657.5h2M955.5,657v2M1132.5,657v2M1140,657.5h1M85,658.5h3M476.5,658v2M736.5,658v2M764,658.5h1M854,658.5h1M856,658.5h1M902,658.5h2M931,658.5h1M251,659.5h2M467,659.5h1M729,659.5h1M765,659.5h1M855,659.5h1M895,659.5h3M901,659.5h1M954,659.5h1M250,660.5h1M468.5,660v2M475,660.5h1M730,660.5h2M735,660.5h1M766,660.5h1M782,660.5h1M814,660.5h1M1137,660.5h1M244,661.5h3M777,661.5h2M783,661.5h2M813,661.5h1M1136,661.5h1M227.5,662v2M239,662.5h2M776,662.5h1M812,662.5h1M1135,662.5h1M238,663.5h1M472,663.5h1M770,663.5h2M228,664.5h1M473,664.5h2M772,664.5h1M788,664.5h1M800,664.5h3M232,665.5h3M789,665.5h2M794,665.5h3M806,665.5h3" fill="none" stroke="#000000" stroke-width="1"/>
<path d="M1027,607.5h1M105.5,608v2M1025,608.5h2M1028,608.5h1M104,609.5h1M1023,609.5h2M1029,609.5h2M103.5,610v2M106.5,610v2M1021,610.5h2M1031,610.5h1M1077,610.5h3M53,611.5h14M1019,611.5h2M1032,611.5h1M1077,611.5h1M1080,611.5h2M51,612.5h2M67,612.5h1M102,612.5h1M107.5,612v2M1012,612.5h7M1033.5,612v2M1076.5,612v4M1081.5,612v2M51,613.5h1M68.5,613v2M101.5,613v2M966,613.5h10M1010,613.5h2M50.5,614v4M108.5,614v2M491,614.5h1M663,614.5h2M965.5,614v2M976.5,614v2M1008,614.5h2M1034.5,614v2M1082.5,614v4M69,615.5h1M100.5,615v2M490,615.5h1M492,615.5h1M660,615.5h3M665,615.5h2M1007.5,615v2M1049.5,615v2M70.5,616v2M109.5,616v2M391,616.5h1M411.5,616v2M489.5,616v2M493,616.5h1M659.5,616v2M667,616.5h1M964.5,616v2M977,616.5h1M1035,616.5h1M1048.5,616v2M1075.5,616v3M99.5,617v2M207,617.5h1M390,617.5h1M392,617.5h1M410.5,617v2M494,617.5h5M668,617.5h2M978.5,617v2M1006.5,617v2M1036.5,617v2M1050.5,617v2M49.5,618v4M71.5,618v2M110.5,618v2M206.5,618v2M208,618.5h2M388,618.5h2M393,618.5h1M412.5,618v2M488,618.5h1M499,618.5h1M658.5,618v2M670,618.5h2M675,618.5h2M963.5,618v2M1047.5,618v2M1083.5,618v4M98.5,619v4M210.5,619v3M387,619.5h1M394,619.5h1M409,619.5h1M487,619.5h1M500,619.5h1M672,619.5h3M677.5,619v2M979.5,619v3M1005.5,619v3M1037,619.5h2M1051.5,619v2M1074.5,619v4M72.5,620v5M111.5,620v2M205,620.5h1M382,620.5h5M395,620.5h1M408.5,620v2M413.5,620v2M486,620.5h1M501,620.5h1M531.5,620v2M657.5,620v2M962.5,620v3M1039,620.5h2M1046.5,620v2M204.5,621v2M321.5,621v2M350.5,621v2M381.5,621v2M396,621.5h1M485,621.5h1M502,621.5h1M559.5,621v2M599.5,621v2M606.5,621v2M678.5,621v2M1041,621.5h2M1052,621.5h1M48.5,622v3M112.5,622v3M211.5,622v6M320.5,622v2M351,622.5h1M397,622.5h1M407.5,622v2M414.5,622v3M484,622.5h1M503,622.5h2M530.5,622v3M532.5,622v4M560.5,622v2M597,622.5h2M607,622.5h1M656.5,622v2M980.5,622v2M1004.5,622v4M1043,622.5h3M1053,622.5h1M1084.5,622v4M97.5,623v8M203.5,623v2M322.5,623v2M349.5,623v3M352.5,623v2M380.5,623v2M398.5,623v2M483.5,623v2M505,623.5h1M558.5,623v2M596,623.5h1M600.5,623v4M605.5,623v3M608.5,623v2M679.5,623v3M961.5,623v5M1045,623.5h1M1054,623.5h1M1073.5,623v2M319,624.5h1M406.5,624v2M506,624.5h1M561.5,624v2M595,624.5h1M655.5,624v2M696,624.5h1M826,624.5h1M981,624.5h1M1055.5,624v2M47.5,625v4M73.5,625v7M113.5,625v4M202.5,625v4M318.5,625v2M323.5,625v2M353,625.5h1M379,625.5h1M399.5,625v2M415.5,625v4M482.5,625v4M507.5,625v2M529.5,625v4M557.5,625v2M588.5,625v2M594,625.5h1M609,625.5h1M695,625.5h1M697.5,625v2M825,625.5h1M827,625.5h1M982,625.5h2M1072.5,625v2M348.5,626v2M354.5,626v2M378,626.5h1M405,626.5h1M533.5,626v3M562.5,626v2M587.5,626v2M593.5,626v2M604.5,626v2M610,626.5h1M654.5,626v2M680.5,626v3M693,626.5h2M824,626.5h1M828,626.5h1M984,626.5h1M1003.5,626v3M1056.5,626v2M1085.5,626v4M1110.5,626v3M167,627.5h9M317.5,627v3M324.5,627v2M377.5,627v2M400.5,627v2M404,627.5h1M508,627.5h1M556.5,627v3M589.5,627v2M601.5,627v4M611,627.5h1M692.5,627v2M698,627.5h1M823,627.5h1M829,627.5h1M985,627.5h1M1071.5,627v2M1109,627.5h1M166,628.5h1M175,628.5h1M212.5,628v4M347.5,628v3M355.5,628v2M402,628.5h2M509.5,628v3M563.5,628v2M586.5,628v2M592,628.5h1M603.5,628v3M612.5,628v2M649,628.5h5M699.5,628v2M822,628.5h1M830,628.5h1M960.5,628v5M986,628.5h2M1057.5,628v2M1107,628.5h2M1149,628.5h1M46.5,629v4M114.5,629v4M165.5,629v2M176.5,629v3M201.5,629v4M325,629.5h1M376,629.5h1M401,629.5h1M416.5,629v4M481.5,629v4M528.5,629v3M534.5,629v4M590,629.5h2M648,629.5h1M681.5,629v3M691.5,629v3M821.5,629v2M831.5,629v2M988,629.5h1M1002.5,629v4M1070.5,629v2M1106.5,629v2M1111.5,629v5M1148,629.5h1M1150,629.5h2M316.5,630v5M326.5,630v2M356.5,630v3M375.5,630v2M435,630.5h2M555.5,630v2M564,630.5h1M585,630.5h1M590,630.5h1M613,630.5h1M647,630.5h1M700.5,630v2M989,630.5h1M1058.5,630v2M1086.5,630v4M1147.5,630v2M1152,630.5h2M96.5,631v5M164,631.5h1M346.5,631v3M434,631.5h1M437,631.5h2M510.5,631v4M565.5,631v2M584.5,631v2M602.5,631v2M614.5,631v2M646,631.5h1M820.5,631v4M832.5,631v2M990,631.5h1M1069,631.5h1M1105.5,631v3M1154.5,631v2M74.5,632v9M163,632.5h1M177.5,632v2M213.5,632v4M327.5,632v2M374.5,632v4M432,632.5h2M439,632.5h1M527.5,632v3M554.5,632v2M645,632.5h1M682.5,632v4M690.5,632v2M701.5,632v2M991,632.5h1M1059.5,632v2M1068,632.5h1M1146,632.5h1M45.5,633v2M115.5,633v4M162.5,633v2M200.5,633v4M357.5,633v3M417.5,633v4M431,633.5h1M440,633.5h2M480.5,633v4M535.5,633v4M566,633.5h1M583.5,633v2M615.5,633v4M644,633.5h1M833,633.5h2M959.5,633v5M992,633.5h1M1001.5,633v2M1067.5,633v2M1145.5,633v3M1155.5,633v2M178.5,634v3M328.5,634v2M345.5,634v3M430.5,634v2M442,634.5h2M553.5,634v3M567,634.5h1M643,634.5h1M689.5,634v3M702.5,634v2M708,634.5h1M835,634.5h2M993,634.5h1M1060,634.5h6M1087.5,634v3M1104.5,634v3M1112.5,634v4M33,635.5h2M44,635.5h1M161.5,635v2M315.5,635v6M444,635.5h1M511.5,635v4M526.5,635v3M568.5,635v2M582.5,635v2M642,635.5h1M706,635.5h2M709,635.5h2M819.5,635v4M837,635.5h2M994,635.5h1M1000.5,635v2M1066,635.5h1M1156.5,635v2M31,636.5h2M34,636.5h1M43.5,636v2M95.5,636v3M134.5,636v2M214.5,636v3M329.5,636v2M358.5,636v2M373.5,636v3M429,636.5h1M445.5,636v2M641,636.5h1M683.5,636v3M703,636.5h3M711,636.5h1M839.5,636v2M995,636.5h1M1144.5,636v4M35.5,637v2M116.5,637v3M135.5,637v2M142.5,637v2M160.5,637v2M179.5,637v3M199.5,637v3M344.5,637v3M418.5,637v4M428,637.5h1M451,637.5h1M479.5,637v4M536.5,637v4M552.5,637v3M569.5,637v3M581.5,637v2M616.5,637v4M640,637.5h1M688.5,637v2M703,637.5h1M712,637.5h1M996.5,637v2M999.5,637v2M1088.5,637v4M1103.5,637v3M1157.5,637v2M42,638.5h1M133.5,638v4M140,638.5h2M260,638.5h2M292,638.5h3M330.5,638v2M359.5,638v3M427.5,638v2M446.5,638v2M450.5,638v2M452,638.5h2M525.5,638v2M638,638.5h2M713.5,638v2M840.5,638v4M958.5,638v4M1113.5,638v3M36.5,639v2M41,639.5h1M94.5,639v3M136,639.5h1M138,639.5h2M143.5,639v3M159.5,639v4M215.5,639v4M259,639.5h1M262,639.5h2M290,639.5h2M295,639.5h2M372.5,639v4M454,639.5h1M512.5,639v2M580.5,639v2M636,639.5h2M684.5,639v4M687.5,639v2M818.5,639v3M997,639.5h2M1158.5,639v2M39,640.5h2M117,640.5h2M137,640.5h1M180.5,640v2M198.5,640v4M258,640.5h1M264,640.5h1M289,640.5h1M297,640.5h2M331,640.5h1M343.5,640v3M426,640.5h1M447.5,640v2M449.5,640v2M455.5,640v2M524.5,640v3M551.5,640v3M570.5,640v4M634,640.5h2M714.5,640v2M742,640.5h5M937,640.5h2M998,640.5h1M1102.5,640v2M1143.5,640v4M37,641.5h2M75.5,641v11M119,641.5h1M257.5,641v2M265,641.5h1M288.5,641v2M299,641.5h1M314.5,641v4M332,641.5h1M360.5,641v2M419.5,641v2M425.5,641v2M478.5,641v4M513.5,641v2M537.5,641v3M579.5,641v2M617.5,641v3M633,641.5h1M686.5,641v2M741.5,641v2M747.5,641v2M937,641.5h1M939,641.5h2M1089.5,641v4M1114.5,641v2M1159.5,641v4M93.5,642v3M120,642.5h1M132.5,642v4M144.5,642v3M181.5,642v3M266,642.5h1M300,642.5h1M333,642.5h1M448,642.5h1M456.5,642v2M632,642.5h1M715.5,642v2M817.5,642v4M841.5,642v3M936.5,642v2M941.5,642v2M957.5,642v4M1101.5,642v2M121.5,643v2M158.5,643v4M216.5,643v4M256.5,643v2M267.5,643v2M287.5,643v2M301.5,643v2M334,643.5h1M342.5,643v2M361.5,643v2M371.5,643v2M420,643.5h2M424.5,643v2M514.5,643v2M523.5,643v2M550.5,643v4M578,643.5h1M631,643.5h1M685.5,643v2M740,643.5h1M748,643.5h1M1115,643.5h1M197.5,644v4M335,644.5h1M422,644.5h1M457.5,644v2M538.5,644v2M571.5,644v4M577.5,644v2M618.5,644v4M630,644.5h1M716.5,644v3M739.5,644v2M749.5,644v2M935.5,644v2M942.5,644v3M1100.5,644v2M1116,644.5h1M1142.5,644v4M92.5,645v3M122,645.5h1M145.5,645v2M182.5,645v3M255.5,645v2M268,645.5h1M286.5,645v2M302,645.5h1M313.5,645v4M336,645.5h1M341,645.5h1M362.5,645v2M370.5,645v2M423,645.5h1M477.5,645v4M515.5,645v2M522.5,645v2M629.5,645v2M842.5,645v3M1090.5,645v4M1117,645.5h1M1160.5,645v3M123,646.5h1M131.5,646v6M269,646.5h1M303,646.5h1M337,646.5h1M340.5,646v2M458.5,646v2M539.5,646v2M576.5,646v2M738.5,646v2M750.5,646v2M816.5,646v4M934.5,646v3M956.5,646v5M1099.5,646v2M1118.5,646v2M124,647.5h5M146,647.5h2M157.5,647v5M217.5,647v4M254.5,647v2M270,647.5h1M285.5,647v3M304.5,647v2M338,647.5h1M363.5,647v2M369.5,647v2M516,647.5h1M521.5,647v2M549.5,647v4M628.5,647v2M717.5,647v2M943.5,647v3M91.5,648v3M128,648.5h1M148,648.5h1M183.5,648v3M196.5,648v3M271.5,648v2M339,648.5h1M459.5,648v3M517.5,648v2M540.5,648v2M572.5,648v4M575.5,648v2M619.5,648v3M737.5,648v4M751,648.5h1M843.5,648v3M861,648.5h1M1098.5,648v2M1119,648.5h1M1141.5,648v3M1161.5,648v4M129.5,649v4M149,649.5h1M253.5,649v3M305,649.5h1M312.5,649v4M364.5,649v2M368,649.5h1M476.5,649v4M520.5,649v2M627.5,649v2M718.5,649v3M752.5,649v2M860,649.5h1M862,649.5h1M876,649.5h5M933.5,649v2M1091.5,649v2M1120,649.5h5M150,650.5h2M272.5,650v3M284.5,650v2M306,650.5h1M366,650.5h2M518.5,650v2M541.5,650v2M574.5,650v2M815.5,650v4M859,650.5h1M863.5,650v2M875,650.5h1M881,650.5h1M919.5,650v2M944.5,650v3M1097,650.5h1M1124,650.5h1M90.5,651v3M152,651.5h1M184.5,651v3M195,651.5h1M218.5,651v4M307,651.5h1M365,651.5h1M460.5,651v2M519.5,651v2M548.5,651v3M620.5,651v2M624,651.5h3M753,651.5h1M844.5,651v2M858,651.5h1M874,651.5h1M882,651.5h1M917,651.5h2M932.5,651v3M955.5,651v6M1092,651.5h2M1096.5,651v2M1125.5,651v3M1140.5,651v4M76.5,652v6M130.5,652v3M153,652.5h1M156.5,652v3M194.5,652v2M252.5,652v2M283.5,652v2M308,652.5h1M542,652.5h2M573.5,652v2M621,652.5h3M719.5,652v2M736.5,652v4M754,652.5h1M857.5,652v2M864,652.5h1M873,652.5h1M883,652.5h1M915,652.5h2M920.5,652v3M1094,652.5h1M1162.5,652v3M154,653.5h2M273.5,653v3M309,653.5h1M311.5,653v3M461.5,653v3M475.5,653v4M544,653.5h4M755,653.5h1M845.5,653v3M865,653.5h1M872,653.5h1M884,653.5h1M908,653.5h7M945.5,653v4M1095,653.5h1M89.5,654v2M185.5,654v2M188,654.5h3M193,654.5h1M251.5,654v3M282.5,654v2M310,654.5h1M720.5,654v2M756,654.5h1M814.5,654v4M856.5,654v2M866,654.5h2M870,654.5h2M885,654.5h1M906,654.5h2M931.5,654v2M1126.5,654v3M186,655.5h2M191,655.5h2M219.5,655v4M757,655.5h1M868,655.5h2M886.5,655v2M904,655.5h2M921.5,655v2M1139.5,655v2M1163.5,655v4M88,656.5h1M274.5,656v2M281.5,656v2M462.5,656v3M721.5,656v2M735.5,656v3M758,656.5h1M846.5,656v2M855.5,656v2M903,656.5h1M930.5,656v2M86,657.5h2M250.5,657v2M275,657.5h6M474.5,657v4M759,657.5h1M887,657.5h1M902,657.5h1M922.5,657v2M946.5,657v3M954.5,657v4M1127.5,657v2M1138.5,657v2M77,658.5h1M85,658.5h1M722,658.5h1M760,658.5h1M813.5,658v2M847.5,658v2M854,658.5h1M888,658.5h1M901,658.5h1M929,658.5h1M78,659.5h2M84,659.5h1M220.5,659v3M242,659.5h1M249,659.5h1M463.5,659v3M723,659.5h1M733,659.5h2M761,659.5h1M782,659.5h1M853.5,659v2M889,659.5h1M893,659.5h2M900,659.5h1M923,659.5h1M928.5,659v2M1128,659.5h1M1137.5,659v2M1164.5,659v2M80,660.5h1M82,660.5h2M240,660.5h2M243,660.5h2M248,660.5h1M724,660.5h1M732,660.5h1M762,660.5h1M780,660.5h2M783.5,660v2M812.5,660v2M848.5,660v2M890,660.5h3M895,660.5h1M899,660.5h1M924,660.5h1M947.5,660v2M1129.5,660v2M81,661.5h1M239,661.5h1M245,661.5h1M247,661.5h1M473.5,661v3M725,661.5h1M731,661.5h1M763,661.5h1M775,661.5h5M852,661.5h1M896,661.5h1M898,661.5h1M925,661.5h1M927,661.5h1M953,661.5h1M1136.5,661v2M221.5,662v2M224,662.5h2M238,662.5h1M246,662.5h1M464.5,662v2M726,662.5h1M730,662.5h1M764,662.5h2M774,662.5h1M784,662.5h1M800,662.5h1M811,662.5h1M849.5,662v2M851.5,662v2M897,662.5h1M926,662.5h1M948,662.5h2M951,662.5h2M1130,662.5h1M222,663.5h2M226,663.5h1M236,663.5h2M727,663.5h1M729,663.5h1M766,663.5h2M773.5,663v2M785.5,663v2M798,663.5h2M801,663.5h1M810,663.5h1M950,663.5h1M1131,663.5h5M227,664.5h1M235,664.5h1M465.5,664v2M472,664.5h1M728,664.5h1M768,664.5h1M795,664.5h3M802.5,664v2M809,664.5h1M850,664.5h1M228,665.5h2M233,665.5h2M471.5,665v2M769,665.5h2M772,665.5h1M786,665.5h1M793,665.5h2M808,665.5h1M230,666.5h3M466,666.5h2M771,666.5h1M787,666.5h2M791,666.5h2M803,666.5h1M806,666.5h2M468,667.5h1M470,667.5h1M789,667.5h2M804,667.5h2M469,668.5h1" fill="none" stroke="#ff0000" stroke-width="1"/>
<path d="M55.5,680v2M56,681.5h1M54.5,682v4M57.5,682v2M63,682.5h1M62,683.5h1M64.5,683v2M58,684.5h1M60,684.5h2M59,685.5h1M65,685.5h1M69,685.5h2M53.5,686v3M66,686.5h3M71,686.5h1M408,686.5h1M72,687.5h1M407,687.5h1M409,687.5h1M73,688.5h1M405,688.5h2M410,688.5h1M991,688.5h5M1009.5,688v3M52.5,689v3M74.5,689v2M404,689.5h1M411.5,689v2M854.5,689v2M990,689.5h1M995,689.5h1M1008,689.5h1M403.5,690v2M855.5,690v2M989.5,690v2M996.5,690v3M1006,690.5h2M1026,690.5h3M75,691.5h1M84,691.5h4M412,691.5h1M671,691.5h5M692,691.5h3M853.5,691v2M1005,691.5h1M1010.5,691v5M1024,691.5h2M1029,691.5h2M1034,691.5h3M51.5,692v4M76.5,692v2M81,692.5h3M88,692.5h2M402.5,692v2M413.5,692v2M670.5,692v2M676,692.5h1M681,692.5h3M690,692.5h2M695,692.5h2M856.5,692v2M988,692.5h1M1004.5,692v4M1022,692.5h2M1031,692.5h3M1037,692.5h2M79,693.5h2M90.5,693v2M664,693.5h1M677,693.5h1M679,693.5h2M684,693.5h6M696,693.5h1M852.5,693v3M987.5,693v2M997.5,693v2M1020,693.5h2M1039,693.5h4M77,694.5h2M401.5,694v2M414,694.5h1M663,694.5h1M665,694.5h2M669.5,694v2M678,694.5h1M697.5,694v3M857.5,694v2M1019.5,694v2M1043,694.5h2M91,695.5h1M415,695.5h1M606.5,695v2M661,695.5h2M667,695.5h1M986.5,695v2M998.5,695v3M1045,695.5h1M50.5,696v9M92.5,696v4M382,696.5h1M400.5,696v2M416.5,696v2M607.5,696v2M660,696.5h1M668,696.5h1M851.5,696v2M858.5,696v3M969.5,696v3M1003.5,696v7M1011.5,696v4M1018.5,696v2M1046,696.5h2M170,697.5h3M381.5,697v2M383,697.5h2M396,697.5h4M605.5,697v3M659,697.5h1M698.5,697v2M970.5,697v2M985.5,697v2M1048,697.5h1M169,698.5h1M173,698.5h2M385,698.5h1M394,698.5h2M417,698.5h1M608.5,698v2M658.5,698v2M850.5,698v2M999.5,698v2M1017.5,698v2M1049,698.5h1M168,699.5h1M174,699.5h1M380.5,699v3M386,699.5h8M418,699.5h1M699.5,699v3M859.5,699v6M968.5,699v4M971,699.5h1M984,699.5h1M1050.5,699v2M93.5,700v6M166,700.5h2M175.5,700v2M419,700.5h1M604.5,700v3M609.5,700v2M657,700.5h1M849.5,700v2M972.5,700v2M983,700.5h1M1000.5,700v3M1012.5,700v3M1016,700.5h1M165,701.5h1M199,701.5h1M420.5,701v2M656.5,701v2M982.5,701v2M1014,701.5h2M1051,701.5h1M164,702.5h1M176.5,702v2M198,702.5h1M200.5,702v2M379.5,702v2M610.5,702v2M700.5,702v2M848.5,702v2M973,702.5h1M1013,702.5h1M1052.5,702v2M163.5,703v2M197,703.5h1M421,703.5h1M603.5,703v2M617,703.5h1M655.5,703v4M967.5,703v5M974,703.5h2M981,703.5h1M1001,703.5h2M177.5,704v2M195,704.5h2M201.5,704v2M378.5,704v2M422.5,704v2M611.5,704v2M616,704.5h1M618.5,704v2M624,704.5h5M701.5,704v3M847.5,704v2M976,704.5h1M979,704.5h2M1001,704.5h2M1053,704.5h7M1076,704.5h6M49.5,705v16M162,705.5h1M178,705.5h4M188,705.5h7M504,705.5h7M602.5,705v2M615.5,705v2M623,705.5h1M629,705.5h1M635,705.5h1M860.5,705v6M977,705.5h2M1002.5,705v2M1060,705.5h1M1074,705.5h2M1082,705.5h2M94.5,706v6M161,706.5h1M182,706.5h2M186,706.5h2M202,706.5h1M350,706.5h1M377.5,706v2M423,706.5h1M503,706.5h1M511,706.5h3M612.5,706v2M619,706.5h1M621,706.5h2M630,706.5h1M633,706.5h2M636,706.5h2M846.5,706v4M1061,706.5h2M1068,706.5h6M1084,706.5h2M160.5,707v2M184,707.5h2M203.5,707v2M349,707.5h1M351,707.5h1M424,707.5h2M502,707.5h1M514,707.5h2M601.5,707v2M614,707.5h1M620,707.5h1M631,707.5h2M638,707.5h1M654.5,707v3M702.5,707v2M1063,707.5h1M1066,707.5h2M1086,707.5h1M343,708.5h3M348,708.5h1M352.5,708v2M376.5,708v2M426,708.5h2M501,708.5h1M516,708.5h2M613,708.5h1M639,708.5h5M966.5,708v3M1064,708.5h2M1087.5,708v2M159.5,709v2M204,709.5h1M342,709.5h1M346,709.5h2M428,709.5h2M500,709.5h1M518,709.5h1M600,709.5h1M644,709.5h1M703.5,709v2M120,710.5h1M205.5,710v2M341,710.5h1M353,710.5h1M375,710.5h1M430,710.5h3M444.5,710v2M499,710.5h1M519,710.5h4M587,710.5h4M599,710.5h1M645,710.5h1M653.5,710v4M704,710.5h6M845.5,710v4M1088,710.5h1M119,711.5h1M121,711.5h1M158.5,711v3M340.5,711v2M354.5,711v2M374,711.5h1M433,711.5h5M441,711.5h3M490,711.5h3M497,711.5h2M523,711.5h6M585,711.5h2M591,711.5h1M598,711.5h1M646.5,711v2M710,711.5h1M861.5,711v6M965,711.5h1M1089.5,711v2M95.5,712v3M118.5,712v2M122,712.5h1M206,712.5h1M373,712.5h1M438,712.5h3M445.5,712v4M489.5,712v2M493,712.5h4M529,712.5h3M583,712.5h2M592,712.5h1M597.5,712v2M711.5,712v2M964.5,712v2M123,713.5h1M207,713.5h1M339.5,713v2M355.5,713v2M371,713.5h2M531,713.5h1M580,713.5h3M593,713.5h1M647.5,713v4M958,713.5h2M1090.5,713v2M117,714.5h1M124,714.5h12M157.5,714v3M208,714.5h2M368,714.5h3M483,714.5h2M488.5,714v2M532.5,714v2M552,714.5h2M577,714.5h3M594,714.5h1M596,714.5h1M652.5,714v3M712,714.5h1M844.5,714v3M958,714.5h1M960,714.5h2M963,714.5h1M1100,714.5h5M96,715.5h2M116,715.5h1M136,715.5h2M210.5,715v2M328.5,715v2M338.5,715v2M356.5,715v2M367,715.5h1M482,715.5h1M485,715.5h2M551.5,715v2M554,715.5h2M576,715.5h1M595,715.5h1M713,715.5h1M957.5,715v3M962,715.5h1M1091.5,715v2M1096,715.5h4M1105,715.5h5M98,716.5h2M115.5,716v2M138,716.5h6M152,716.5h2M329,716.5h1M366,716.5h1M446.5,716v3M481,716.5h1M487,716.5h1M533.5,716v2M538,716.5h1M556,716.5h8M570,716.5h1M575,716.5h1M714,716.5h1M1094,716.5h2M1110.5,716v2M100,717.5h2M144,717.5h2M151,717.5h1M154,717.5h3M211.5,717v3M327.5,717v4M330,717.5h1M337.5,717v2M357,717.5h9M480,717.5h1M536,717.5h2M539,717.5h2M550.5,717v2M564,717.5h2M568,717.5h2M571,717.5h2M574,717.5h1M648.5,717v4M651.5,717v2M715,717.5h1M833,717.5h2M843.5,717v2M862.5,717v8M1092,717.5h2M102,718.5h3M114,718.5h1M146,718.5h5M156,718.5h1M318,718.5h2M331,718.5h1M478,718.5h2M534,718.5h2M541,718.5h1M566,718.5h2M573,718.5h1M716,718.5h1M833,718.5h1M835,718.5h8M908.5,718v2M956.5,718v3M1111,718.5h1M105,719.5h3M112,719.5h2M221,719.5h1M318,719.5h1M320,719.5h2M332,719.5h1M335,719.5h2M447.5,719v2M476,719.5h2M542,719.5h3M548,719.5h2M650.5,719v2M717,719.5h1M832.5,719v2M909,719.5h1M933,719.5h6M1112.5,719v2M108,720.5h4M212.5,720v3M219,720.5h2M222.5,720v2M317.5,720v3M321,720.5h1M333,720.5h2M457,720.5h7M474,720.5h2M545,720.5h3M718,720.5h1M907.5,720v2M910,720.5h2M931,720.5h2M939,720.5h1M48.5,721v9M217,721.5h2M322.5,721v2M326.5,721v4M448,721.5h1M455,721.5h2M464,721.5h2M473,721.5h1M649.5,721v2M719,721.5h1M831.5,721v3M912,721.5h1M919,721.5h1M929,721.5h2M940.5,721v2M955.5,721v3M1113,721.5h5M216,722.5h1M223,722.5h1M449,722.5h2M453,722.5h2M466,722.5h1M472.5,722v2M720,722.5h1M724,722.5h2M906.5,722v3M913,722.5h1M918.5,722v2M920,722.5h2M925,722.5h4M1118,722.5h1M213,723.5h3M224,723.5h1M268,723.5h4M316.5,723v2M323.5,723v2M451,723.5h2M467,723.5h2M721,723.5h3M726.5,723v2M821.5,723v3M914,723.5h4M922,723.5h3M941,723.5h1M1119,723.5h1M213,724.5h1M225,724.5h2M236,724.5h1M266,724.5h2M271,724.5h1M469,724.5h1M471,724.5h1M822,724.5h1M830.5,724v2M942,724.5h1M954.5,724v3M1120,724.5h1M227,725.5h2M234,725.5h2M237,725.5h1M257,725.5h9M272.5,725v2M315.5,725v3M324,725.5h2M470,725.5h1M727,725.5h1M823,725.5h2M863.5,725v6M905.5,725v3M943.5,725v2M1121,725.5h2M1156,725.5h8M229,726.5h5M238,726.5h1M257,726.5h1M282.5,726v2M324,726.5h2M728.5,726v2M820.5,726v4M825,726.5h1M829.5,726v2M1123,726.5h2M1143,726.5h3M1155,726.5h1M239,727.5h1M256.5,727v2M273.5,727v2M289.5,727v2M325,727.5h1M740,727.5h3M826,727.5h3M944.5,727v2M953.5,727v2M1125,727.5h1M1141,727.5h2M1146,727.5h4M1153,727.5h2M240,728.5h1M281.5,728v2M283.5,728v4M290.5,728v2M314.5,728v3M729,728.5h1M739,728.5h1M743,728.5h2M872.5,728v2M904.5,728v2M1126,728.5h1M1140,728.5h1M1150,728.5h3M241,729.5h1M255.5,729v3M274,729.5h1M288.5,729v2M730,729.5h1M738.5,729v2M745.5,729v2M870,729.5h2M945.5,729v2M952.5,729v3M1127,729.5h1M1138,729.5h2M47.5,730v2M242,730.5h1M275,730.5h1M280.5,730v2M291.5,730v2M731.5,730v2M775,730.5h1M819.5,730v4M868,730.5h2M873.5,730v2M903.5,730v3M1128,730.5h2M1136,730.5h2M243.5,731v2M276,731.5h4M287.5,731v2M313.5,731v2M737,731.5h1M746.5,731v2M774.5,731v2M776,731.5h1M793,731.5h5M864.5,731v5M868,731.5h1M946.5,731v2M1130,731.5h2M1134,731.5h2M46.5,732v3M254.5,732v2M284.5,732v3M292,732.5h1M732,732.5h5M777,732.5h2M792,732.5h1M798,732.5h1M867.5,732v2M874.5,732v3M951.5,732v2M1132,732.5h2M244.5,733v2M253,733.5h1M286.5,733v2M293,733.5h1M312.5,733v2M747,733.5h1M764,733.5h1M773,733.5h1M779,733.5h1M790,733.5h2M799,733.5h1M886,733.5h9M902.5,733v2M947,733.5h4M250,734.5h3M294.5,734v2M748.5,734v2M763,734.5h1M765.5,734v2M772.5,734v2M780,734.5h1M789,734.5h1M800.5,734v2M818.5,734v3M866.5,734v3M885.5,734v2M894,734.5h1M45.5,735v2M245.5,735v2M249,735.5h1M285.5,735v2M311.5,735v2M761,735.5h2M781,735.5h1M788,735.5h1M875.5,735v4M895.5,735v2M901.5,735v2M247,736.5h2M295,736.5h1M749.5,736v2M760,736.5h1M766.5,736v2M771,736.5h1M782,736.5h1M787,736.5h1M801.5,736v2M865.5,736v3M884.5,736v2M246,737.5h1M296,737.5h1M304,737.5h2M310,737.5h1M758,737.5h2M769,737.5h2M783,737.5h1M785,737.5h2M817.5,737v2M896.5,737v2M900,737.5h1M297,738.5h2M302,738.5h2M306,738.5h2M309,738.5h1M750,738.5h8M767,738.5h2M784,738.5h1M802.5,738v3M883.5,738v2M898,738.5h2M299,739.5h3M308,739.5h1M816,739.5h1M876.5,739v2M897,739.5h1M815.5,740v2M877,740.5h6M803.5,741v2M814.5,742v2M804.5,743v3M813.5,744v2M805.5,746v2M812.5,746v3M806.5,748v2M811.5,749v2M807,750.5h4" fill="none" stroke="#ff0000" stroke-width="1"/>
<path d="M606.5,761v2M1048,761.5h3M605.5,762v2M670,762.5h4M1047,762.5h1M1051,762.5h7M1069,762.5h11M406,763.5h3M607.5,763v2M664,763.5h6M674,763.5h2M692,763.5h1M1046.5,763v2M1058,763.5h2M1063,763.5h6M1080,763.5h2M404,764.5h2M409,764.5h2M604.5,764v2M660,764.5h4M676,764.5h3M690,764.5h2M693,764.5h1M1020,764.5h10M1060,764.5h3M1082,764.5h1M403,765.5h1M411.5,765v2M608.5,765v2M659,765.5h1M679,765.5h2M688,765.5h2M694,765.5h1M1018,765.5h2M1030,765.5h16M1083,765.5h1M171,766.5h1M402,766.5h1M603,766.5h1M658,766.5h1M681,766.5h7M695,766.5h1M1008,766.5h10M1084,766.5h1M169,767.5h2M172,767.5h1M383,767.5h16M401.5,767v2M412,767.5h1M602.5,767v2M609.5,767v2M657,767.5h1M696,767.5h1M705,767.5h3M1007,767.5h1M1085,767.5h1M163,768.5h6M173,768.5h1M382,768.5h1M399,768.5h1M413.5,768v2M656,768.5h1M697,768.5h8M708,768.5h1M1006,768.5h1M1086,768.5h1M162,769.5h1M174,769.5h1M380,769.5h2M400,769.5h1M601.5,769v2M610.5,769v2M655.5,769v2M709,769.5h1M1005,769.5h1M1087,769.5h1M160,770.5h2M175,770.5h1M202,770.5h9M379,770.5h1M414,770.5h1M710,770.5h1M1004.5,770v2M1088,770.5h1M159.5,771v2M176,771.5h1M200,771.5h2M210,771.5h1M378.5,771v2M415,771.5h1M425,771.5h1M600.5,771v2M611.5,771v2M654,771.5h1M711,771.5h1M1089,771.5h2M1096,771.5h14M177,772.5h1M199,772.5h1M211.5,772v4M416,772.5h2M423,772.5h2M426,772.5h2M491,772.5h1M501,772.5h5M653.5,772v2M712,772.5h2M969,772.5h2M1003.5,772v2M1091,772.5h1M1094,772.5h2M1109,772.5h1M158.5,773v2M178,773.5h2M197,773.5h2M377.5,773v2M418,773.5h1M421,773.5h2M428,773.5h2M434,773.5h5M490,773.5h1M492,773.5h2M497,773.5h4M506,773.5h2M599.5,773v2M612.5,773v2M617,773.5h3M714,773.5h1M968.5,773v2M971,773.5h2M1092,773.5h2M1110.5,773v2M59,774.5h9M180,774.5h2M195,774.5h2M419,774.5h2M430,774.5h4M439,774.5h7M489,774.5h1M494,774.5h3M508,774.5h1M615,774.5h2M620,774.5h5M632,774.5h4M642,774.5h11M715,774.5h1M973,774.5h3M997,774.5h6M56,775.5h3M68,775.5h2M157.5,775v3M182,775.5h13M376.5,775v3M446,775.5h2M480,775.5h7M488,775.5h1M509,775.5h2M514,775.5h18M588,775.5h1M597,775.5h2M613,775.5h2M625,775.5h7M636,775.5h2M640,775.5h2M716,775.5h1M967.5,775v2M976,775.5h21M1111.5,775v2M54,776.5h2M70,776.5h2M97,776.5h10M212.5,776v4M448,776.5h5M479,776.5h1M487,776.5h1M511,776.5h3M532,776.5h2M552,776.5h1M587,776.5h1M589,776.5h1M595,776.5h2M638,776.5h2M717,776.5h2M52,777.5h2M72,777.5h1M94,777.5h3M107,777.5h2M134,777.5h1M141,777.5h2M453,777.5h2M478,777.5h1M534,777.5h2M551.5,777v2M553,777.5h2M578,777.5h4M586,777.5h1M590,777.5h1M593,777.5h2M719,777.5h1M966.5,777v2M1112,777.5h1M51.5,778v2M73,778.5h1M92,778.5h2M109,778.5h12M133.5,778v2M135,778.5h2M139,778.5h2M143,778.5h2M156.5,778v2M375.5,778v2M455,778.5h1M477,778.5h1M536,778.5h2M555,778.5h1M559,778.5h5M569,778.5h3M576,778.5h2M582,778.5h2M585,778.5h1M591,778.5h2M720.5,778v2M958,778.5h2M1113.5,778v2M74,779.5h2M90,779.5h2M121,779.5h2M137,779.5h2M145,779.5h2M456,779.5h1M475,779.5h2M538,779.5h1M550.5,779v2M556,779.5h3M564,779.5h5M572,779.5h1M574,779.5h2M584,779.5h1M833,779.5h5M957.5,779v2M960,779.5h6M50.5,780v3M76,780.5h1M80,780.5h10M123,780.5h2M132.5,780v2M147,780.5h7M155.5,780v2M213.5,780v2M374,780.5h1M457,780.5h2M474,780.5h1M539.5,780v2M573,780.5h1M721.5,780v2M724,780.5h2M832,780.5h1M838,780.5h2M854,780.5h4M1114,780.5h5M77,781.5h3M125,781.5h4M154,781.5h1M214,781.5h8M372,781.5h2M459,781.5h2M473,781.5h1M549.5,781v2M722,781.5h2M726,781.5h1M821,781.5h2M831,781.5h1M840,781.5h2M853,781.5h1M858,781.5h1M956.5,781v2M1119,781.5h2M129,782.5h3M222,782.5h1M344,782.5h7M362,782.5h2M368,782.5h4M461,782.5h2M472,782.5h1M540,782.5h1M727,782.5h1M738,782.5h6M820.5,782v2M823,782.5h2M830,782.5h1M842,782.5h7M851,782.5h2M859,782.5h2M1121,782.5h1M49.5,783v4M223,783.5h1M318,783.5h2M343,783.5h1M351,783.5h2M360,783.5h2M364,783.5h4M463,783.5h4M470,783.5h2M541,783.5h8M728,783.5h1M737,783.5h1M744,783.5h1M825,783.5h5M849,783.5h2M861,783.5h1M955.5,783v3M1122,783.5h2M224,784.5h1M316,784.5h2M320,784.5h2M342,784.5h1M353,784.5h3M358,784.5h2M467,784.5h3M729,784.5h1M736,784.5h1M745,784.5h1M819.5,784v2M862,784.5h1M1124,784.5h1M1141,784.5h11M225,785.5h1M236,785.5h3M315,785.5h1M322,785.5h10M340,785.5h2M356,785.5h2M730,785.5h1M734,785.5h2M746,785.5h1M863,785.5h1M934,785.5h1M1125,785.5h1M1140,785.5h1M1152,785.5h4M226,786.5h2M235,786.5h1M239,786.5h3M252,786.5h13M314,786.5h1M332,786.5h4M339,786.5h1M731,786.5h1M733,786.5h1M747,786.5h1M818.5,786v2M864,786.5h1M869,786.5h7M932,786.5h2M935,786.5h2M954.5,786v3M1126.5,786v2M1139.5,786v2M1156,786.5h4M48.5,787v2M228,787.5h1M233,787.5h2M242,787.5h1M250,787.5h2M265,787.5h3M282,787.5h1M312,787.5h2M336,787.5h3M732,787.5h1M748,787.5h3M865,787.5h1M867,787.5h2M876,787.5h42M931,787.5h1M937,787.5h1M1160,787.5h2M229,788.5h4M243,788.5h1M249,788.5h1M268,788.5h1M281.5,788v2M283,788.5h1M311,788.5h1M751,788.5h4M817.5,788v3M866,788.5h1M918,788.5h3M929,788.5h2M938,788.5h2M1127,788.5h1M1138,788.5h1M1162,788.5h2M244,789.5h1M248,789.5h1M269,789.5h1M284.5,789v2M289,789.5h4M310,789.5h1M755,789.5h2M921,789.5h2M927,789.5h2M940,789.5h1M953.5,789v3M1128,789.5h1M1137.5,789v2M245,790.5h1M247,790.5h1M270,790.5h1M280.5,790v2M288,790.5h1M293,790.5h2M304,790.5h2M308,790.5h2M757,790.5h6M923,790.5h4M941,790.5h2M1129.5,790v2M246,791.5h1M271,791.5h1M285,791.5h1M287,791.5h1M295,791.5h1M302,791.5h2M306,791.5h2M763,791.5h2M774,791.5h3M816.5,791v2M943,791.5h2M1136.5,791v2M272,792.5h1M279.5,792v2M286,792.5h1M296,792.5h6M765,792.5h2M773,792.5h1M777,792.5h6M790,792.5h7M945,792.5h2M952.5,792v2M1130,792.5h1M273,793.5h1M767,793.5h3M772,793.5h1M783,793.5h7M797,793.5h2M815.5,793v3M947,793.5h5M1131,793.5h5M274,794.5h5M770,794.5h2M799,794.5h1M800,795.5h1M801,796.5h1M814.5,796v2M802,797.5h1M803,798.5h2M813,798.5h1M805,799.5h2M812,799.5h1M807,800.5h2M811,800.5h1M809,801.5h2" fill="none" stroke="#ff0000" stroke-width="1"/>
<path d="M1121,703.5h4M1115,704.5h6M1109,705.5h6M1102,706.5h7M1096,707.5h6M1089,708.5h7M1083,709.5h6M1077,710.5h6M1070,711.5h7M1064,712.5h6M1057,713.5h7M1051,714.5h6M1045,715.5h6M1038,716.5h7M1032,717.5h6M1025,718.5h7M1019,719.5h6M1013,720.5h6M1006,721.5h7M1000,722.5h6M994,723.5h6M987,724.5h7M981,725.5h6M974,726.5h7M968,727.5h6M962,728.5h6M955,729.5h7M949,730.5h6M942,731.5h7M936,732.5h6M930,733.5h6M923,734.5h7M917,735.5h6M911,736.5h6M904,737.5h7M898,738.5h6M891,739.5h7M885,740.5h6M879,741.5h6M872,742.5h7M866,743.5h6M859,744.5h7M853,745.5h6M847,746.5h6M840,747.5h7M834,748.5h6M827,749.5h7M821,750.5h6M815,751.5h6M811,752.5h4" fill="none" stroke="#0000ff" stroke-width="1"/>
<path d="M1100,761.5h4M1092,762.5h8M1085,763.5h7M1078,764.5h7M1070,765.5h8M1063,766.5h7M1056,767.5h7M1048,768.5h8M1041,769.5h7M1033,770.5h8M1026,771.5h7M1019,772.5h7M1011,773.5h8M1004,774.5h7M997,775.5h7M989,776.5h8M982,777.5h7M974,778.5h8M967,779.5h7M960,780.5h7M952,781.5h8M945,782.5h7M938,783.5h7M930,784.5h8M923,785.5h7M915,786.5h8M908,787.5h7M901,788.5h7M893,789.5h8M886,790.5h7M879,791.5h7M871,792.5h8M864,793.5h7M856,794.5h8M849,795.5h7M842,796.5h7M834,797.5h8M827,798.5h7M820,799.5h7M812,800.5h8M808,801.5h4" fill="none" stroke="#0000ff" stroke-width="1"/>
<path d="M1075,788.5h11M1054,789.5h21M1032,790.5h22M1011,791.5h21M990,792.5h21M968,793.5h22M947,794.5h21M926,795.5h21M904,796.5h22M883,797.5h21M862,798.5h21M840,799.5h22M819,800.5h21M808,801.5h11" fill="none" stroke="#0000ff" stroke-width="1"/>
</g>
<g font-family="Liberation Sans, sans-serif" fill="#000" filter="url(#txt)">
<text x="1246" y="15" text-anchor="end" font-size="11">200</text>
<text x="1246" y="37" text-anchor="end" font-size="11">150</text>
<text x="1246" y="57" text-anchor="end" font-size="11">100</text>
<text x="1246" y="77" text-anchor="end" font-size="11">50</text>
<text x="1246" y="98" text-anchor="end" font-size="11">0</text>
<text x="1246" y="118" text-anchor="end" font-size="11">-50</text>
<text x="1246" y="141" text-anchor="end" font-size="11">5.7</text>
<text x="1246" y="161" text-anchor="end" font-size="11">5.6</text>
<text x="1246" y="179" text-anchor="end" font-size="11">5.5</text>
<text x="1246" y="197" text-anchor="end" font-size="11">5.4</text>
<text x="1246" y="217" text-anchor="end" font-size="11">5.3</text>
<text x="1246" y="236" text-anchor="end" font-size="11">5.2</text>
<text x="1246" y="254" text-anchor="end" font-size="11">5.1</text>
<text x="1246" y="273" text-anchor="end" font-size="11">5.0</text>
<text x="1246" y="292" text-anchor="end" font-size="11">4.9</text>
<text x="1246" y="311" text-anchor="end" font-size="11">4.8</text>
<text x="1246" y="330" text-anchor="end" font-size="11">4.7</text>
<text x="1246" y="348" text-anchor="end" font-size="11">4.6</text>
<text x="1246" y="367" text-anchor="end" font-size="11">4.5</text>
<text x="1246" y="386" text-anchor="end" font-size="11">4.4</text>
<text x="1246" y="405" text-anchor="end" font-size="11">4.3</text>
<text x="1246" y="424" text-anchor="end" font-size="11">4.2</text>
<text x="1246" y="442" text-anchor="end" font-size="11">4.1</text>
<text x="1246" y="461" text-anchor="end" font-size="11">4.0</text>
<text x="1246" y="480" text-anchor="end" font-size="11">3.9</text>
<text x="1246" y="510" text-anchor="end" font-size="11">0.10</text>
<text x="1246" y="525" text-anchor="end" font-size="11">0.05</text>
<text x="1246" y="540" text-anchor="end" font-size="11">0.00</text>
<text x="1246" y="555" text-anchor="end" font-size="11">-0.05</text>
<text x="1246" y="570" text-anchor="end" font-size="11">-0.10</text>
<text x="1246" y="585" text-anchor="end" font-size="11">-0.15</text>
<text x="1246" y="599" text-anchor="end" font-size="11">-0.20</text>
<text x="1246" y="644" text-anchor="end" font-size="11">50</text>
<text x="1246" y="689" text-anchor="end" font-size="11">110</text>
<text x="1246" y="704" text-anchor="end" font-size="11">105</text>
<text x="1246" y="720" text-anchor="end" font-size="11">100</text>
<text x="1246" y="735" text-anchor="end" font-size="11">95</text>
<text x="1246" y="750" text-anchor="end" font-size="11">90</text>
<text x="1246" y="784" text-anchor="end" font-size="11">50</text>
<text x="1246" y="820" text-anchor="end" font-size="11">20000</text>
<text x="1246" y="832" text-anchor="end" font-size="11">10000</text>
<text x="4" y="854" text-anchor="start" font-size="11" textLength="24" lengthAdjust="spacingAndGlyphs">2005</text>
<text x="72" y="854" text-anchor="start" font-size="11" textLength="32.8" lengthAdjust="spacingAndGlyphs">August</text>
<text x="151" y="854" text-anchor="start" font-size="11" textLength="53" lengthAdjust="spacingAndGlyphs">September</text>
<text x="230" y="854" text-anchor="start" font-size="11" textLength="36.8" lengthAdjust="spacingAndGlyphs">October</text>
<text x="306" y="854" text-anchor="start" font-size="11" textLength="49" lengthAdjust="spacingAndGlyphs">November</text>
<text x="381" y="854" text-anchor="start" font-size="11" textLength="48.5" lengthAdjust="spacingAndGlyphs">December</text>
<text x="457" y="854" text-anchor="start" font-size="11" textLength="24.4" lengthAdjust="spacingAndGlyphs">2006</text>
<text x="536" y="854" text-anchor="start" font-size="11" textLength="42.4" lengthAdjust="spacingAndGlyphs">February</text>
<text x="608" y="854" text-anchor="start" font-size="11" textLength="28.3" lengthAdjust="spacingAndGlyphs">March</text>
<text x="691" y="854" text-anchor="start" font-size="11" textLength="20.3" lengthAdjust="spacingAndGlyphs">April</text>
<text x="755" y="854" text-anchor="start" font-size="11" textLength="19.6" lengthAdjust="spacingAndGlyphs">May</text>
<text x="835" y="854" text-anchor="start" font-size="11" textLength="22.4" lengthAdjust="spacingAndGlyphs">June</text>
<text x="914" y="854" text-anchor="start" font-size="11" textLength="19.9" lengthAdjust="spacingAndGlyphs">July</text>
<text x="989" y="854" text-anchor="start" font-size="11" textLength="32.8" lengthAdjust="spacingAndGlyphs">August</text>
<text x="1073" y="854" text-anchor="start" font-size="11" textLength="53" lengthAdjust="spacingAndGlyphs">September</text>
<text x="1147" y="854" text-anchor="start" font-size="11" textLength="36.8" lengthAdjust="spacingAndGlyphs">October</text>
<text x="531" y="13" text-anchor="start" font-size="11" textLength="144" lengthAdjust="spacingAndGlyphs">Volatility(Chaikin's) (-11.4186)</text>
<text x="465" y="137" text-anchor="start" font-size="11" textLength="275" lengthAdjust="spacingAndGlyphs">IMPRESA(4.47000, 4.48000, 4.43000, 4.44000, -0.03000)</text>
<text x="562" y="505" text-anchor="start" font-size="11" textLength="81" lengthAdjust="spacingAndGlyphs">MACD (-0.04598)</text>
<text x="530" y="616" text-anchor="start" font-size="11" textLength="146" lengthAdjust="spacingAndGlyphs">Stochastic Oscillator (13.7931)</text>
<text x="552" y="686" text-anchor="start" font-size="11" textLength="102" lengthAdjust="spacingAndGlyphs">Momentum (96.1039)</text>
<text x="524" y="771" text-anchor="start" font-size="11" textLength="158" lengthAdjust="spacingAndGlyphs">Relative Strength Index (31.3010)</text>
</g>
<g shape-rendering="crispEdges"><rect x="1207" y="827" width="22" height="11" fill="#fff"/><rect x="1208" y="827" width="21" height="1" fill="#000"/><rect x="1228" y="827" width="1" height="11" fill="#000"/><rect x="1208" y="827" width="1" height="11" fill="#000"/><rect x="1209" y="831" width="1" height="1" fill="#000"/><rect x="1211" y="831" width="1" height="1" fill="#000"/><rect x="1209" y="832" width="1" height="1" fill="#000"/><rect x="1211" y="832" width="1" height="1" fill="#000"/><rect x="1210" y="833" width="1" height="1" fill="#000"/><rect x="1209" y="834" width="1" height="1" fill="#000"/><rect x="1211" y="834" width="1" height="1" fill="#000"/><rect x="1209" y="835" width="1" height="1" fill="#000"/><rect x="1211" y="835" width="1" height="1" fill="#000"/><rect x="1215" y="830" width="1" height="1" fill="#000"/><rect x="1214" y="831" width="1" height="1" fill="#000"/><rect x="1215" y="831" width="1" height="1" fill="#000"/><rect x="1215" y="832" width="1" height="1" fill="#000"/><rect x="1215" y="833" width="1" height="1" fill="#000"/><rect x="1215" y="834" width="1" height="1" fill="#000"/><rect x="1215" y="835" width="1" height="1" fill="#000"/><rect x="1218" y="830" width="1" height="1" fill="#000"/><rect x="1219" y="830" width="1" height="1" fill="#000"/><rect x="1220" y="830" width="1" height="1" fill="#000"/><rect x="1221" y="830" width="1" height="1" fill="#000"/><rect x="1218" y="831" width="1" height="1" fill="#000"/><rect x="1221" y="831" width="1" height="1" fill="#000"/><rect x="1218" y="832" width="1" height="1" fill="#000"/><rect x="1221" y="832" width="1" height="1" fill="#000"/><rect x="1218" y="833" width="1" height="1" fill="#000"/><rect x="1221" y="833" width="1" height="1" fill="#000"/><rect x="1218" y="834" width="1" height="1" fill="#000"/><rect x="1221" y="834" width="1" height="1" fill="#000"/><rect x="1218" y="835" width="1" height="1" fill="#000"/><rect x="1219" y="835" width="1" height="1" fill="#000"/><rect x="1220" y="835" width="1" height="1" fill="#000"/><rect x="1221" y="835" width="1" height="1" fill="#000"/><rect x="1222" y="830" width="1" height="1" fill="#000"/><rect x="1223" y="830" width="1" height="1" fill="#000"/><rect x="1224" y="830" width="1" height="1" fill="#000"/><rect x="1225" y="830" width="1" height="1" fill="#000"/><rect x="1222" y="831" width="1" height="1" fill="#000"/><rect x="1225" y="831" width="1" height="1" fill="#000"/><rect x="1222" y="832" width="1" height="1" fill="#000"/><rect x="1225" y="832" width="1" height="1" fill="#000"/><rect x="1222" y="833" width="1" height="1" fill="#000"/><rect x="1225" y="833" width="1" height="1" fill="#000"/><rect x="1222" y="834" width="1" height="1" fill="#000"/><rect x="1225" y="834" width="1" height="1" fill="#000"/><rect x="1222" y="835" width="1" height="1" fill="#000"/><rect x="1223" y="835" width="1" height="1" fill="#000"/><rect x="1224" y="835" width="1" height="1" fill="#000"/><rect x="1225" y="835" width="1" height="1" fill="#000"/></g>
</svg>
</body></html>
